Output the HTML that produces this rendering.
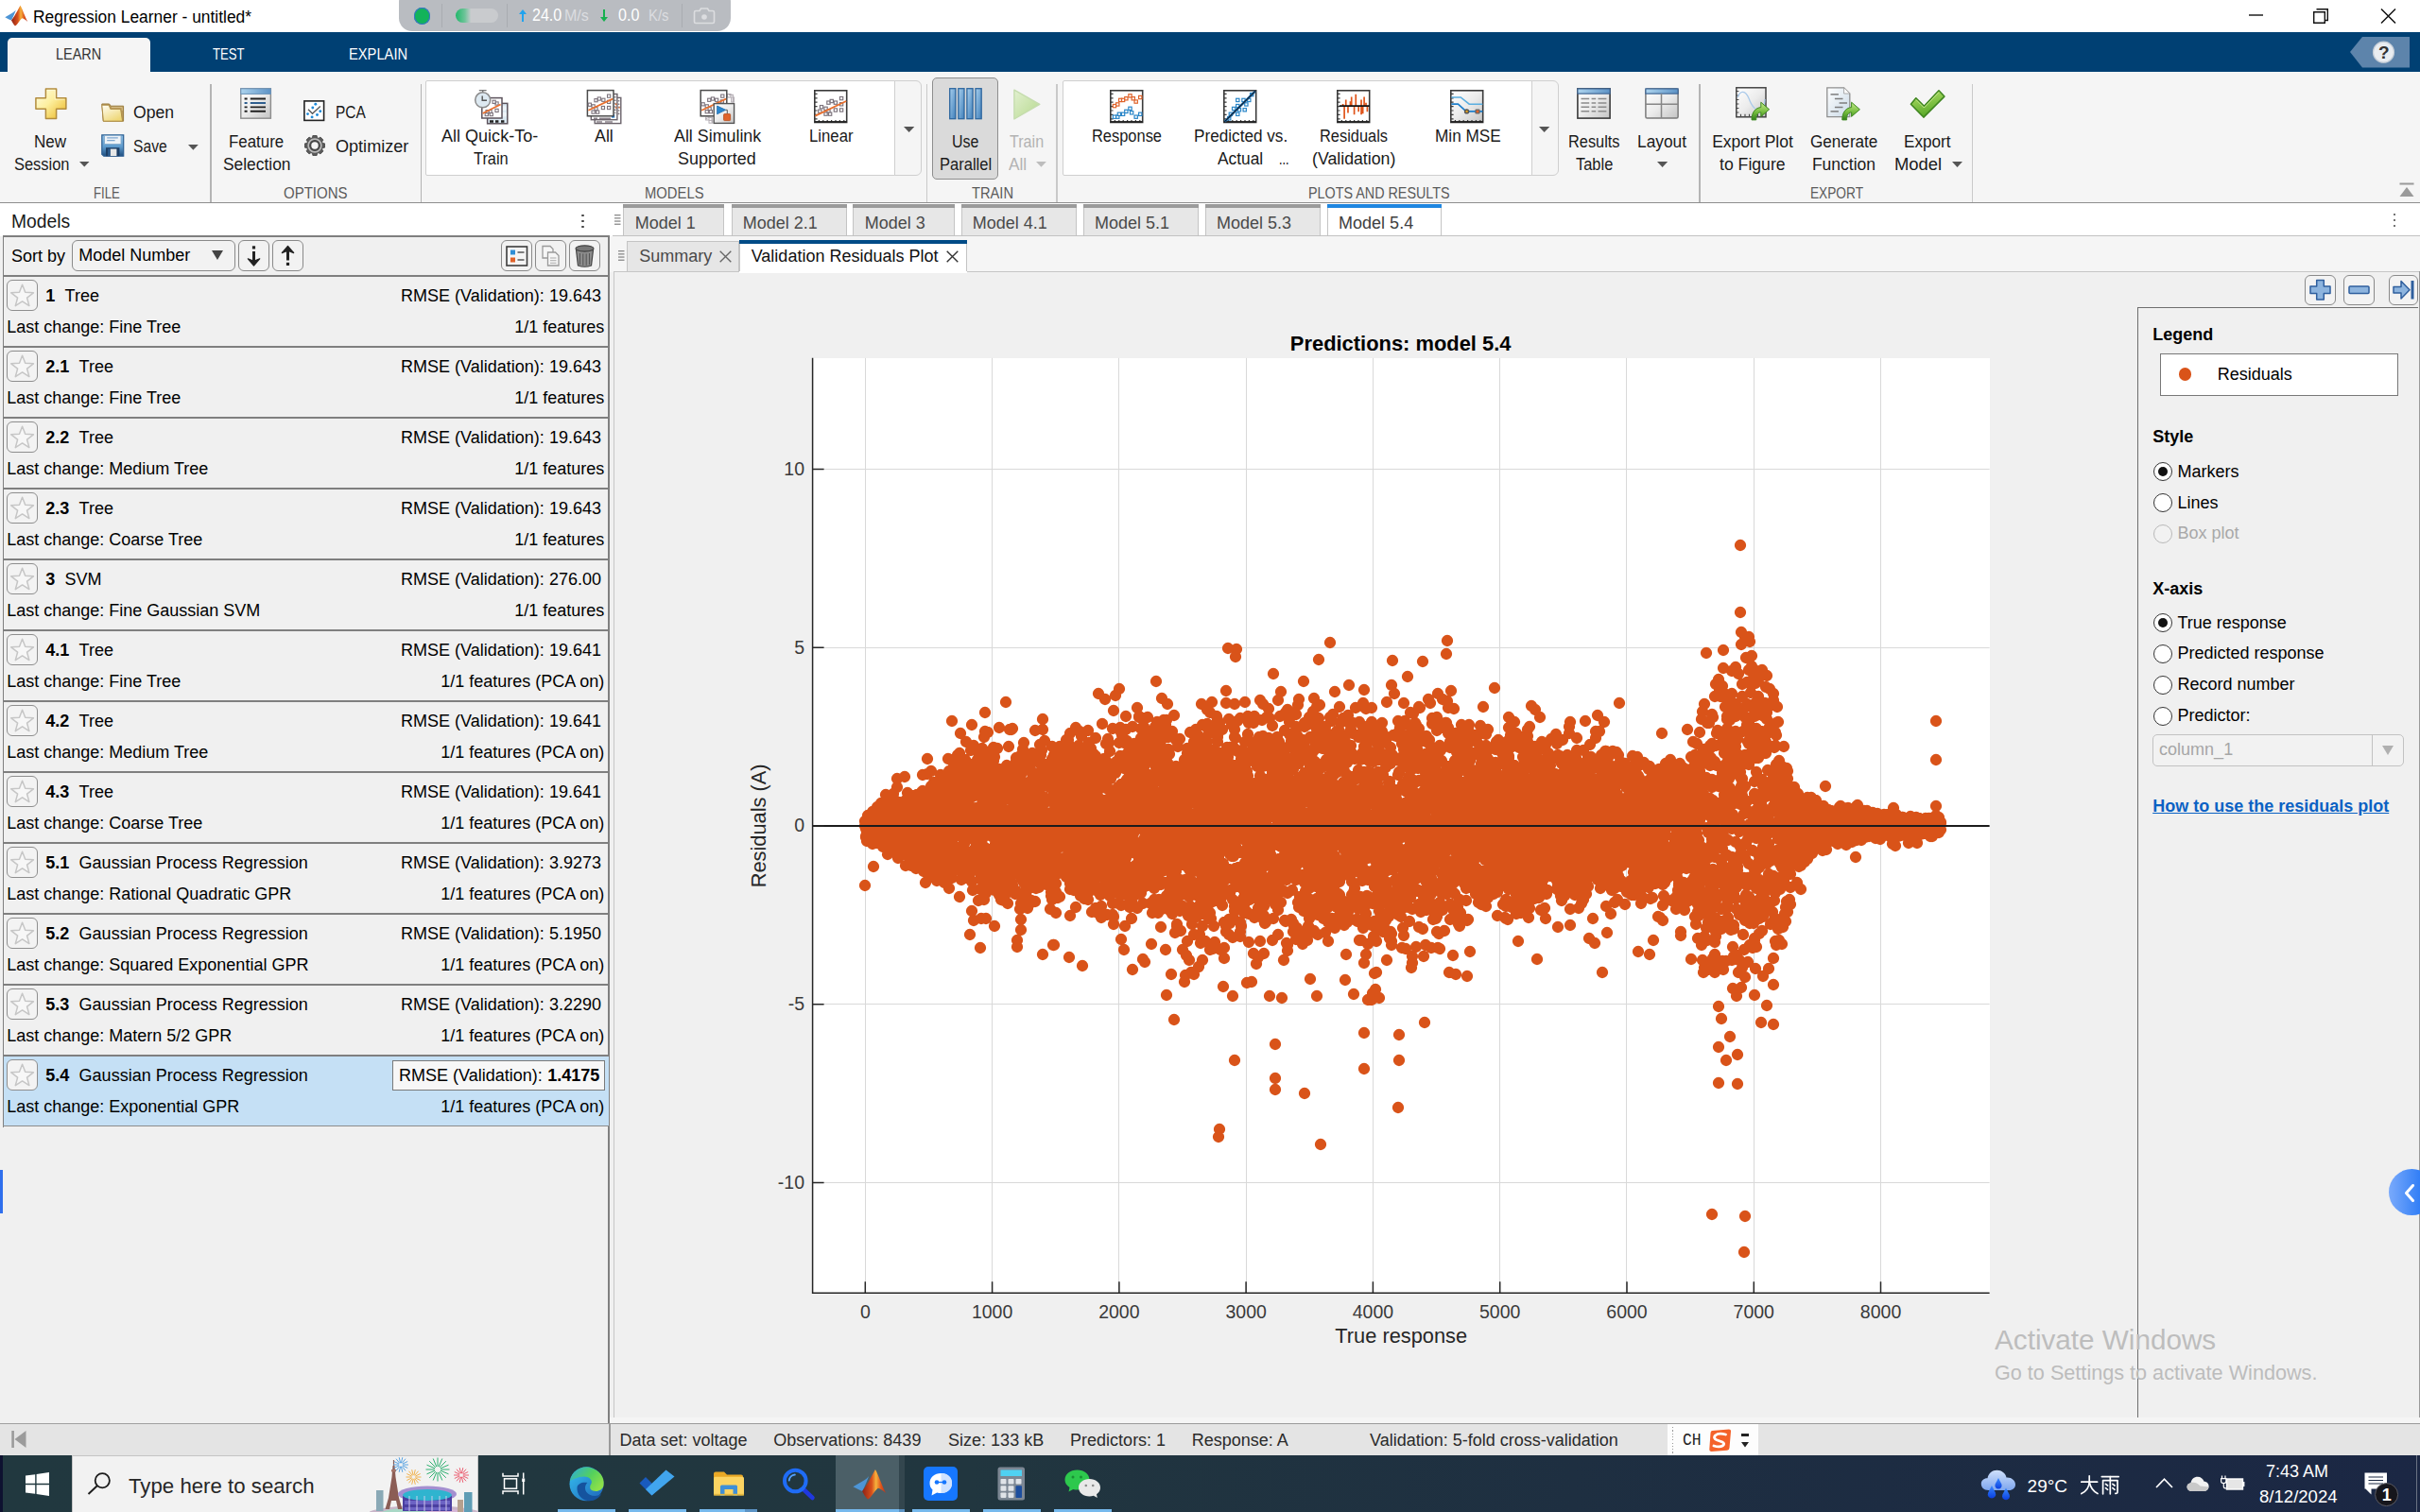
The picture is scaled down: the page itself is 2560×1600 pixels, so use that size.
<!DOCTYPE html>
<html><head><meta charset="utf-8"><title>Regression Learner</title>
<style>
html,body{margin:0;padding:0;overflow:hidden;}
body{width:2560px;height:1600px;overflow:hidden;position:relative;background:#f0f0f0;font-family:"Liberation Sans",sans-serif;}
.a{position:absolute;box-sizing:border-box;}
.t{position:absolute;white-space:pre;line-height:1;transform-origin:0 50%;font-family:"Liberation Sans",sans-serif;}
svg{overflow:visible;}
</style></head><body>
<div class="a" style="left:0px;top:0px;width:2560px;height:34px;background:#fff;"></div>
<svg class="a" style="left:4.6px;top:5.4px;" width="24.6" height="23" viewBox="0 0 24.6 23"><defs><linearGradient id="mlg" x1="0" y1="0" x2="1" y2="0"><stop offset="0" stop-color="#8e2216"/><stop offset="0.4" stop-color="#d8501c"/><stop offset="0.58" stop-color="#f6b23c"/><stop offset="0.78" stop-color="#e0581c"/><stop offset="1" stop-color="#b8301a"/></linearGradient></defs>
<path d="M0.3 13.2L8 8.8C9.6 8 10.6 7 11.8 5.6C10.6 9 9 13 7 16.5L4.4 15.4Z" fill="#4d95d6"/>
<path d="M16.5 0.7C18.6 4 21 12 24.3 18C22 16 20 14.5 18.5 14.3C16 16 13.5 21.5 11 22.4C9.5 21 8 18.6 7 16.5C10 13 13.6 6 16.5 0.7Z" fill="url(#mlg)"/></svg>
<span class="t" style="left:35.00px;top:10px;font-size:17.5px;color:#000;transform:scaleX(0.9936);">Regression Learner - untitled*</span>
<svg class="a" style="left:2379px;top:15px;" width="16" height="2" viewBox="0 0 16 2"><rect width="15" height="1.4" y="0.3" fill="#111"/></svg>
<svg class="a" style="left:2447px;top:9px;" width="17" height="16" viewBox="0 0 17 16"><path d="M3.5 0.7H15.3V12.5H12.5M0.7 3.7H12.3V15.3H0.7Z" fill="none" stroke="#111" stroke-width="1.4"/></svg>
<svg class="a" style="left:2518px;top:9px;" width="17" height="16" viewBox="0 0 17 16"><path d="M1 0.5L16 15.5M16 0.5L1 15.5" stroke="#111" stroke-width="1.5" fill="none"/></svg>
<div class="a" style="left:422px;top:-12px;width:351px;height:44.5px;background:#b9bcc1;border-radius:14px;"></div>
<div class="a" style="left:437.5px;top:8px;width:17.5px;height:17.5px;background:#12b35a;border-radius:9px;box-shadow:0 0 0 1px #3b6ed0 inset;"></div>
<div class="a" style="left:467px;top:4px;width:1px;height:25px;background:#a9acb1;"></div>
<div class="a" style="left:481.5px;top:9px;width:45.5px;height:15px;background:linear-gradient(90deg,#20b86a 0%,#6fc49a 22%,#c9cbce 36%,#c9cbce 100%);border-radius:8px;"></div>
<div class="a" style="left:536px;top:4px;width:1px;height:25px;background:#a9acb1;"></div>
<svg class="a" style="left:548px;top:9px;" width="10" height="15" viewBox="0 0 10 15"><path d="M5 1L1 6H4V14H6V6H9Z" fill="#21a3ee"/></svg>
<span class="t" style="left:562.80px;top:8px;font-size:17.5px;color:#fff;transform:scaleX(0.9160);">24.0</span>
<span class="t" style="left:597.00px;top:9px;font-size:16px;color:#dcdde0;">M/s</span>
<svg class="a" style="left:634px;top:9px;" width="10" height="15" viewBox="0 0 10 15"><path d="M5 14L1 9H4V1H6V9H9Z" fill="#17b04f"/></svg>
<span class="t" style="left:654.00px;top:8px;font-size:17.5px;color:#fff;transform:scaleX(0.9208);">0.0</span>
<span class="t" style="left:686.00px;top:9px;font-size:16px;color:#dcdde0;transform:scaleX(0.9257);">K/s</span>
<div class="a" style="left:721px;top:4px;width:1px;height:25px;background:#a9acb1;"></div>
<svg class="a" style="left:733px;top:7px;" width="24" height="19" viewBox="0 0 24 19"><path d="M3 4.5H7L8.5 2H15.5L17 4.5H21Q22.5 4.5 22.5 6V16Q22.5 17.5 21 17.5H3Q1.5 17.5 1.5 16V6Q1.5 4.5 3 4.5Z" fill="none" stroke="#dcdde0" stroke-width="1.6"/><circle cx="12" cy="11" r="2.8" fill="#dcdde0"/></svg>
<div class="a" style="left:0px;top:34px;width:2560px;height:42px;background:#004073;"></div>
<div class="a" style="left:8px;top:39.5px;width:150.5px;height:37px;background:#f5f5f5;border-radius:5px 5px 0 0;"></div>
<span class="t" style="left:58.50px;top:49px;font-size:16.5px;color:#333;transform:scaleX(0.8760);">LEARN</span>
<span class="t" style="left:225.00px;top:49px;font-size:16.5px;color:#fff;transform:scaleX(0.7944);">TEST</span>
<span class="t" style="left:369.40px;top:49px;font-size:16.5px;color:#fff;transform:scaleX(0.8909);">EXPLAIN</span>
<svg class="a" style="left:2486px;top:39px;" width="63" height="33" viewBox="0 0 63 33"><path d="M13 0H63V32.5H13L0 16Z" fill="#5d84ab"/><circle cx="35.5" cy="16.2" r="11" fill="#e9edf1" stroke="#c3ccd6" stroke-width="1.2"/></svg>
<span class="t" style="left:2515.90px;top:46px;font-size:19px;color:#333;font-weight:bold;">?</span>
<div class="a" style="left:0px;top:76px;width:2560px;height:138px;background:#f5f5f5;"></div>
<div class="a" style="left:0px;top:213.5px;width:2560px;height:1.3px;background:#8e8e8e;"></div>
<div class="a" style="left:222.3px;top:88.5px;width:1.6px;height:125px;background:#b4b4b4;"></div>
<div class="a" style="left:444.5px;top:88.5px;width:1.6px;height:125px;background:#b4b4b4;"></div>
<div class="a" style="left:979.5px;top:88.5px;width:1.6px;height:125px;background:#c9c9c9;"></div>
<div class="a" style="left:1117.3px;top:88.5px;width:1.6px;height:125px;background:#c9c9c9;"></div>
<div class="a" style="left:1797.3px;top:88.5px;width:1.6px;height:125px;background:#b4b4b4;"></div>
<div class="a" style="left:2085.8px;top:88.5px;width:1.6px;height:125px;background:#c9c9c9;"></div>
<span class="t" style="left:98.80px;top:196px;font-size:16.5px;color:#5a5a5a;transform:scaleX(0.7978);">FILE</span>
<span class="t" style="left:300.20px;top:196px;font-size:16.5px;color:#5a5a5a;transform:scaleX(0.9090);">OPTIONS</span>
<span class="t" style="left:681.70px;top:196px;font-size:16.5px;color:#5a5a5a;transform:scaleX(0.8969);">MODELS</span>
<span class="t" style="left:1027.60px;top:196px;font-size:16.5px;color:#5a5a5a;transform:scaleX(0.8889);">TRAIN</span>
<span class="t" style="left:1383.60px;top:196px;font-size:16.5px;color:#5a5a5a;transform:scaleX(0.8694);">PLOTS AND RESULTS</span>
<span class="t" style="left:1914.50px;top:196px;font-size:16.5px;color:#5a5a5a;transform:scaleX(0.8290);">EXPORT</span>
<span class="t" style="left:36.30px;top:142px;font-size:17.5px;color:#1a1a1a;transform:scaleX(0.9740);">New</span>
<span class="t" style="left:14.90px;top:166px;font-size:17.5px;color:#1a1a1a;transform:scaleX(0.9396);">Session</span>
<svg class="a" style="left:84.3px;top:171.4px;" width="10.5" height="5.6" viewBox="0 0 10.5 5.6"><path d="M0 0H10.5L5.25 5.6Z" fill="#555"/></svg>
<span class="t" style="left:140.50px;top:111px;font-size:17.5px;color:#1a1a1a;transform:scaleX(1.0044);">Open</span>
<span class="t" style="left:140.50px;top:147px;font-size:17.5px;color:#1a1a1a;transform:scaleX(0.8950);">Save</span>
<svg class="a" style="left:199.4px;top:153px;" width="10.8" height="5.8" viewBox="0 0 10.8 5.8"><path d="M0 0H10.8L5.4 5.8Z" fill="#555"/></svg>
<span class="t" style="left:242.00px;top:142px;font-size:17.5px;color:#1a1a1a;transform:scaleX(0.9650);">Feature</span>
<span class="t" style="left:235.50px;top:166px;font-size:17.5px;color:#1a1a1a;transform:scaleX(0.9931);">Selection</span>
<span class="t" style="left:355.20px;top:111px;font-size:17.5px;color:#1a1a1a;transform:scaleX(0.8837);">PCA</span>
<span class="t" style="left:355.20px;top:147px;font-size:17.5px;color:#1a1a1a;transform:scaleX(1.0324);">Optimizer</span>
<div class="a" style="left:450px;top:84.5px;width:525px;height:101.5px;background:#f5f5f5;border:1.3px solid #cfcfcf;border-radius:6px;"></div>
<div class="a" style="left:450px;top:84.5px;width:497px;height:101.5px;background:#fff;border:1.3px solid #cfcfcf;border-radius:2px 0 0 2px;"></div>
<span class="t" style="left:467.20px;top:136px;font-size:17.5px;color:#1a1a1a;transform:scaleX(1.0304);">All Quick-To-</span>
<span class="t" style="left:500.50px;top:160px;font-size:17.5px;color:#1a1a1a;transform:scaleX(0.9357);">Train</span>
<span class="t" style="left:628.90px;top:136px;font-size:17.5px;color:#1a1a1a;transform:scaleX(1.0180);">All</span>
<span class="t" style="left:712.80px;top:136px;font-size:17.5px;color:#1a1a1a;transform:scaleX(1.0194);">All Simulink</span>
<span class="t" style="left:717.40px;top:160px;font-size:17.5px;color:#1a1a1a;transform:scaleX(1.0240);">Supported</span>
<span class="t" style="left:855.70px;top:136px;font-size:17.5px;color:#1a1a1a;transform:scaleX(0.9579);">Linear</span>
<svg class="a" style="left:955.6px;top:133.9px;" width="11.3" height="6" viewBox="0 0 11.3 6"><path d="M0 0H11.3L5.65 6Z" fill="#555"/></svg>
<div class="a" style="left:986.3px;top:82.3px;width:69.5px;height:107.5px;background:#dadada;border:1.3px solid #8e8e8e;border-radius:5px;"></div>
<span class="t" style="left:1007.10px;top:142px;font-size:17.5px;color:#1a1a1a;transform:scaleX(0.9126);">Use</span>
<span class="t" style="left:993.70px;top:166px;font-size:17.5px;color:#1a1a1a;transform:scaleX(0.9441);">Parallel</span>
<span class="t" style="left:1067.70px;top:142px;font-size:17.5px;color:#b3b3b3;transform:scaleX(0.9204);">Train</span>
<span class="t" style="left:1066.70px;top:166px;font-size:17.5px;color:#b3b3b3;transform:scaleX(0.9872);">All</span>
<svg class="a" style="left:1096.4px;top:171.3px;" width="10.9" height="5.8" viewBox="0 0 10.9 5.8"><path d="M0 0H10.9L5.45 5.8Z" fill="#bdbdbd"/></svg>
<div class="a" style="left:1124px;top:84.5px;width:525px;height:101.5px;background:#f5f5f5;border:1.3px solid #cfcfcf;border-radius:6px;"></div>
<div class="a" style="left:1124px;top:84.5px;width:497px;height:101.5px;background:#fff;border:1.3px solid #cfcfcf;border-radius:2px 0 0 2px;"></div>
<span class="t" style="left:1155.40px;top:136px;font-size:17.5px;color:#1a1a1a;transform:scaleX(0.9390);">Response</span>
<span class="t" style="left:1263.10px;top:136px;font-size:17.5px;color:#1a1a1a;transform:scaleX(0.9807);">Predicted vs.</span>
<span class="t" style="left:1287.90px;top:160px;font-size:17.5px;color:#1a1a1a;transform:scaleX(0.9910);">Actual</span>
<span class="t" style="left:1352.80px;top:160px;font-size:17.5px;color:#1a1a1a;transform:scaleX(0.7199);">...</span>
<span class="t" style="left:1396.30px;top:136px;font-size:17.5px;color:#1a1a1a;transform:scaleX(0.9369);">Residuals</span>
<span class="t" style="left:1388.30px;top:160px;font-size:17.5px;color:#1a1a1a;transform:scaleX(1.0124);">(Validation)</span>
<span class="t" style="left:1517.50px;top:136px;font-size:17.5px;color:#1a1a1a;transform:scaleX(0.9833);">Min MSE</span>
<svg class="a" style="left:1628.4px;top:133.9px;" width="11.3" height="6" viewBox="0 0 11.3 6"><path d="M0 0H11.3L5.65 6Z" fill="#555"/></svg>
<span class="t" style="left:1659.40px;top:142px;font-size:17.5px;color:#1a1a1a;transform:scaleX(0.9340);">Results</span>
<span class="t" style="left:1667.10px;top:166px;font-size:17.5px;color:#1a1a1a;transform:scaleX(0.9394);">Table</span>
<span class="t" style="left:1732.20px;top:142px;font-size:17.5px;color:#1a1a1a;transform:scaleX(0.9897);">Layout</span>
<svg class="a" style="left:1753.4px;top:171.2px;" width="11.2" height="6" viewBox="0 0 11.2 6"><path d="M0 0H11.2L5.6 6Z" fill="#555"/></svg>
<span class="t" style="left:1811.20px;top:142px;font-size:17.5px;color:#1a1a1a;">Export Plot</span>
<span class="t" style="left:1819.10px;top:166px;font-size:17.5px;color:#1a1a1a;transform:scaleX(1.0078);">to Figure</span>
<span class="t" style="left:1914.90px;top:142px;font-size:17.5px;color:#1a1a1a;transform:scaleX(0.9785);">Generate</span>
<span class="t" style="left:1916.90px;top:166px;font-size:17.5px;color:#1a1a1a;">Function</span>
<span class="t" style="left:2013.50px;top:142px;font-size:17.5px;color:#1a1a1a;transform:scaleX(0.9806);">Export</span>
<span class="t" style="left:2004.20px;top:166px;font-size:17.5px;color:#1a1a1a;transform:scaleX(1.0532);">Model</span>
<svg class="a" style="left:2064.7px;top:171.2px;" width="11" height="6" viewBox="0 0 11 6"><path d="M0 0H11L5.5 6Z" fill="#555"/></svg>
<svg class="a" style="left:2538px;top:193px;" width="16" height="16" viewBox="0 0 16 16"><rect x="0.5" y="0.5" width="15" height="2" fill="#9a9a9a"/><path d="M8 5L15.5 15H0.5Z" fill="#9a9a9a"/></svg>
<svg class="a" width="0" height="0" style="left:0;top:0"><defs>
<linearGradient id="gPlus" x1="0" y1="0" x2="1" y2="1"><stop offset="0" stop-color="#fffde8"/><stop offset="0.45" stop-color="#fdf0a0"/><stop offset="1" stop-color="#eab420"/></linearGradient>
<linearGradient id="gFold" x1="0" y1="0" x2="0.6" y2="1"><stop offset="0" stop-color="#fffef6"/><stop offset="1" stop-color="#efd878"/></linearGradient>
<linearGradient id="gSave" x1="0" y1="0" x2="0" y2="1"><stop offset="0" stop-color="#8fc0e4"/><stop offset="0.55" stop-color="#5f9cce"/><stop offset="1" stop-color="#1f4f80"/></linearGradient>
<linearGradient id="gHdr" x1="0" y1="0" x2="1" y2="0"><stop offset="0" stop-color="#add4ee"/><stop offset="1" stop-color="#5d93c6"/></linearGradient>
<linearGradient id="gBody" x1="0" y1="0" x2="1" y2="1"><stop offset="0" stop-color="#ffffff"/><stop offset="0.5" stop-color="#ececec"/><stop offset="1" stop-color="#c4c4c4"/></linearGradient>
<linearGradient id="gBar" x1="0" y1="0" x2="1" y2="1"><stop offset="0" stop-color="#a9d0ee"/><stop offset="1" stop-color="#3f7fba"/></linearGradient>
<linearGradient id="gPlay" x1="0" y1="0" x2="1" y2="1"><stop offset="0" stop-color="#e2f0d0"/><stop offset="1" stop-color="#b6d98e"/></linearGradient>
<linearGradient id="gArr" x1="0" y1="0" x2="0" y2="1"><stop offset="0" stop-color="#c6ec8a"/><stop offset="0.6" stop-color="#6fb83a"/><stop offset="1" stop-color="#2f7d1a"/></linearGradient>
<linearGradient id="gChk" x1="0" y1="0" x2="0.3" y2="1"><stop offset="0" stop-color="#b9e46c"/><stop offset="1" stop-color="#58a828"/></linearGradient>
<linearGradient id="gDoc" x1="0" y1="0" x2="1" y2="1"><stop offset="0" stop-color="#ffffff"/><stop offset="1" stop-color="#c9d9e6"/></linearGradient>
<radialGradient id="gGear" cx="0.5" cy="0.5" r="0.5"><stop offset="0.45" stop-color="#4a4a4a"/><stop offset="0.7" stop-color="#b4b4b4"/><stop offset="1" stop-color="#4e4e4e"/></radialGradient>
</defs></svg>
<svg class="a" style="left:37px;top:93.4px;" width="33.8" height="33.4" viewBox="0 0 33.8 33.4"><path d="M11.4 0.9H22.6V10.7H32.9V22.3H22.6V32.5H11.4V22.3H0.9V10.7H11.4Z" fill="url(#gPlus)" stroke="#b28c3e" stroke-width="1.5" stroke-linejoin="round"/><path d="M12.8 2.4H21.2V12.2H31.4" fill="none" stroke="#fffbe0" stroke-width="1" opacity="0.7"/></svg>
<svg class="a" style="left:107px;top:108.6px;" width="24.5" height="20.2" viewBox="0 0 24.5 20.2"><path d="M0.8 1H8.6L10.2 3.2H23.6V19.2H2.2Z" fill="#b8995a" stroke="#9a7a3c" stroke-width="1"/><path d="M11 4.6H22.2V8" fill="none" stroke="#d8c08a" stroke-width="1"/><path d="M0.8 2.2H8.2L9.8 6.4H20.6L22.6 19.2H2.4Z" fill="url(#gFold)" stroke="#b09048" stroke-width="1"/></svg>
<svg class="a" style="left:107px;top:142.1px;" width="24.5" height="24" viewBox="0 0 24.5 24"><path d="M0.8 0.8H23.7V23.2H2.8L0.8 21.2Z" fill="url(#gSave)" stroke="#2d5f93" stroke-width="1.2"/><rect x="3.6" y="1.4" width="17.4" height="9.2" fill="#eef3f8" stroke="#7fa6c8" stroke-width="0.8"/><path d="M6.2 3.8H17.8M6.2 6.6H14.6" stroke="#7fa8cf" stroke-width="1.3"/><rect x="5" y="14.2" width="14.4" height="9" fill="#1d3f66"/><rect x="9.6" y="15.6" width="6.8" height="7.4" fill="#e8e8e8"/><rect x="7" y="15.6" width="2.6" height="7.4" fill="#2a5a8c"/></svg>
<svg class="a" style="left:254.4px;top:93.2px;" width="33.2" height="33" viewBox="0 0 33.2 33"><rect x="0.8" y="0.8" width="31.6" height="31.4" fill="url(#gBody)" stroke="#8c8c8c" stroke-width="1.4"/><rect x="0.8" y="0.8" width="31.6" height="5.6" fill="url(#gHdr)" stroke="#6c93b8" stroke-width="1"/><path d="M4.6 11.5H7.6M10.8 11.5H27" stroke="#222" stroke-width="1.9"/><path d="M4.6 16H7.6M10.8 16H27" stroke="#2f5f8f" stroke-width="1.9"/><path d="M4.6 20.4H7.6M10.8 20.4H27" stroke="#222" stroke-width="1.9"/><path d="M4.6 24.8H7.6M10.8 24.8H27" stroke="#222" stroke-width="1.9"/></svg>
<svg class="a" style="left:320.9px;top:106px;" width="22.5" height="22.3" viewBox="0 0 22.5 22.3"><rect x="0.9" y="0.9" width="20.7" height="20.5" fill="#fff" stroke="#222" stroke-width="1.6"/><path d="M5 9.7L9.5 14.3L17.8 6.4" fill="none" stroke="#5a5a5a" stroke-width="1.4"/><circle cx="12.8" cy="4.3" r="1.45" fill="#1f8ad8"/><circle cx="9.8" cy="8.0" r="1.45" fill="#1f8ad8"/><circle cx="17.8" cy="11.7" r="1.45" fill="#1f8ad8"/><circle cx="4.5" cy="14.6" r="1.45" fill="#1f8ad8"/><circle cx="14.5" cy="15.5" r="1.45" fill="#1f8ad8"/><circle cx="9.1" cy="17.9" r="1.45" fill="#1f8ad8"/></svg>
<svg class="a" style="left:322px;top:142.8px;" width="22" height="22" viewBox="0 0 22 22"><path d="M21.49 8.87L21.49 13.13L19.22 13.54L18.61 15.01L19.92 16.91L16.91 19.92L15.01 18.61L13.54 19.22L13.13 21.49L8.87 21.49L8.46 19.22L6.99 18.61L5.09 19.92L2.08 16.91L3.39 15.01L2.78 13.54L0.51 13.13L0.51 8.87L2.78 8.46L3.39 6.99L2.08 5.09L5.09 2.08L6.99 3.39L8.46 2.78L8.87 0.51L13.13 0.51L13.54 2.78L15.01 3.39L16.91 2.08L19.92 5.09L18.61 6.99L19.22 8.46Z" fill="#5a5a5a" stroke="#3f3f3f" stroke-width="0.8" stroke-linejoin="round"/><circle cx="11" cy="11" r="6.6" fill="none" stroke="#b9b9b9" stroke-width="2.2"/><circle cx="11" cy="11" r="4.9" fill="none" stroke="#484848" stroke-width="2"/><circle cx="11" cy="11" r="3.7" fill="#f5f5f5"/></svg>
<svg class="a" style="left:490px;top:88px;" width="50" height="44" viewBox="0 0 50 44"><rect x="25.6" y="21.4" width="21.2" height="21.4" fill="#dbe9f2" stroke="#5c535c" stroke-width="1.5"/><path d="M28 40.5h4M34 40.5h3.4M40 40.5h3.4" stroke="#222" stroke-width="2.6"/><circle cx="43" cy="26.5" r="2.6" fill="#eef4f8"/><circle cx="43.4" cy="33" r="2.6" fill="#eef4f8"/><rect x="19.8" y="15.6" width="21.2" height="21.4" fill="#fff" stroke="#5c535c" stroke-width="1.5"/><rect x="33.94" y="19.89" width="3.2" height="3.2" fill="#fff" fill-opacity="0.6" stroke="#7c737c" stroke-width="1.1"/><rect x="31.04" y="18.23" width="3.2" height="3.2" fill="#fff" fill-opacity="0.6" stroke="#7c737c" stroke-width="1.1"/><rect x="33.94" y="27.33" width="3.2" height="3.2" fill="#fff" fill-opacity="0.6" stroke="#7c737c" stroke-width="1.1"/><rect x="23.19" y="31.46" width="3.2" height="3.2" fill="#fff" fill-opacity="0.6" stroke="#7c737c" stroke-width="1.1"/><rect x="26.91" y="28.57" width="3.2" height="3.2" fill="#fff" fill-opacity="0.6" stroke="#7c737c" stroke-width="1.1"/><rect x="28.15" y="31.46" width="3.2" height="3.2" fill="#fff" fill-opacity="0.6" stroke="#7c737c" stroke-width="1.1"/><rect x="24.02" y="28.57" width="3.2" height="3.2" fill="#fff" fill-opacity="0.6" stroke="#7c737c" stroke-width="1.1"/><path d="M20.6 32L39.6 22.4" stroke="#e8702f" stroke-width="1.7"/><circle cx="20.7" cy="17.8" r="8" fill="#dde9f1" stroke="#8a8a8a" stroke-width="1.5"/><path d="M20.7 9.6V7.6M16.8 7.6H24.6" stroke="#777" stroke-width="1.4"/><path d="M20.2 13.4V18.2H25" fill="none" stroke="#555" stroke-width="1.4"/></svg>
<svg class="a" style="left:490px;top:88px;" width="170" height="46" viewBox="0 0 170 46"><rect x="139.2" y="15.4" width="27.6" height="27.2" fill="#fff" stroke="#6a626a" stroke-width="1.4"/><rect x="135.3" y="11.5" width="27.6" height="27.2" fill="#fff" stroke="#6a626a" stroke-width="1.4"/><path d="M160.6 14v18M164.4 18v16" stroke="#8a828a" stroke-width="2" stroke-dasharray="1.6 1.8"/><path d="M161 22.4h1.4M161 26h1.4M164.6 25.6h1.2" stroke="#e8702f" stroke-width="1.6"/><rect x="157" y="33" width="3.2" height="3.6" fill="#1f7fd6"/><path d="M138 37.3h4M144 37.3h12M141 41h6M150 41h8" stroke="#8a828a" stroke-width="1.5"/><rect x="131.4" y="7.6" width="27.6" height="27.2" fill="#fff" stroke="#4c4c4c" stroke-width="1.5"/><rect x="138.90" y="16.58" width="3.2" height="3.2" fill="#fff" fill-opacity="0.6" stroke="#7c737c" stroke-width="1.1"/><rect x="142.20" y="14.93" width="3.2" height="3.2" fill="#fff" fill-opacity="0.6" stroke="#7c737c" stroke-width="1.1"/><rect x="146.75" y="16.17" width="3.2" height="3.2" fill="#fff" fill-opacity="0.6" stroke="#7c737c" stroke-width="1.1"/><rect x="152.53" y="12.04" width="3.2" height="3.2" fill="#fff" fill-opacity="0.6" stroke="#7c737c" stroke-width="1.1"/><rect x="152.53" y="18.23" width="3.2" height="3.2" fill="#fff" fill-opacity="0.6" stroke="#7c737c" stroke-width="1.1"/><rect x="132.28" y="21.13" width="3.2" height="3.2" fill="#fff" fill-opacity="0.6" stroke="#7c737c" stroke-width="1.1"/><rect x="136.00" y="22.78" width="3.2" height="3.2" fill="#fff" fill-opacity="0.6" stroke="#7c737c" stroke-width="1.1"/><rect x="138.90" y="25.67" width="3.2" height="3.2" fill="#fff" fill-opacity="0.6" stroke="#7c737c" stroke-width="1.1"/><rect x="146.33" y="24.43" width="3.2" height="3.2" fill="#fff" fill-opacity="0.6" stroke="#7c737c" stroke-width="1.1"/><rect x="152.53" y="24.43" width="3.2" height="3.2" fill="#fff" fill-opacity="0.6" stroke="#7c737c" stroke-width="1.1"/><rect x="136.00" y="28.98" width="3.2" height="3.2" fill="#fff" fill-opacity="0.6" stroke="#7c737c" stroke-width="1.1"/><rect x="140.55" y="28.98" width="3.2" height="3.2" fill="#fff" fill-opacity="0.6" stroke="#7c737c" stroke-width="1.1"/><path d="M132.4 28.8L158.2 16.6" stroke="#e8702f" stroke-width="1.8"/></svg>
<svg class="a" style="left:730px;top:88px;" width="50" height="46" viewBox="0 0 50 46"><path d="M41 12.4h4.4v8M19 36.4h4.2v5.4M16 37.6h2.4" fill="none" stroke="#b9b3b9" stroke-width="1.4"/><rect x="39.6" y="11.6" width="3.4" height="3.4" fill="none" stroke="#aaa3aa" stroke-width="1"/><rect x="43.6" y="15" width="3" height="5" fill="none" stroke="#b5afb5" stroke-width="1"/><rect x="16.6" y="36" width="3.4" height="3" fill="none" stroke="#b5afb5" stroke-width="1"/><rect x="20" y="39.4" width="3.6" height="2.8" fill="none" stroke="#b5afb5" stroke-width="1"/><rect x="11.2" y="7.6" width="27.6" height="27.2" fill="#fff" stroke="#4c4c4c" stroke-width="1.5"/><rect x="32.70" y="12.04" width="3.2" height="3.2" fill="#fff" fill-opacity="0.6" stroke="#7c737c" stroke-width="1.1"/><rect x="18.65" y="16.17" width="3.2" height="3.2" fill="#fff" fill-opacity="0.6" stroke="#7c737c" stroke-width="1.1"/><rect x="22.37" y="14.93" width="3.2" height="3.2" fill="#fff" fill-opacity="0.6" stroke="#7c737c" stroke-width="1.1"/><rect x="26.50" y="16.17" width="3.2" height="3.2" fill="#fff" fill-opacity="0.6" stroke="#7c737c" stroke-width="1.1"/><rect x="32.28" y="17.82" width="3.2" height="3.2" fill="#fff" fill-opacity="0.6" stroke="#7c737c" stroke-width="1.1"/><rect x="12.04" y="20.71" width="3.2" height="3.2" fill="#fff" fill-opacity="0.6" stroke="#7c737c" stroke-width="1.1"/><rect x="16.17" y="22.78" width="3.2" height="3.2" fill="#fff" fill-opacity="0.6" stroke="#7c737c" stroke-width="1.1"/><rect x="19.06" y="25.67" width="3.2" height="3.2" fill="#fff" fill-opacity="0.6" stroke="#7c737c" stroke-width="1.1"/><rect x="16.17" y="28.57" width="3.2" height="3.2" fill="#fff" fill-opacity="0.6" stroke="#7c737c" stroke-width="1.1"/><rect x="20.30" y="28.57" width="3.2" height="3.2" fill="#fff" fill-opacity="0.6" stroke="#7c737c" stroke-width="1.1"/><path d="M12.2 28.8L38 16.6" stroke="#e8702f" stroke-width="1.8"/><rect x="25.2" y="21.6" width="21.4" height="20.8" fill="url(#gBody)" stroke="#555" stroke-width="1.4"/><path d="M28.6 24L28.6 32.8L37.6 28.3Z" fill="#2a86cf" stroke="#1c6cb0" stroke-width="0.8"/><path d="M37.6 28.3H39.3V32.4" fill="none" stroke="#555" stroke-width="1"/><rect x="35.6" y="32.6" width="7" height="7" rx="0.8" fill="#e0632a" stroke="#b84a18" stroke-width="0.8"/></svg>
<svg class="a" style="left:861.1px;top:95.3px;" width="35.5" height="35.3" viewBox="0 0 35.5 35.3"><rect x="0.8" y="0.8" width="33.9" height="33.7" fill="#fff" stroke="#3a3a3a" stroke-width="1.6"/><path d="M1 4.4h2.6M5.4 34.3v-2.4M1 8.8h2.6M9.8 34.3v-2.4M1 13.2h2.6M14.2 34.3v-2.4M1 17.6h2.6M18.6 34.3v-2.4M1 22.0h2.6M23.0 34.3v-2.4M1 26.4h2.6M27.4 34.3v-2.4M1 30.8h2.6M31.8 34.3v-2.4" stroke="#3a3a3a" stroke-width="1.2"/><rect x="0.8" y="33.1" width="33.9" height="1.6" fill="#1e1e1e"/><rect x="27.44" y="7.44" width="3.3" height="3.3" fill="#fff" fill-opacity="0.6" stroke="#7c737c" stroke-width="1.15"/><rect x="13.80" y="11.99" width="3.3" height="3.3" fill="#fff" fill-opacity="0.6" stroke="#7c737c" stroke-width="1.15"/><rect x="17.11" y="10.33" width="3.3" height="3.3" fill="#fff" fill-opacity="0.6" stroke="#7c737c" stroke-width="1.15"/><rect x="21.24" y="11.99" width="3.3" height="3.3" fill="#fff" fill-opacity="0.6" stroke="#7c737c" stroke-width="1.15"/><rect x="27.44" y="13.64" width="3.3" height="3.3" fill="#fff" fill-opacity="0.6" stroke="#7c737c" stroke-width="1.15"/><rect x="6.37" y="16.53" width="3.3" height="3.3" fill="#fff" fill-opacity="0.6" stroke="#7c737c" stroke-width="1.15"/><rect x="10.91" y="18.18" width="3.3" height="3.3" fill="#fff" fill-opacity="0.6" stroke="#7c737c" stroke-width="1.15"/><rect x="4.71" y="21.08" width="3.3" height="3.3" fill="#fff" fill-opacity="0.6" stroke="#7c737c" stroke-width="1.15"/><rect x="13.80" y="21.08" width="3.3" height="3.3" fill="#fff" fill-opacity="0.6" stroke="#7c737c" stroke-width="1.15"/><rect x="21.24" y="19.84" width="3.3" height="3.3" fill="#fff" fill-opacity="0.6" stroke="#7c737c" stroke-width="1.15"/><rect x="27.44" y="19.84" width="3.3" height="3.3" fill="#fff" fill-opacity="0.6" stroke="#7c737c" stroke-width="1.15"/><rect x="10.91" y="23.97" width="3.3" height="3.3" fill="#fff" fill-opacity="0.6" stroke="#7c737c" stroke-width="1.15"/><rect x="15.46" y="23.97" width="3.3" height="3.3" fill="#fff" fill-opacity="0.6" stroke="#7c737c" stroke-width="1.15"/><path d="M1.4 27.6L34.2 12" stroke="#e8702f" stroke-width="1.9"/></svg>
<svg class="a" style="left:1174px;top:95.2px;" width="35.5" height="35.3" viewBox="0 0 35.5 35.3"><rect x="0.8" y="0.8" width="33.9" height="33.7" fill="#fff" stroke="#3a3a3a" stroke-width="1.6"/><path d="M1 4.4h2.6M5.4 34.3v-2.4M1 8.8h2.6M9.8 34.3v-2.4M1 13.2h2.6M14.2 34.3v-2.4M1 17.6h2.6M18.6 34.3v-2.4M1 22.0h2.6M23.0 34.3v-2.4M1 26.4h2.6M27.4 34.3v-2.4M1 30.8h2.6M31.8 34.3v-2.4" stroke="#3a3a3a" stroke-width="1.2"/><rect x="0.8" y="33.1" width="33.9" height="1.6" fill="#1e1e1e"/><rect x="3.31" y="15.46" width="3.3" height="3.3" fill="#fff" fill-opacity="0.6" stroke="#e0632a" stroke-width="1.2"/><rect x="6.61" y="13.80" width="3.3" height="3.3" fill="#fff" fill-opacity="0.6" stroke="#e0632a" stroke-width="1.2"/><rect x="9.51" y="9.26" width="3.3" height="3.3" fill="#fff" fill-opacity="0.6" stroke="#e0632a" stroke-width="1.2"/><rect x="12.40" y="9.26" width="3.3" height="3.3" fill="#fff" fill-opacity="0.6" stroke="#e0632a" stroke-width="1.2"/><rect x="15.71" y="7.61" width="3.3" height="3.3" fill="#fff" fill-opacity="0.6" stroke="#e0632a" stroke-width="1.2"/><rect x="19.84" y="4.71" width="3.3" height="3.3" fill="#fff" fill-opacity="0.6" stroke="#e0632a" stroke-width="1.2"/><rect x="23.14" y="7.61" width="3.3" height="3.3" fill="#fff" fill-opacity="0.6" stroke="#e0632a" stroke-width="1.2"/><rect x="26.04" y="10.91" width="3.3" height="3.3" fill="#fff" fill-opacity="0.6" stroke="#e0632a" stroke-width="1.2"/><rect x="30.58" y="6.37" width="3.3" height="3.3" fill="#fff" fill-opacity="0.6" stroke="#e0632a" stroke-width="1.2"/><rect x="3.31" y="27.03" width="3.3" height="3.3" fill="#fff" fill-opacity="0.6" stroke="#2a86c8" stroke-width="1.2"/><rect x="6.61" y="27.03" width="3.3" height="3.3" fill="#fff" fill-opacity="0.6" stroke="#2a86c8" stroke-width="1.2"/><rect x="8.27" y="24.14" width="3.3" height="3.3" fill="#fff" fill-opacity="0.6" stroke="#2a86c8" stroke-width="1.2"/><rect x="12.40" y="24.14" width="3.3" height="3.3" fill="#fff" fill-opacity="0.6" stroke="#2a86c8" stroke-width="1.2"/><rect x="15.71" y="21.24" width="3.3" height="3.3" fill="#fff" fill-opacity="0.6" stroke="#2a86c8" stroke-width="1.2"/><rect x="19.84" y="18.18" width="3.3" height="3.3" fill="#fff" fill-opacity="0.6" stroke="#2a86c8" stroke-width="1.2"/><rect x="21.49" y="22.65" width="3.3" height="3.3" fill="#fff" fill-opacity="0.6" stroke="#2a86c8" stroke-width="1.2"/><rect x="26.04" y="27.03" width="3.3" height="3.3" fill="#fff" fill-opacity="0.6" stroke="#2a86c8" stroke-width="1.2"/><rect x="30.58" y="24.14" width="3.3" height="3.3" fill="#fff" fill-opacity="0.6" stroke="#2a86c8" stroke-width="1.2"/></svg>
<svg class="a" style="left:1294.2px;top:95.2px;" width="35.5" height="35.3" viewBox="0 0 35.5 35.3"><rect x="0.8" y="0.8" width="33.9" height="33.7" fill="#fff" stroke="#3a3a3a" stroke-width="1.6"/><path d="M1 4.4h2.6M5.4 34.3v-2.4M1 8.8h2.6M9.8 34.3v-2.4M1 13.2h2.6M14.2 34.3v-2.4M1 17.6h2.6M18.6 34.3v-2.4M1 22.0h2.6M23.0 34.3v-2.4M1 26.4h2.6M27.4 34.3v-2.4M1 30.8h2.6M31.8 34.3v-2.4" stroke="#3a3a3a" stroke-width="1.2"/><rect x="0.8" y="33.1" width="33.9" height="1.6" fill="#1e1e1e"/><rect x="4.55" y="28.68" width="3.3" height="3.3" fill="#fff" fill-opacity="0.6" stroke="#2a86c8" stroke-width="1.2"/><rect x="6.20" y="24.14" width="3.3" height="3.3" fill="#fff" fill-opacity="0.6" stroke="#2a86c8" stroke-width="1.2"/><rect x="9.51" y="18.35" width="3.3" height="3.3" fill="#fff" fill-opacity="0.6" stroke="#2a86c8" stroke-width="1.2"/><rect x="13.64" y="24.14" width="3.3" height="3.3" fill="#fff" fill-opacity="0.6" stroke="#2a86c8" stroke-width="1.2"/><rect x="13.64" y="15.46" width="3.3" height="3.3" fill="#fff" fill-opacity="0.6" stroke="#2a86c8" stroke-width="1.2"/><rect x="15.29" y="19.59" width="3.3" height="3.3" fill="#fff" fill-opacity="0.6" stroke="#2a86c8" stroke-width="1.2"/><rect x="21.08" y="19.59" width="3.3" height="3.3" fill="#fff" fill-opacity="0.6" stroke="#2a86c8" stroke-width="1.2"/><rect x="13.64" y="9.26" width="3.3" height="3.3" fill="#fff" fill-opacity="0.6" stroke="#2a86c8" stroke-width="1.2"/><rect x="19.84" y="9.26" width="3.3" height="3.3" fill="#fff" fill-opacity="0.6" stroke="#2a86c8" stroke-width="1.2"/><rect x="22.73" y="13.80" width="3.3" height="3.3" fill="#fff" fill-opacity="0.6" stroke="#2a86c8" stroke-width="1.2"/><rect x="25.62" y="9.26" width="3.3" height="3.3" fill="#fff" fill-opacity="0.6" stroke="#2a86c8" stroke-width="1.2"/><rect x="28.52" y="3.47" width="3.3" height="3.3" fill="#fff" fill-opacity="0.6" stroke="#2a86c8" stroke-width="1.2"/><path d="M1.6 33.6L34 1.4" stroke="#1a5f9a" stroke-width="2.4"/><path d="M1.6 33.6L34 1.4" stroke="#111" stroke-width="1"/></svg>
<svg class="a" style="left:1414px;top:95.2px;" width="35.5" height="35.3" viewBox="0 0 35.5 35.3"><rect x="0.8" y="0.8" width="33.9" height="33.7" fill="#fff" stroke="#3a3a3a" stroke-width="1.6"/><path d="M1 4.4h2.6M5.4 34.3v-2.4M1 8.8h2.6M9.8 34.3v-2.4M1 13.2h2.6M14.2 34.3v-2.4M1 17.6h2.6M18.6 34.3v-2.4M1 22.0h2.6M23.0 34.3v-2.4M1 26.4h2.6M27.4 34.3v-2.4M1 30.8h2.6M31.8 34.3v-2.4" stroke="#3a3a3a" stroke-width="1.2"/><rect x="0.8" y="33.1" width="33.9" height="1.6" fill="#1e1e1e"/><path d="M6.61 15.04V17.11M8.10 17.11V30.74M9.75 10.50V17.11M11.98 17.11V24.55M14.46 12.15V17.11M15.70 7.60V17.11M18.60 17.11V26.20M20.25 4.71V17.11M23.14 17.11V23.31M26.03 10.50V26.20M27.69 17.11V25.37M29.09 7.60V17.11M30.99 13.80V17.11M32.40 17.11V23.31" stroke="#e0541a" stroke-width="1.7"/><path d="M2.8 17.1H35" stroke="#111" stroke-width="1.7"/></svg>
<svg class="a" style="left:1534.2px;top:95.2px;" width="35.5" height="35.3" viewBox="0 0 35.5 35.3"><rect x="0.8" y="0.8" width="33.9" height="33.7" fill="url(#gBody)" stroke="#3a3a3a" stroke-width="1.6"/><path d="M1 4.4h2.6M5.4 34.3v-2.4M1 8.8h2.6M9.8 34.3v-2.4M1 13.2h2.6M14.2 34.3v-2.4M1 17.6h2.6M18.6 34.3v-2.4M1 22.0h2.6M23.0 34.3v-2.4M1 26.4h2.6M27.4 34.3v-2.4M1 30.8h2.6M31.8 34.3v-2.4" stroke="#3a3a3a" stroke-width="1.2"/><rect x="0.8" y="33.1" width="33.9" height="1.6" fill="#1e1e1e"/><path d="M1.4 8H11.2L20.2 15.2H34.4" fill="none" stroke="#5aaee0" stroke-width="1.6"/><path d="M1.4 15.2H8.4L17 22.9H34.4" fill="none" stroke="#1f80cc" stroke-width="1.7"/><circle cx="17.6" cy="22.9" r="2.7" fill="#555"/><circle cx="17.6" cy="22.9" r="1.2" fill="#e0a020"/><rect x="26.4" y="20.4" width="5.2" height="5.2" rx="1.4" fill="#666"/><rect x="27.7" y="21.7" width="2.6" height="2.6" fill="#e0632a"/></svg>
<svg class="a" style="left:1004px;top:93.3px;" width="35" height="34" viewBox="0 0 35 34"><rect x="0.7" y="0.7" width="6.2" height="32" fill="url(#gBar)" stroke="#2f679e" stroke-width="1.3"/><rect x="9.8" y="0.7" width="6.2" height="32" fill="url(#gBar)" stroke="#2f679e" stroke-width="1.3"/><rect x="18.9" y="0.7" width="6.2" height="32" fill="url(#gBar)" stroke="#2f679e" stroke-width="1.3"/><rect x="28" y="0.7" width="6.2" height="32" fill="url(#gBar)" stroke="#2f679e" stroke-width="1.3"/></svg>
<svg class="a" style="left:1072.4px;top:93.6px;" width="29" height="33.2" viewBox="0 0 29 33.2"><path d="M0.9 1.2L27.8 16.4L0.9 32Z" fill="url(#gPlay)" stroke="#c5dcae" stroke-width="1.4" stroke-linejoin="round"/></svg>
<svg class="a" style="left:1668px;top:93.3px;" width="36" height="33" viewBox="0 0 36 33"><rect x="0.9" y="0.9" width="34.2" height="31.2" fill="url(#gBody)" stroke="#3c3c3c" stroke-width="1.6"/><rect x="0.9" y="0.9" width="34.2" height="5.2" fill="url(#gHdr)" stroke="#3f6593" stroke-width="1.2"/><path d="M4.5 11.4H13.2M15.6 11.4H20.2M22.5 11.4H31.4" stroke="#8a8a8a" stroke-width="1.5"/><path d="M4.5 15.9H13.2M15.6 15.9H20.2M22.5 15.9H31.4" stroke="#8a8a8a" stroke-width="1.5"/><path d="M4.5 20.3H13.2M15.6 20.3H20.2M22.5 20.3H31.4" stroke="#8a8a8a" stroke-width="1.5"/><path d="M4.5 24.8H13.2M15.6 24.8H20.2M22.5 24.8H31.4" stroke="#8a8a8a" stroke-width="1.5"/></svg>
<svg class="a" style="left:1740.1px;top:93.3px;" width="36" height="33" viewBox="0 0 36 33"><rect x="0.9" y="0.9" width="34.2" height="31.2" rx="1.6" fill="url(#gBody)" stroke="#7a7a7a" stroke-width="1.5"/><rect x="0.9" y="0.9" width="34.2" height="5.2" fill="url(#gHdr)" stroke="#3f6593" stroke-width="1.2"/><path d="M17.5 6.2V32M1 17.2H35" stroke="#868686" stroke-width="1.5"/></svg>
<svg class="a" style="left:1836px;top:92.1px;" width="37" height="36" viewBox="0 0 37 36"><rect x="0.8" y="0.8" width="31.2" height="31" fill="url(#gBody)" stroke="#444" stroke-width="1.5"/><path d="M1 4.5h2.4M5.5 31v-2.2M1 9.0h2.4M10.0 31v-2.2M1 13.5h2.4M14.5 31v-2.2M1 18.0h2.4M19.0 31v-2.2M1 22.5h2.4M23.5 31v-2.2M1 27.0h2.4M28.0 31v-2.2" stroke="#444" stroke-width="1.1"/><path d="M2.2 11C5 3 10.5 3.5 14 12C17 20.5 22 26.5 27 24C29.5 22.5 30.8 17 31 13" fill="none" stroke="#a9c9ea" stroke-width="1.3"/><g transform="translate(16.2,15.4)"><path d="M0.8 19.5C0.6 11 5.5 6.5 10.6 6.2V0.8L19.4 8.4L10.6 16V11.4C7 11.6 5.4 14.6 5.6 19.5Z" fill="url(#gArr)" stroke="#3f8a22" stroke-width="1" stroke-linejoin="round"/></g></svg>
<svg class="a" style="left:1932.2px;top:92.1px;" width="37" height="36" viewBox="0 0 37 36"><path d="M0.8 0.8H18.6L24.8 7V31.6H0.8Z" fill="url(#gDoc)" stroke="#8f8f8f" stroke-width="1.3"/><path d="M18.6 0.8V7H24.8Z" fill="#fff" stroke="#a0a0a0" stroke-width="0.9"/><path d="M4.5 7.9H12.9" stroke="#7d7d7d" stroke-width="1.5"/><path d="M8.9 12.5H17.5" stroke="#7d7d7d" stroke-width="1.5"/><path d="M13.6 17H22" stroke="#7d7d7d" stroke-width="1.5"/><path d="M8.9 21.5H17.5" stroke="#7d7d7d" stroke-width="1.5"/><path d="M4.5 25.9H12.9" stroke="#7d7d7d" stroke-width="1.5"/><g transform="translate(16,15.4)"><path d="M0.8 19.5C0.6 11 5.5 6.5 10.6 6.2V0.8L19.4 8.4L10.6 16V11.4C7 11.6 5.4 14.6 5.6 19.5Z" fill="url(#gArr)" stroke="#3f8a22" stroke-width="1" stroke-linejoin="round"/></g></svg>
<svg class="a" style="left:2020px;top:94px;" width="39" height="32" viewBox="0 0 39 32"><path d="M1.4 16.2L6.8 9.7L15.4 18.3L31 1.7L36.9 8.1L14.9 30.1Z" fill="url(#gChk)" stroke="#3f8520" stroke-width="1.5" stroke-linejoin="round"/><path d="M7 11.6L15.4 20L31 3.6" fill="none" stroke="#d6f0a0" stroke-width="1" opacity="0.8"/></svg>
<div class="a" style="left:645px;top:215px;width:1915px;height:35px;background:#fff;"></div>
<div class="a" style="left:644px;top:216px;width:1.3px;height:34px;background:#6a6a6a;"></div>
<svg class="a" style="left:650.2px;top:226.8px;" width="7" height="12" viewBox="0 0 7 12"><rect x="0" y="0" width="6.5" height="1.3" fill="#8a8a8a"/><rect x="0" y="3.2" width="6.5" height="1.3" fill="#8a8a8a"/><rect x="0" y="6.4" width="6.5" height="1.3" fill="#8a8a8a"/><rect x="0" y="9.6" width="6.5" height="1.3" fill="#8a8a8a"/></svg>
<div class="a" style="left:659.4px;top:216.3px;width:107.1px;height:33.4px;background:#e7e7e7;border:1px solid #c4c4c4;border-top:none;"></div>
<div class="a" style="left:659.4px;top:216.3px;width:107.1px;height:3.7px;background:#9b9b9b;"></div>
<span class="t" style="left:671.70px;top:227px;font-size:18px;color:#4a4a4a;">Model 1</span>
<div class="a" style="left:773.5px;top:216.3px;width:122.4px;height:33.4px;background:#e7e7e7;border:1px solid #c4c4c4;border-top:none;"></div>
<div class="a" style="left:773.5px;top:216.3px;width:122.4px;height:3.7px;background:#9b9b9b;"></div>
<span class="t" style="left:785.80px;top:227px;font-size:18px;color:#4a4a4a;">Model 2.1</span>
<div class="a" style="left:902.4px;top:216.3px;width:107.4px;height:33.4px;background:#e7e7e7;border:1px solid #c4c4c4;border-top:none;"></div>
<div class="a" style="left:902.4px;top:216.3px;width:107.4px;height:3.7px;background:#9b9b9b;"></div>
<span class="t" style="left:914.70px;top:227px;font-size:18px;color:#4a4a4a;">Model 3</span>
<div class="a" style="left:1016.5px;top:216.3px;width:122.2px;height:33.4px;background:#e7e7e7;border:1px solid #c4c4c4;border-top:none;"></div>
<div class="a" style="left:1016.5px;top:216.3px;width:122.2px;height:3.7px;background:#9b9b9b;"></div>
<span class="t" style="left:1028.80px;top:227px;font-size:18px;color:#4a4a4a;">Model 4.1</span>
<div class="a" style="left:1145.6px;top:216.3px;width:122.4px;height:33.4px;background:#e7e7e7;border:1px solid #c4c4c4;border-top:none;"></div>
<div class="a" style="left:1145.6px;top:216.3px;width:122.4px;height:3.7px;background:#9b9b9b;"></div>
<span class="t" style="left:1157.90px;top:227px;font-size:18px;color:#4a4a4a;">Model 5.1</span>
<div class="a" style="left:1274.7px;top:216.3px;width:122.1px;height:33.4px;background:#e7e7e7;border:1px solid #c4c4c4;border-top:none;"></div>
<div class="a" style="left:1274.7px;top:216.3px;width:122.1px;height:3.7px;background:#9b9b9b;"></div>
<span class="t" style="left:1287.00px;top:227px;font-size:18px;color:#4a4a4a;">Model 5.3</span>
<div class="a" style="left:1403.8px;top:216.3px;width:121.6px;height:34.5px;background:#fff;border:1px solid #c4c4c4;border-top:none;border-bottom:none;"></div>
<div class="a" style="left:1403.8px;top:216.3px;width:121.6px;height:3.7px;background:#1f86e0;"></div>
<span class="t" style="left:1416.10px;top:227px;font-size:18px;color:#404040;">Model 5.4</span>
<div class="a" style="left:645px;top:249.1px;width:1915px;height:1.1px;background:#c2c2c2;"></div>
<div class="a" style="left:2531.7px;top:225.7px;width:2.6px;height:2.6px;background:#444;border-radius:1.3px;"></div>
<div class="a" style="left:2531.7px;top:231.7px;width:2.6px;height:2.6px;background:#444;border-radius:1.3px;"></div>
<div class="a" style="left:2531.7px;top:237.7px;width:2.6px;height:2.6px;background:#444;border-radius:1.3px;"></div>
<div class="a" style="left:645.3px;top:250.2px;width:1915px;height:37.8px;background:#f5f5f5;"></div>
<svg class="a" style="left:653.8px;top:264.6px;" width="7" height="12" viewBox="0 0 7 12"><rect x="0" y="0" width="6.5" height="1.3" fill="#8a8a8a"/><rect x="0" y="3.2" width="6.5" height="1.3" fill="#8a8a8a"/><rect x="0" y="6.4" width="6.5" height="1.3" fill="#8a8a8a"/><rect x="0" y="9.6" width="6.5" height="1.3" fill="#8a8a8a"/></svg>
<div class="a" style="left:663.3px;top:254.6px;width:118.5px;height:33px;background:#e6e6e6;border:1px solid #c4c4c4;"></div>
<span class="t" style="left:676.20px;top:262px;font-size:18px;color:#4a4a4a;">Summary</span>
<svg class="a" style="left:761px;top:264.5px;" width="13" height="13" viewBox="0 0 13 13"><path d="M0.7 0.7L12.3 12.3M12.3 0.7L0.7 12.3" stroke="#666" stroke-width="1.4"/></svg>
<div class="a" style="left:781.8px;top:254.4px;width:240.8px;height:34px;background:#fff;border:1px solid #c4c4c4;border-top:none;border-bottom:none;"></div>
<div class="a" style="left:781.8px;top:254.2px;width:240.8px;height:4px;background:#004b87;"></div>
<span class="t" style="left:794.70px;top:262px;font-size:18px;color:#111;">Validation Residuals Plot</span>
<svg class="a" style="left:1001px;top:264.5px;" width="13" height="13" viewBox="0 0 13 13"><path d="M0.7 0.7L12.3 12.3M12.3 0.7L0.7 12.3" stroke="#333" stroke-width="1.4"/></svg>
<div class="a" style="left:649.2px;top:287.2px;width:1911px;height:1213px;background:#f0f0f0;border:1px solid #c6c6c6;border-bottom:none;"></div>
<div class="a" style="left:781.8px;top:286.5px;width:240.8px;height:2px;background:#fff;"></div>
<div class="a" style="left:645px;top:1500px;width:1915px;height:6px;background:#f5f5f5;"></div>
<div class="a" style="left:2559px;top:287px;width:1px;height:1213px;background:#9a9a9a;"></div>
<div class="a" style="left:859.6px;top:378.8px;width:1245px;height:989.4px;background:#fff;"></div>
<svg class="a" style="left:0;top:0" width="2560" height="1540" viewBox="0 0 2560 1540"><path d="M915.5 378.8V1368.2M1049.5 378.8V1368.2M1183.5 378.8V1368.2M1318.5 378.8V1368.2M1452.5 378.8V1368.2M1586.5 378.8V1368.2M1720.5 378.8V1368.2M1855.5 378.8V1368.2M1989.5 378.8V1368.2M859.6 1251.5H2104.6M859.6 1062.5H2104.6M859.6 874.5H2104.6M859.6 685.5H2104.6M859.6 496.5H2104.6" stroke="#d9d9d9" stroke-width="1" fill="none"/><path d="M915 869h0M915 874h0M916 873h0M916 871h0M916 885h0M916 885h0M916 877h0M916 886h0M917 888h0M917 881h0M917 867h0M917 875h0M917 875h0M917 872h0M917 879h0M917 875h0M917 878h0M917 890h0M918 875h0M918 866h0M918 866h0M918 874h0M918 880h0M918 870h0M918 863h0M918 881h0M918 884h0M919 870h0M919 869h0M919 878h0M919 867h0M919 884h0M919 874h0M919 875h0M920 875h0M920 888h0M920 882h0M920 868h0M920 889h0M920 871h0M920 883h0M920 885h0M921 867h0M921 886h0M921 869h0M921 876h0M921 886h0M921 872h0M922 879h0M922 888h0M922 883h0M922 865h0M922 885h0M922 865h0M922 861h0M922 883h0M922 888h0M922 861h0M922 863h0M923 883h0M923 862h0M923 893h0M923 886h0M923 859h0M923 870h0M923 876h0M923 872h0M924 867h0M924 863h0M924 867h0M924 882h0M924 871h0M924 866h0M924 888h0M925 870h0M925 871h0M925 882h0M925 867h0M925 877h0M925 877h0M925 875h0M926 888h0M926 874h0M926 871h0M926 888h0M926 860h0M926 877h0M927 863h0M927 870h0M927 892h0M927 863h0M927 872h0M928 868h0M928 889h0M928 854h0M928 872h0M928 872h0M928 882h0M928 866h0M928 873h0M929 886h0M929 878h0M929 880h0M929 861h0M929 888h0M930 875h0M930 862h0M930 878h0M931 859h0M931 878h0M931 873h0M931 868h0M931 860h0M931 866h0M932 850h0M932 880h0M932 882h0M932 879h0M932 860h0M932 889h0M932 875h0M932 858h0M932 864h0M933 869h0M933 890h0M933 882h0M933 863h0M933 864h0M933 861h0M933 873h0M933 877h0M933 889h0M933 874h0M934 875h0M934 878h0M934 868h0M934 877h0M934 876h0M934 856h0M934 856h0M934 896h0M935 882h0M935 875h0M935 868h0M935 882h0M936 893h0M936 890h0M936 860h0M936 867h0M936 855h0M936 862h0M936 877h0M936 865h0M937 893h0M937 841h0M937 860h0M937 879h0M937 853h0M937 874h0M937 892h0M938 860h0M938 880h0M938 874h0M939 898h0M939 857h0M939 875h0M939 877h0M939 879h0M939 904h0M939 880h0M939 886h0M940 856h0M940 870h0M940 856h0M940 892h0M940 870h0M940 874h0M940 883h0M940 868h0M941 862h0M941 876h0M941 857h0M941 881h0M941 880h0M941 873h0M942 883h0M942 850h0M942 896h0M942 856h0M942 862h0M942 858h0M942 854h0M942 874h0M942 879h0M943 881h0M943 893h0M943 893h0M943 873h0M943 861h0M943 867h0M944 874h0M944 871h0M944 876h0M944 892h0M944 898h0M944 867h0M945 877h0M945 840h0M945 846h0M945 892h0M945 874h0M945 862h0M946 877h0M946 866h0M946 858h0M946 878h0M946 901h0M946 855h0M946 860h0M946 876h0M946 867h0M946 868h0M947 895h0M947 867h0M947 876h0M947 864h0M947 881h0M947 874h0M947 866h0M947 866h0M947 893h0M947 895h0M947 867h0M947 853h0M948 860h0M948 864h0M948 874h0M948 858h0M948 848h0M948 881h0M948 851h0M948 880h0M948 866h0M948 860h0M949 866h0M949 886h0M949 887h0M949 874h0M949 824h0M949 850h0M949 833h0M949 886h0M950 855h0M950 861h0M950 870h0M950 895h0M950 884h0M950 872h0M950 879h0M950 888h0M950 862h0M950 896h0M950 892h0M950 869h0M950 908h0M950 900h0M951 889h0M951 869h0M951 887h0M951 884h0M951 857h0M951 854h0M951 878h0M951 849h0M952 888h0M952 856h0M952 864h0M952 871h0M953 877h0M953 860h0M953 887h0M954 889h0M954 889h0M954 869h0M954 872h0M954 894h0M954 870h0M955 891h0M955 883h0M955 886h0M955 878h0M955 885h0M955 904h0M956 894h0M956 891h0M956 882h0M956 896h0M956 877h0M956 901h0M956 890h0M957 867h0M957 901h0M957 822h0M958 889h0M958 916h0M958 897h0M958 847h0M958 876h0M958 870h0M958 859h0M959 859h0M959 877h0M959 900h0M959 885h0M959 864h0M960 865h0M960 866h0M960 860h0M960 839h0M960 869h0M960 882h0M960 851h0M960 900h0M960 858h0M960 885h0M961 842h0M961 856h0M961 889h0M961 877h0M961 863h0M961 870h0M961 906h0M961 906h0M961 861h0M962 861h0M962 883h0M962 892h0M962 864h0M962 879h0M962 893h0M963 888h0M963 893h0M963 881h0M964 856h0M964 914h0M964 883h0M964 845h0M964 901h0M964 916h0M964 888h0M964 905h0M964 863h0M964 883h0M964 844h0M965 850h0M965 864h0M965 913h0M965 849h0M965 870h0M966 884h0M966 851h0M966 852h0M966 888h0M966 914h0M966 860h0M966 903h0M966 866h0M966 857h0M966 888h0M966 891h0M967 842h0M967 902h0M967 891h0M967 860h0M967 874h0M967 849h0M968 853h0M968 878h0M968 866h0M968 895h0M968 856h0M969 917h0M969 864h0M969 919h0M969 861h0M969 874h0M970 878h0M970 881h0M970 851h0M970 855h0M970 899h0M970 846h0M970 843h0M970 889h0M970 883h0M970 841h0M970 897h0M970 860h0M970 893h0M970 898h0M971 904h0M971 885h0M971 911h0M971 900h0M972 871h0M972 911h0M972 851h0M972 877h0M973 858h0M973 870h0M973 861h0M973 893h0M974 888h0M974 887h0M974 917h0M974 855h0M974 880h0M974 841h0M974 851h0M975 863h0M975 854h0M975 863h0M975 887h0M975 891h0M975 852h0M975 838h0M975 907h0M976 880h0M976 864h0M976 837h0M976 854h0M976 887h0M976 854h0M976 863h0M976 887h0M976 867h0M976 820h0M976 859h0M976 862h0M976 900h0M977 860h0M977 887h0M977 896h0M977 856h0M977 922h0M977 858h0M978 914h0M978 877h0M978 900h0M978 910h0M978 885h0M978 913h0M978 891h0M979 934h0M979 850h0M979 861h0M979 862h0M979 890h0M979 863h0M979 906h0M979 898h0M979 884h0M980 872h0M980 891h0M980 847h0M980 839h0M980 864h0M980 860h0M980 857h0M980 864h0M980 918h0M981 803h0M981 819h0M981 859h0M981 855h0M981 855h0M981 858h0M981 857h0M981 840h0M982 879h0M982 904h0M982 860h0M982 847h0M982 849h0M982 857h0M982 845h0M982 854h0M982 893h0M982 924h0M982 923h0M983 851h0M983 890h0M983 854h0M983 892h0M983 911h0M983 904h0M984 869h0M984 922h0M984 882h0M984 855h0M985 816h0M985 920h0M985 875h0M985 832h0M985 869h0M985 918h0M985 880h0M986 903h0M986 886h0M986 833h0M986 882h0M986 914h0M986 840h0M986 860h0M987 909h0M987 858h0M987 906h0M987 874h0M987 832h0M987 872h0M987 912h0M987 854h0M988 887h0M988 842h0M988 929h0M988 909h0M988 828h0M988 874h0M988 850h0M988 842h0M989 880h0M989 856h0M989 847h0M989 854h0M989 881h0M989 864h0M989 830h0M989 864h0M990 864h0M990 868h0M990 866h0M990 904h0M990 852h0M990 870h0M990 880h0M990 882h0M990 855h0M990 873h0M990 856h0M990 917h0M990 869h0M990 856h0M991 932h0M991 911h0M991 847h0M991 903h0M991 894h0M991 851h0M991 876h0M991 914h0M992 920h0M992 930h0M992 834h0M992 846h0M992 894h0M992 837h0M993 881h0M993 873h0M993 827h0M993 880h0M993 855h0M994 854h0M994 888h0M994 896h0M994 849h0M994 916h0M995 869h0M995 870h0M995 895h0M995 857h0M995 856h0M995 892h0M995 820h0M995 902h0M995 900h0M995 895h0M996 861h0M996 841h0M996 885h0M996 909h0M996 911h0M996 881h0M996 858h0M997 866h0M997 857h0M997 875h0M997 909h0M997 865h0M997 851h0M997 912h0M998 899h0M998 905h0M998 869h0M998 870h0M998 926h0M998 901h0M998 887h0M999 902h0M999 900h0M999 909h0M999 892h0M999 882h0M999 873h0M999 837h0M999 903h0M999 911h0M999 850h0M999 934h0M1000 868h0M1000 849h0M1000 866h0M1000 891h0M1000 911h0M1000 888h0M1000 886h0M1000 834h0M1000 924h0M1000 868h0M1000 876h0M1000 874h0M1000 920h0M1000 843h0M1001 859h0M1001 864h0M1001 908h0M1001 897h0M1001 897h0M1002 827h0M1002 859h0M1002 907h0M1002 829h0M1002 903h0M1002 929h0M1002 873h0M1002 877h0M1002 870h0M1002 930h0M1002 830h0M1002 866h0M1003 910h0M1003 886h0M1003 828h0M1003 920h0M1003 875h0M1003 913h0M1003 827h0M1003 910h0M1003 879h0M1003 803h0M1003 854h0M1004 820h0M1004 816h0M1004 860h0M1004 914h0M1004 818h0M1004 880h0M1004 940h0M1004 886h0M1004 871h0M1005 892h0M1005 835h0M1005 868h0M1005 870h0M1005 837h0M1005 865h0M1005 828h0M1005 911h0M1005 919h0M1006 868h0M1006 887h0M1006 847h0M1006 895h0M1006 833h0M1006 922h0M1006 909h0M1006 863h0M1006 816h0M1007 843h0M1007 891h0M1007 882h0M1007 929h0M1007 763h0M1007 855h0M1007 907h0M1007 839h0M1007 916h0M1007 846h0M1008 804h0M1008 861h0M1008 813h0M1008 912h0M1008 848h0M1008 876h0M1008 873h0M1008 825h0M1009 886h0M1009 864h0M1009 847h0M1010 858h0M1010 813h0M1010 848h0M1010 884h0M1010 868h0M1011 874h0M1011 855h0M1011 879h0M1011 909h0M1011 883h0M1011 883h0M1011 873h0M1012 816h0M1012 808h0M1012 897h0M1012 821h0M1012 883h0M1012 870h0M1012 825h0M1012 862h0M1013 846h0M1013 913h0M1013 804h0M1013 840h0M1013 909h0M1013 799h0M1014 883h0M1014 897h0M1014 909h0M1014 858h0M1014 875h0M1014 901h0M1014 880h0M1014 867h0M1014 832h0M1014 809h0M1014 843h0M1015 838h0M1015 949h0M1015 841h0M1015 908h0M1015 864h0M1015 797h0M1015 920h0M1015 921h0M1015 843h0M1016 921h0M1016 818h0M1016 881h0M1016 914h0M1016 830h0M1016 815h0M1016 776h0M1016 916h0M1016 823h0M1016 870h0M1017 824h0M1017 931h0M1017 876h0M1017 828h0M1017 883h0M1017 909h0M1017 852h0M1018 836h0M1018 838h0M1019 832h0M1019 902h0M1019 911h0M1019 823h0M1019 833h0M1019 888h0M1019 862h0M1020 856h0M1020 871h0M1020 907h0M1020 878h0M1020 845h0M1020 893h0M1020 878h0M1020 872h0M1020 861h0M1020 882h0M1020 864h0M1020 858h0M1021 889h0M1021 804h0M1021 858h0M1021 929h0M1022 908h0M1022 888h0M1022 915h0M1022 785h0M1022 868h0M1022 882h0M1023 928h0M1023 887h0M1023 850h0M1023 864h0M1023 872h0M1023 927h0M1023 914h0M1024 831h0M1024 906h0M1025 811h0M1025 869h0M1025 926h0M1025 928h0M1025 913h0M1025 843h0M1026 869h0M1026 989h0M1026 886h0M1026 902h0M1026 816h0M1026 906h0M1027 922h0M1027 877h0M1027 874h0M1027 859h0M1027 842h0M1027 809h0M1027 854h0M1027 837h0M1027 794h0M1028 874h0M1028 933h0M1028 767h0M1028 866h0M1028 964h0M1028 919h0M1028 883h0M1028 829h0M1028 918h0M1028 834h0M1028 869h0M1029 831h0M1029 878h0M1029 825h0M1029 882h0M1029 942h0M1029 843h0M1029 888h0M1029 817h0M1029 888h0M1029 861h0M1029 864h0M1030 789h0M1030 918h0M1030 921h0M1030 820h0M1030 879h0M1030 876h0M1030 835h0M1030 918h0M1030 974h0M1031 826h0M1031 863h0M1031 875h0M1031 906h0M1032 900h0M1032 862h0M1032 897h0M1032 887h0M1032 884h0M1032 916h0M1032 899h0M1032 904h0M1033 916h0M1033 857h0M1033 861h0M1033 855h0M1033 906h0M1034 819h0M1034 815h0M1034 879h0M1034 864h0M1034 804h0M1035 826h0M1035 825h0M1035 953h0M1035 839h0M1035 869h0M1036 878h0M1036 799h0M1036 905h0M1036 899h0M1036 887h0M1037 941h0M1037 930h0M1037 859h0M1037 835h0M1037 866h0M1037 919h0M1037 858h0M1037 843h0M1037 807h0M1037 923h0M1037 923h0M1038 972h0M1038 897h0M1038 796h0M1038 911h0M1038 889h0M1038 832h0M1038 881h0M1038 836h0M1039 864h0M1039 792h0M1039 888h0M1039 824h0M1039 851h0M1039 871h0M1039 908h0M1039 864h0M1039 900h0M1040 878h0M1040 919h0M1040 854h0M1040 881h0M1040 819h0M1040 941h0M1040 809h0M1040 908h0M1041 852h0M1041 952h0M1041 780h0M1041 883h0M1041 858h0M1041 809h0M1041 805h0M1042 897h0M1042 909h0M1042 854h0M1042 919h0M1042 774h0M1042 839h0M1042 936h0M1043 855h0M1043 972h0M1043 813h0M1043 902h0M1043 817h0M1043 861h0M1043 848h0M1043 814h0M1043 823h0M1043 945h0M1043 822h0M1044 872h0M1044 802h0M1044 837h0M1044 829h0M1044 915h0M1044 810h0M1044 863h0M1044 930h0M1045 775h0M1045 829h0M1045 849h0M1045 915h0M1045 912h0M1046 875h0M1046 883h0M1046 818h0M1046 922h0M1046 842h0M1046 845h0M1046 939h0M1047 808h0M1047 901h0M1047 820h0M1047 936h0M1048 832h0M1048 904h0M1048 802h0M1048 829h0M1048 820h0M1048 861h0M1048 795h0M1048 804h0M1049 917h0M1049 885h0M1049 917h0M1049 873h0M1049 810h0M1050 853h0M1050 820h0M1050 824h0M1050 921h0M1050 800h0M1050 880h0M1050 900h0M1050 841h0M1050 849h0M1050 873h0M1050 860h0M1051 805h0M1051 938h0M1051 791h0M1051 862h0M1052 896h0M1052 801h0M1052 980h0M1052 916h0M1052 932h0M1052 942h0M1053 893h0M1053 859h0M1054 898h0M1054 883h0M1054 913h0M1055 792h0M1055 843h0M1055 865h0M1055 895h0M1055 867h0M1055 862h0M1055 923h0M1055 936h0M1056 935h0M1056 834h0M1056 830h0M1056 893h0M1056 874h0M1056 852h0M1056 900h0M1056 934h0M1057 910h0M1057 770h0M1057 842h0M1057 872h0M1057 947h0M1057 814h0M1057 848h0M1057 883h0M1058 913h0M1058 855h0M1058 894h0M1058 921h0M1058 938h0M1058 919h0M1058 881h0M1058 887h0M1058 864h0M1058 825h0M1058 865h0M1059 931h0M1059 952h0M1059 846h0M1059 916h0M1059 858h0M1060 848h0M1060 922h0M1060 817h0M1060 902h0M1060 917h0M1060 887h0M1060 907h0M1060 868h0M1060 869h0M1061 887h0M1061 938h0M1061 839h0M1061 820h0M1061 848h0M1062 873h0M1062 912h0M1062 932h0M1062 921h0M1062 825h0M1062 863h0M1062 817h0M1062 838h0M1062 953h0M1062 858h0M1062 868h0M1063 824h0M1063 906h0M1063 891h0M1063 824h0M1063 880h0M1063 896h0M1063 916h0M1063 822h0M1063 858h0M1064 893h0M1064 863h0M1064 896h0M1064 884h0M1064 835h0M1064 942h0M1064 844h0M1065 872h0M1065 821h0M1065 945h0M1065 819h0M1065 810h0M1065 911h0M1065 880h0M1066 860h0M1066 956h0M1066 872h0M1066 812h0M1066 861h0M1066 894h0M1066 911h0M1066 822h0M1067 870h0M1067 918h0M1067 829h0M1067 886h0M1067 863h0M1067 871h0M1067 876h0M1067 790h0M1068 825h0M1068 813h0M1068 929h0M1068 879h0M1068 843h0M1068 772h0M1068 872h0M1068 930h0M1068 920h0M1069 857h0M1069 862h0M1069 887h0M1069 905h0M1069 861h0M1069 837h0M1069 883h0M1069 865h0M1069 841h0M1070 892h0M1070 772h0M1070 936h0M1070 816h0M1071 936h0M1071 825h0M1071 771h0M1071 845h0M1072 841h0M1072 850h0M1072 868h0M1072 873h0M1072 894h0M1072 815h0M1072 821h0M1072 842h0M1072 944h0M1072 876h0M1072 902h0M1072 907h0M1072 840h0M1072 900h0M1073 919h0M1073 833h0M1073 904h0M1073 943h0M1073 890h0M1074 878h0M1074 921h0M1074 897h0M1074 894h0M1074 946h0M1075 867h0M1075 805h0M1075 891h0M1075 822h0M1075 943h0M1075 802h0M1076 812h0M1076 875h0M1076 811h0M1076 854h0M1076 882h0M1076 848h0M1076 858h0M1077 909h0M1077 872h0M1077 891h0M1077 836h0M1077 906h0M1077 918h0M1077 925h0M1077 884h0M1077 825h0M1077 806h0M1078 859h0M1078 829h0M1078 883h0M1078 831h0M1078 830h0M1078 868h0M1078 833h0M1078 906h0M1079 911h0M1079 900h0M1079 834h0M1079 916h0M1079 962h0M1079 902h0M1079 850h0M1079 900h0M1079 946h0M1079 887h0M1080 973h0M1080 830h0M1080 929h0M1080 860h0M1080 850h0M1080 840h0M1080 895h0M1080 956h0M1080 920h0M1080 984h0M1081 880h0M1081 864h0M1081 818h0M1081 923h0M1081 798h0M1082 884h0M1082 910h0M1082 829h0M1082 883h0M1082 908h0M1082 878h0M1082 840h0M1082 806h0M1082 793h0M1082 834h0M1082 903h0M1083 856h0M1083 934h0M1083 879h0M1083 810h0M1083 919h0M1083 913h0M1083 858h0M1083 828h0M1083 786h0M1083 803h0M1083 816h0M1084 934h0M1084 863h0M1084 919h0M1084 850h0M1084 892h0M1084 843h0M1084 801h0M1084 891h0M1084 854h0M1085 810h0M1085 921h0M1085 810h0M1085 913h0M1085 880h0M1085 952h0M1085 883h0M1085 845h0M1085 805h0M1085 910h0M1086 854h0M1086 882h0M1086 949h0M1086 895h0M1086 804h0M1086 814h0M1086 940h0M1086 869h0M1086 917h0M1086 854h0M1087 848h0M1087 890h0M1087 899h0M1087 961h0M1087 838h0M1087 811h0M1087 833h0M1087 837h0M1087 865h0M1087 888h0M1087 864h0M1087 930h0M1087 829h0M1087 889h0M1087 863h0M1088 850h0M1088 899h0M1088 884h0M1088 809h0M1088 912h0M1088 847h0M1088 924h0M1089 900h0M1089 868h0M1089 940h0M1089 934h0M1089 953h0M1090 815h0M1090 938h0M1090 838h0M1091 901h0M1091 880h0M1091 909h0M1091 832h0M1091 955h0M1091 852h0M1091 953h0M1091 930h0M1091 915h0M1092 817h0M1092 797h0M1092 861h0M1092 893h0M1092 825h0M1092 907h0M1092 824h0M1093 895h0M1093 832h0M1093 896h0M1093 874h0M1093 831h0M1094 931h0M1094 866h0M1094 911h0M1094 913h0M1094 903h0M1094 892h0M1094 865h0M1095 900h0M1095 849h0M1095 773h0M1095 835h0M1095 866h0M1095 954h0M1095 896h0M1096 940h0M1096 926h0M1096 932h0M1096 902h0M1096 911h0M1096 927h0M1097 835h0M1097 830h0M1097 806h0M1097 842h0M1097 826h0M1097 874h0M1097 835h0M1097 917h0M1097 845h0M1098 886h0M1098 888h0M1098 847h0M1098 878h0M1098 872h0M1098 885h0M1098 838h0M1098 804h0M1098 820h0M1099 824h0M1099 906h0M1099 861h0M1099 912h0M1099 927h0M1099 883h0M1099 939h0M1099 865h0M1099 863h0M1099 863h0M1099 878h0M1099 882h0M1099 933h0M1100 923h0M1100 818h0M1100 825h0M1100 853h0M1100 850h0M1100 920h0M1100 909h0M1100 788h0M1101 834h0M1101 922h0M1101 795h0M1101 876h0M1101 799h0M1101 926h0M1101 906h0M1101 906h0M1102 794h0M1102 823h0M1102 928h0M1102 857h0M1102 900h0M1102 915h0M1102 832h0M1102 830h0M1102 852h0M1102 843h0M1102 814h0M1102 909h0M1102 896h0M1103 865h0M1103 811h0M1103 824h0M1103 935h0M1103 829h0M1103 922h0M1103 868h0M1103 814h0M1103 761h0M1103 772h0M1103 869h0M1103 1010h0M1104 878h0M1104 908h0M1104 914h0M1104 866h0M1104 847h0M1104 845h0M1104 860h0M1105 809h0M1105 933h0M1105 844h0M1105 923h0M1105 866h0M1105 883h0M1105 877h0M1105 874h0M1105 901h0M1105 784h0M1105 809h0M1105 845h0M1106 900h0M1106 924h0M1106 920h0M1106 897h0M1107 860h0M1107 860h0M1107 925h0M1107 936h0M1107 817h0M1108 823h0M1108 934h0M1108 872h0M1108 889h0M1108 848h0M1108 889h0M1109 890h0M1109 809h0M1109 861h0M1109 822h0M1109 862h0M1109 902h0M1109 867h0M1109 821h0M1109 931h0M1109 868h0M1110 830h0M1110 896h0M1110 875h0M1110 833h0M1110 891h0M1110 899h0M1111 926h0M1111 910h0M1111 962h0M1111 934h0M1111 872h0M1112 905h0M1112 886h0M1112 876h0M1112 888h0M1112 948h0M1112 899h0M1112 875h0M1112 848h0M1112 944h0M1113 920h0M1113 818h0M1113 808h0M1113 865h0M1113 914h0M1113 927h0M1113 803h0M1113 790h0M1113 952h0M1113 906h0M1114 847h0M1114 1000h0M1114 915h0M1114 930h0M1114 894h0M1114 922h0M1114 806h0M1115 1000h0M1115 829h0M1115 926h0M1115 896h0M1115 870h0M1115 898h0M1115 867h0M1115 840h0M1115 799h0M1116 925h0M1116 900h0M1116 845h0M1116 811h0M1116 907h0M1116 856h0M1117 966h0M1117 935h0M1117 896h0M1117 944h0M1117 826h0M1117 897h0M1117 890h0M1117 816h0M1117 828h0M1118 916h0M1118 876h0M1118 925h0M1118 890h0M1119 909h0M1119 950h0M1119 793h0M1119 873h0M1119 857h0M1119 851h0M1119 908h0M1119 834h0M1119 898h0M1120 869h0M1120 838h0M1120 829h0M1120 883h0M1120 885h0M1121 851h0M1121 846h0M1121 862h0M1121 914h0M1121 949h0M1121 817h0M1121 829h0M1121 790h0M1121 826h0M1121 801h0M1122 916h0M1122 916h0M1122 865h0M1122 892h0M1122 867h0M1122 811h0M1122 850h0M1122 877h0M1123 850h0M1123 843h0M1123 880h0M1123 861h0M1123 872h0M1123 911h0M1124 818h0M1124 876h0M1124 842h0M1124 888h0M1124 877h0M1124 864h0M1124 911h0M1124 878h0M1124 794h0M1125 810h0M1125 909h0M1125 860h0M1125 830h0M1125 919h0M1125 841h0M1126 822h0M1126 908h0M1126 835h0M1126 826h0M1127 806h0M1127 880h0M1127 796h0M1128 928h0M1128 783h0M1128 897h0M1128 865h0M1128 895h0M1129 848h0M1129 914h0M1129 804h0M1129 852h0M1129 893h0M1129 896h0M1129 803h0M1130 791h0M1130 786h0M1130 858h0M1130 900h0M1130 891h0M1130 871h0M1130 889h0M1130 835h0M1130 783h0M1130 921h0M1130 845h0M1130 844h0M1131 867h0M1131 868h0M1131 887h0M1131 807h0M1131 1013h0M1132 924h0M1132 816h0M1132 935h0M1132 941h0M1132 927h0M1132 791h0M1132 912h0M1132 776h0M1132 969h0M1133 875h0M1133 912h0M1133 875h0M1133 804h0M1133 902h0M1133 823h0M1133 910h0M1133 863h0M1133 833h0M1134 830h0M1134 922h0M1134 883h0M1134 939h0M1134 900h0M1134 890h0M1134 918h0M1134 822h0M1134 880h0M1134 924h0M1135 869h0M1135 828h0M1135 909h0M1135 854h0M1135 941h0M1135 822h0M1136 809h0M1136 871h0M1136 897h0M1136 898h0M1136 841h0M1136 850h0M1136 795h0M1136 920h0M1136 942h0M1136 879h0M1136 929h0M1137 877h0M1137 843h0M1137 920h0M1137 855h0M1137 914h0M1137 814h0M1137 885h0M1137 840h0M1137 843h0M1137 893h0M1137 924h0M1138 770h0M1138 827h0M1138 960h0M1138 839h0M1138 815h0M1138 814h0M1138 864h0M1139 894h0M1139 809h0M1139 908h0M1139 913h0M1139 899h0M1140 894h0M1140 918h0M1140 900h0M1141 840h0M1141 854h0M1141 934h0M1141 796h0M1141 789h0M1141 816h0M1141 850h0M1141 804h0M1141 895h0M1141 866h0M1141 863h0M1141 827h0M1142 880h0M1142 941h0M1142 774h0M1142 829h0M1142 832h0M1143 834h0M1143 928h0M1143 906h0M1143 791h0M1143 872h0M1143 924h0M1143 948h0M1144 804h0M1144 866h0M1144 818h0M1144 914h0M1144 827h0M1144 779h0M1144 798h0M1144 918h0M1145 914h0M1145 882h0M1145 861h0M1145 915h0M1145 865h0M1145 804h0M1145 863h0M1145 1022h0M1146 866h0M1146 809h0M1146 923h0M1146 904h0M1147 929h0M1147 903h0M1147 951h0M1147 915h0M1147 891h0M1147 886h0M1147 888h0M1147 833h0M1148 825h0M1148 890h0M1148 826h0M1148 941h0M1148 883h0M1148 808h0M1149 816h0M1149 925h0M1149 874h0M1149 893h0M1149 894h0M1149 836h0M1149 874h0M1150 861h0M1150 845h0M1150 936h0M1150 904h0M1150 850h0M1150 951h0M1150 859h0M1150 861h0M1150 876h0M1151 952h0M1151 874h0M1151 945h0M1151 884h0M1151 834h0M1151 895h0M1151 773h0M1152 825h0M1152 786h0M1152 843h0M1152 803h0M1152 834h0M1152 836h0M1153 806h0M1153 897h0M1153 886h0M1153 822h0M1154 800h0M1154 874h0M1154 792h0M1154 818h0M1154 817h0M1154 877h0M1154 924h0M1154 898h0M1154 879h0M1154 846h0M1155 965h0M1155 829h0M1155 833h0M1155 845h0M1155 890h0M1155 863h0M1155 907h0M1155 916h0M1155 807h0M1156 818h0M1156 932h0M1156 921h0M1156 808h0M1156 892h0M1156 931h0M1156 861h0M1156 927h0M1157 858h0M1157 798h0M1157 905h0M1158 915h0M1158 827h0M1158 873h0M1158 895h0M1158 815h0M1158 850h0M1158 845h0M1158 893h0M1158 937h0M1158 873h0M1158 891h0M1159 876h0M1159 875h0M1159 800h0M1159 903h0M1159 895h0M1159 911h0M1159 961h0M1159 848h0M1159 781h0M1159 837h0M1159 857h0M1160 840h0M1160 850h0M1160 964h0M1160 885h0M1160 909h0M1160 878h0M1161 831h0M1161 895h0M1161 966h0M1161 943h0M1161 812h0M1161 842h0M1162 890h0M1162 899h0M1162 881h0M1162 815h0M1162 855h0M1162 853h0M1162 859h0M1162 902h0M1162 855h0M1162 829h0M1162 809h0M1163 905h0M1163 849h0M1163 871h0M1163 834h0M1164 876h0M1164 823h0M1164 947h0M1164 878h0M1164 869h0M1164 920h0M1164 872h0M1165 888h0M1165 909h0M1165 959h0M1165 928h0M1165 911h0M1165 832h0M1165 971h0M1166 879h0M1166 912h0M1166 766h0M1166 885h0M1166 869h0M1167 884h0M1167 833h0M1167 924h0M1167 920h0M1167 910h0M1167 857h0M1167 860h0M1168 901h0M1168 885h0M1168 888h0M1168 887h0M1168 803h0M1168 847h0M1168 805h0M1168 896h0M1169 936h0M1169 820h0M1169 827h0M1169 888h0M1169 740h0M1169 911h0M1169 831h0M1170 787h0M1170 805h0M1170 821h0M1170 815h0M1170 877h0M1170 893h0M1170 830h0M1170 855h0M1170 831h0M1171 922h0M1171 888h0M1171 939h0M1171 929h0M1171 907h0M1171 825h0M1171 822h0M1171 932h0M1171 877h0M1171 937h0M1171 885h0M1171 968h0M1172 834h0M1172 848h0M1172 782h0M1172 810h0M1172 785h0M1172 927h0M1172 861h0M1172 835h0M1173 880h0M1173 905h0M1173 786h0M1173 930h0M1174 914h0M1174 948h0M1174 878h0M1174 795h0M1174 816h0M1175 936h0M1175 843h0M1175 933h0M1175 884h0M1175 824h0M1175 909h0M1175 872h0M1175 914h0M1176 897h0M1176 813h0M1176 852h0M1176 861h0M1176 883h0M1176 841h0M1177 864h0M1177 771h0M1177 916h0M1177 956h0M1177 929h0M1177 916h0M1177 903h0M1177 878h0M1177 864h0M1177 849h0M1177 968h0M1177 924h0M1178 752h0M1178 896h0M1178 908h0M1178 931h0M1178 857h0M1178 978h0M1178 879h0M1178 852h0M1178 919h0M1178 970h0M1178 810h0M1179 941h0M1179 929h0M1179 813h0M1179 925h0M1179 864h0M1180 876h0M1180 736h0M1180 849h0M1180 892h0M1180 897h0M1180 812h0M1180 818h0M1181 936h0M1181 878h0M1181 815h0M1181 901h0M1181 930h0M1181 806h0M1181 872h0M1181 887h0M1181 932h0M1182 905h0M1182 842h0M1182 834h0M1183 833h0M1183 895h0M1183 866h0M1183 881h0M1183 905h0M1183 941h0M1183 918h0M1183 956h0M1183 855h0M1183 855h0M1184 882h0M1184 833h0M1184 946h0M1184 881h0M1184 864h0M1184 786h0M1184 858h0M1185 839h0M1185 906h0M1185 914h0M1185 800h0M1185 927h0M1185 861h0M1185 854h0M1185 770h0M1185 901h0M1186 830h0M1186 874h0M1186 846h0M1186 849h0M1186 947h0M1186 875h0M1186 994h0M1186 834h0M1186 901h0M1186 882h0M1186 775h0M1186 958h0M1187 876h0M1187 850h0M1187 934h0M1187 778h0M1188 805h0M1188 837h0M1188 928h0M1188 858h0M1188 772h0M1188 925h0M1188 928h0M1188 875h0M1188 897h0M1188 927h0M1189 804h0M1189 917h0M1189 813h0M1189 860h0M1189 914h0M1189 844h0M1189 1005h0M1189 871h0M1190 929h0M1190 904h0M1190 945h0M1190 851h0M1190 980h0M1190 862h0M1190 861h0M1190 894h0M1191 922h0M1191 892h0M1191 919h0M1191 915h0M1191 772h0M1191 787h0M1191 908h0M1191 879h0M1191 758h0M1191 938h0M1191 928h0M1191 935h0M1192 900h0M1192 784h0M1192 798h0M1192 868h0M1192 860h0M1192 859h0M1192 825h0M1192 889h0M1193 824h0M1193 881h0M1193 831h0M1193 897h0M1193 923h0M1193 838h0M1193 880h0M1193 800h0M1193 920h0M1193 926h0M1193 918h0M1194 830h0M1194 882h0M1194 925h0M1194 895h0M1194 849h0M1194 837h0M1194 878h0M1194 828h0M1194 875h0M1194 949h0M1195 798h0M1195 800h0M1195 834h0M1195 857h0M1195 960h0M1195 844h0M1195 828h0M1195 940h0M1195 875h0M1195 929h0M1196 860h0M1196 813h0M1196 883h0M1196 790h0M1196 856h0M1196 952h0M1196 835h0M1196 881h0M1196 933h0M1196 929h0M1197 972h0M1197 925h0M1197 897h0M1197 815h0M1197 954h0M1198 812h0M1198 881h0M1198 827h0M1198 887h0M1198 902h0M1198 769h0M1198 819h0M1198 839h0M1198 884h0M1198 861h0M1198 1026h0M1198 882h0M1199 880h0M1199 841h0M1199 856h0M1199 925h0M1199 882h0M1199 938h0M1199 918h0M1199 841h0M1199 808h0M1200 945h0M1200 862h0M1200 879h0M1200 787h0M1200 927h0M1200 794h0M1200 849h0M1200 876h0M1201 916h0M1201 832h0M1201 903h0M1201 804h0M1201 947h0M1202 939h0M1202 892h0M1202 926h0M1202 945h0M1202 794h0M1203 902h0M1203 834h0M1203 863h0M1203 810h0M1203 749h0M1203 934h0M1203 864h0M1203 961h0M1203 941h0M1204 937h0M1204 869h0M1204 828h0M1204 928h0M1204 923h0M1204 855h0M1204 819h0M1204 814h0M1204 810h0M1204 862h0M1204 864h0M1205 910h0M1205 862h0M1205 759h0M1205 758h0M1205 937h0M1205 834h0M1205 848h0M1205 925h0M1205 940h0M1206 795h0M1206 842h0M1206 944h0M1206 921h0M1206 913h0M1206 925h0M1206 931h0M1207 821h0M1207 930h0M1207 855h0M1207 935h0M1207 781h0M1207 784h0M1207 822h0M1207 847h0M1207 945h0M1207 771h0M1207 856h0M1208 919h0M1208 824h0M1208 876h0M1208 941h0M1208 902h0M1209 760h0M1209 1015h0M1209 802h0M1209 820h0M1209 894h0M1209 925h0M1209 820h0M1209 956h0M1210 891h0M1210 935h0M1210 846h0M1210 879h0M1210 769h0M1210 874h0M1210 888h0M1211 896h0M1211 844h0M1211 810h0M1211 830h0M1211 1018h0M1211 857h0M1212 901h0M1212 803h0M1212 912h0M1212 832h0M1213 860h0M1213 830h0M1213 870h0M1213 882h0M1213 904h0M1213 791h0M1214 895h0M1214 879h0M1214 855h0M1214 937h0M1214 759h0M1215 927h0M1215 903h0M1215 820h0M1215 917h0M1216 883h0M1216 873h0M1216 858h0M1216 863h0M1216 924h0M1216 777h0M1216 839h0M1216 805h0M1216 785h0M1217 828h0M1217 956h0M1217 925h0M1217 892h0M1217 874h0M1217 798h0M1217 834h0M1217 912h0M1217 888h0M1218 853h0M1218 882h0M1218 842h0M1218 825h0M1218 844h0M1218 999h0M1218 876h0M1219 906h0M1219 966h0M1219 800h0M1219 841h0M1220 930h0M1220 830h0M1220 862h0M1220 927h0M1220 879h0M1221 843h0M1221 874h0M1221 859h0M1221 940h0M1221 937h0M1221 952h0M1222 922h0M1222 911h0M1222 961h0M1222 821h0M1222 854h0M1222 769h0M1222 826h0M1222 933h0M1222 872h0M1223 795h0M1223 812h0M1223 890h0M1223 845h0M1223 919h0M1223 816h0M1223 819h0M1223 773h0M1223 879h0M1223 953h0M1223 795h0M1224 913h0M1224 890h0M1224 852h0M1224 779h0M1224 922h0M1224 866h0M1224 811h0M1224 920h0M1224 764h0M1224 790h0M1225 848h0M1225 847h0M1225 886h0M1225 893h0M1225 920h0M1225 966h0M1225 839h0M1225 839h0M1225 843h0M1226 930h0M1226 913h0M1226 789h0M1226 922h0M1226 857h0M1226 952h0M1226 875h0M1226 884h0M1226 843h0M1227 827h0M1227 876h0M1227 881h0M1227 852h0M1227 841h0M1227 798h0M1227 802h0M1228 790h0M1228 857h0M1228 936h0M1228 781h0M1228 839h0M1228 981h0M1228 849h0M1229 962h0M1229 739h0M1229 791h0M1229 905h0M1229 909h0M1229 812h0M1230 875h0M1230 908h0M1230 889h0M1230 900h0M1230 897h0M1230 865h0M1230 921h0M1230 816h0M1231 781h0M1231 762h0M1231 864h0M1231 886h0M1231 813h0M1231 838h0M1231 872h0M1231 878h0M1231 814h0M1232 772h0M1232 953h0M1232 887h0M1232 768h0M1232 858h0M1232 821h0M1233 767h0M1233 822h0M1233 874h0M1233 774h0M1233 1005h0M1233 894h0M1233 823h0M1233 868h0M1233 934h0M1233 881h0M1234 811h0M1234 762h0M1234 948h0M1234 916h0M1234 880h0M1234 826h0M1235 780h0M1235 935h0M1235 824h0M1235 745h0M1235 830h0M1235 807h0M1235 838h0M1235 845h0M1235 951h0M1236 794h0M1236 822h0M1236 869h0M1236 895h0M1236 880h0M1236 897h0M1236 780h0M1236 798h0M1236 793h0M1237 948h0M1237 844h0M1237 934h0M1237 855h0M1237 851h0M1237 914h0M1237 944h0M1237 963h0M1237 840h0M1237 798h0M1237 819h0M1237 883h0M1237 863h0M1238 825h0M1238 887h0M1238 891h0M1238 956h0M1238 850h0M1238 954h0M1238 912h0M1239 834h0M1239 885h0M1239 1031h0M1239 868h0M1240 892h0M1240 928h0M1240 867h0M1240 954h0M1240 967h0M1240 881h0M1240 866h0M1240 860h0M1240 939h0M1240 774h0M1241 818h0M1241 881h0M1241 948h0M1241 818h0M1241 893h0M1241 898h0M1241 895h0M1241 913h0M1242 757h0M1242 816h0M1242 873h0M1242 898h0M1242 917h0M1242 958h0M1242 828h0M1242 847h0M1242 920h0M1242 945h0M1243 850h0M1243 824h0M1243 871h0M1243 826h0M1243 903h0M1243 949h0M1243 987h0M1243 901h0M1244 890h0M1244 783h0M1244 900h0M1244 932h0M1244 833h0M1244 893h0M1244 811h0M1244 916h0M1244 905h0M1244 837h0M1244 919h0M1244 856h0M1244 824h0M1244 858h0M1245 915h0M1245 950h0M1245 980h0M1245 978h0M1246 900h0M1246 956h0M1246 790h0M1246 873h0M1246 898h0M1247 834h0M1247 871h0M1247 875h0M1247 865h0M1248 836h0M1248 895h0M1248 943h0M1248 816h0M1248 782h0M1248 964h0M1248 837h0M1248 946h0M1248 835h0M1248 857h0M1248 931h0M1249 985h0M1249 915h0M1249 871h0M1249 825h0M1249 819h0M1249 861h0M1250 846h0M1250 814h0M1250 812h0M1250 881h0M1250 947h0M1251 1005h0M1251 856h0M1251 843h0M1251 959h0M1252 834h0M1252 887h0M1252 858h0M1253 828h0M1253 1039h0M1253 940h0M1253 880h0M1253 815h0M1253 908h0M1253 804h0M1253 879h0M1254 937h0M1254 1032h0M1254 931h0M1254 824h0M1254 829h0M1254 856h0M1254 870h0M1254 857h0M1254 835h0M1254 873h0M1254 870h0M1254 837h0M1254 916h0M1255 802h0M1255 813h0M1255 1011h0M1255 943h0M1255 902h0M1255 823h0M1255 857h0M1255 942h0M1255 934h0M1256 832h0M1256 814h0M1256 894h0M1256 792h0M1256 933h0M1256 797h0M1256 996h0M1256 812h0M1257 969h0M1257 793h0M1257 815h0M1257 885h0M1257 869h0M1258 948h0M1258 851h0M1258 949h0M1258 825h0M1258 949h0M1258 1016h0M1258 889h0M1258 939h0M1258 934h0M1258 903h0M1258 920h0M1258 799h0M1258 844h0M1259 775h0M1259 865h0M1259 959h0M1259 946h0M1259 814h0M1260 845h0M1260 880h0M1260 1029h0M1260 894h0M1261 911h0M1261 862h0M1261 940h0M1261 915h0M1261 923h0M1261 898h0M1261 943h0M1261 978h0M1262 917h0M1262 836h0M1262 819h0M1262 808h0M1262 809h0M1262 881h0M1262 789h0M1263 1031h0M1263 934h0M1263 989h0M1263 840h0M1263 907h0M1263 785h0M1264 873h0M1264 908h0M1264 863h0M1264 812h0M1264 880h0M1264 794h0M1265 803h0M1265 840h0M1265 779h0M1265 772h0M1265 816h0M1265 942h0M1266 970h0M1266 901h0M1266 789h0M1266 897h0M1266 869h0M1267 851h0M1267 963h0M1267 948h0M1267 841h0M1267 859h0M1267 816h0M1267 836h0M1267 909h0M1267 829h0M1267 818h0M1267 877h0M1267 909h0M1268 801h0M1268 943h0M1268 891h0M1268 862h0M1268 1023h0M1268 854h0M1268 843h0M1268 847h0M1268 853h0M1268 779h0M1269 910h0M1269 789h0M1269 787h0M1269 940h0M1269 898h0M1269 989h0M1269 888h0M1269 940h0M1269 946h0M1269 807h0M1269 958h0M1269 923h0M1270 829h0M1270 940h0M1270 864h0M1270 998h0M1271 869h0M1271 919h0M1271 745h0M1271 945h0M1271 891h0M1271 959h0M1271 857h0M1271 787h0M1272 1016h0M1272 964h0M1272 980h0M1272 916h0M1272 961h0M1272 932h0M1272 767h0M1272 902h0M1272 890h0M1272 929h0M1273 899h0M1273 782h0M1273 877h0M1273 791h0M1273 967h0M1273 873h0M1273 930h0M1273 907h0M1273 900h0M1274 847h0M1274 951h0M1274 783h0M1274 931h0M1274 914h0M1274 824h0M1275 996h0M1275 864h0M1275 865h0M1275 957h0M1275 962h0M1275 892h0M1275 834h0M1275 832h0M1276 837h0M1276 798h0M1276 935h0M1276 952h0M1276 857h0M1276 931h0M1276 869h0M1276 816h0M1276 926h0M1276 905h0M1277 952h0M1277 785h0M1277 941h0M1277 940h0M1277 751h0M1277 770h0M1277 766h0M1277 811h0M1278 884h0M1278 821h0M1278 881h0M1278 850h0M1278 939h0M1279 918h0M1279 894h0M1279 830h0M1279 916h0M1279 776h0M1279 859h0M1279 862h0M1279 803h0M1279 827h0M1279 882h0M1279 972h0M1280 914h0M1280 922h0M1280 1005h0M1280 915h0M1280 854h0M1280 754h0M1280 900h0M1280 891h0M1280 966h0M1281 879h0M1281 833h0M1281 853h0M1281 833h0M1281 972h0M1281 865h0M1281 955h0M1281 829h0M1281 943h0M1281 808h0M1282 932h0M1282 818h0M1282 833h0M1282 867h0M1282 809h0M1282 743h0M1282 839h0M1282 895h0M1282 836h0M1282 884h0M1283 954h0M1283 824h0M1283 947h0M1283 814h0M1283 901h0M1283 1004h0M1283 855h0M1283 794h0M1283 841h0M1284 832h0M1284 927h0M1284 947h0M1284 918h0M1284 944h0M1284 855h0M1284 980h0M1284 772h0M1284 947h0M1285 856h0M1285 902h0M1285 798h0M1285 896h0M1285 827h0M1285 795h0M1285 997h0M1286 882h0M1286 834h0M1286 885h0M1286 874h0M1286 919h0M1286 879h0M1286 839h0M1286 900h0M1287 814h0M1287 803h0M1287 844h0M1287 772h0M1287 758h0M1287 847h0M1287 921h0M1288 765h0M1288 864h0M1288 901h0M1288 821h0M1288 839h0M1288 778h0M1288 780h0M1288 762h0M1288 841h0M1288 772h0M1288 925h0M1288 940h0M1288 859h0M1288 785h0M1288 953h0M1289 947h0M1289 896h0M1289 907h0M1289 938h0M1289 949h0M1289 826h0M1289 948h0M1290 878h0M1290 936h0M1290 807h0M1290 943h0M1290 821h0M1290 841h0M1290 816h0M1290 765h0M1290 797h0M1290 769h0M1290 874h0M1291 1005h0M1291 883h0M1291 950h0M1291 891h0M1291 839h0M1291 916h0M1291 834h0M1291 856h0M1292 875h0M1292 807h0M1292 950h0M1292 932h0M1292 831h0M1292 801h0M1293 772h0M1293 948h0M1293 958h0M1293 862h0M1294 883h0M1294 914h0M1294 1044h0M1294 801h0M1294 852h0M1294 897h0M1294 940h0M1295 807h0M1295 1003h0M1295 932h0M1295 819h0M1295 878h0M1295 1014h0M1295 976h0M1295 821h0M1296 840h0M1296 919h0M1296 891h0M1297 817h0M1297 847h0M1297 731h0M1297 827h0M1297 824h0M1297 900h0M1297 744h0M1297 986h0M1297 824h0M1297 980h0M1298 791h0M1298 870h0M1298 794h0M1298 873h0M1298 809h0M1299 832h0M1299 840h0M1299 869h0M1299 686h0M1299 891h0M1299 801h0M1299 926h0M1300 878h0M1300 973h0M1300 835h0M1300 761h0M1300 883h0M1300 825h0M1300 989h0M1300 920h0M1301 791h0M1301 977h0M1301 945h0M1301 795h0M1301 899h0M1301 882h0M1301 794h0M1301 899h0M1302 836h0M1302 883h0M1302 942h0M1302 809h0M1302 855h0M1302 829h0M1303 825h0M1303 767h0M1304 992h0M1304 824h0M1304 875h0M1304 765h0M1304 1054h0M1304 952h0M1305 972h0M1305 815h0M1305 889h0M1305 906h0M1305 930h0M1305 856h0M1305 931h0M1306 928h0M1306 964h0M1306 780h0M1306 921h0M1306 772h0M1306 959h0M1306 852h0M1306 745h0M1306 792h0M1306 844h0M1307 846h0M1307 872h0M1307 862h0M1307 865h0M1307 901h0M1307 871h0M1307 857h0M1307 781h0M1307 810h0M1307 883h0M1307 919h0M1308 925h0M1308 957h0M1308 794h0M1308 687h0M1308 819h0M1309 938h0M1309 900h0M1309 795h0M1309 763h0M1309 844h0M1309 834h0M1309 961h0M1309 821h0M1309 864h0M1310 856h0M1310 880h0M1310 821h0M1310 918h0M1311 836h0M1311 861h0M1311 867h0M1311 932h0M1311 927h0M1311 938h0M1311 928h0M1311 881h0M1312 976h0M1312 853h0M1312 986h0M1312 760h0M1312 902h0M1312 991h0M1313 844h0M1313 865h0M1313 934h0M1313 826h0M1313 816h0M1313 933h0M1313 980h0M1313 803h0M1314 939h0M1314 794h0M1314 955h0M1315 872h0M1315 951h0M1315 819h0M1315 902h0M1315 804h0M1315 941h0M1316 801h0M1316 966h0M1316 938h0M1316 958h0M1317 826h0M1317 913h0M1317 900h0M1317 785h0M1317 829h0M1317 917h0M1317 867h0M1317 816h0M1317 743h0M1317 832h0M1317 946h0M1318 799h0M1318 820h0M1318 808h0M1318 902h0M1319 1040h0M1319 761h0M1319 965h0M1319 852h0M1319 861h0M1319 919h0M1319 816h0M1319 871h0M1319 869h0M1320 777h0M1320 821h0M1320 861h0M1320 905h0M1320 931h0M1320 758h0M1321 967h0M1321 919h0M1321 765h0M1321 842h0M1321 839h0M1321 874h0M1321 997h0M1322 952h0M1322 832h0M1322 873h0M1322 834h0M1322 930h0M1323 865h0M1323 942h0M1323 834h0M1323 908h0M1323 867h0M1323 841h0M1323 785h0M1324 858h0M1324 923h0M1324 911h0M1324 939h0M1324 841h0M1324 1039h0M1324 939h0M1325 800h0M1325 799h0M1325 839h0M1325 912h0M1325 968h0M1325 793h0M1325 837h0M1326 877h0M1326 935h0M1326 910h0M1326 836h0M1326 853h0M1326 921h0M1326 765h0M1326 903h0M1326 1009h0M1326 926h0M1327 907h0M1327 910h0M1327 795h0M1327 758h0M1327 971h0M1327 863h0M1327 892h0M1327 928h0M1327 806h0M1328 915h0M1328 829h0M1328 884h0M1328 967h0M1328 870h0M1329 921h0M1329 903h0M1329 912h0M1329 804h0M1329 892h0M1329 1020h0M1330 834h0M1330 951h0M1330 811h0M1330 862h0M1330 882h0M1331 842h0M1331 884h0M1331 929h0M1331 919h0M1331 789h0M1331 961h0M1331 797h0M1331 836h0M1331 809h0M1331 863h0M1331 888h0M1331 1013h0M1332 793h0M1332 780h0M1332 891h0M1332 806h0M1332 811h0M1332 848h0M1332 797h0M1332 856h0M1332 933h0M1332 919h0M1333 821h0M1333 893h0M1333 946h0M1333 996h0M1333 802h0M1333 957h0M1333 800h0M1333 741h0M1334 850h0M1334 826h0M1334 803h0M1334 924h0M1335 909h0M1335 895h0M1335 802h0M1335 762h0M1335 838h0M1335 858h0M1335 868h0M1335 941h0M1335 948h0M1335 798h0M1335 836h0M1335 880h0M1336 779h0M1336 932h0M1336 811h0M1336 890h0M1336 911h0M1336 941h0M1336 745h0M1336 972h0M1336 918h0M1336 789h0M1336 806h0M1336 900h0M1337 897h0M1337 896h0M1337 952h0M1337 804h0M1337 928h0M1337 894h0M1337 959h0M1337 910h0M1337 1009h0M1337 916h0M1337 969h0M1338 898h0M1338 864h0M1338 940h0M1338 954h0M1338 834h0M1338 977h0M1338 865h0M1338 910h0M1338 929h0M1338 790h0M1339 793h0M1339 976h0M1339 871h0M1339 895h0M1339 889h0M1339 902h0M1339 878h0M1339 861h0M1340 932h0M1340 843h0M1340 828h0M1340 794h0M1340 825h0M1340 944h0M1340 909h0M1340 810h0M1340 891h0M1340 932h0M1340 876h0M1340 759h0M1341 950h0M1341 861h0M1341 855h0M1341 949h0M1341 878h0M1341 876h0M1341 942h0M1342 885h0M1342 750h0M1342 781h0M1342 807h0M1342 788h0M1343 912h0M1343 831h0M1343 882h0M1343 865h0M1343 915h0M1343 760h0M1343 1054h0M1343 849h0M1344 812h0M1344 799h0M1344 897h0M1345 937h0M1345 895h0M1346 995h0M1346 861h0M1346 840h0M1346 817h0M1346 864h0M1346 892h0M1346 932h0M1346 768h0M1346 829h0M1347 894h0M1347 924h0M1347 804h0M1347 813h0M1347 972h0M1348 808h0M1348 911h0M1348 814h0M1348 841h0M1348 850h0M1348 917h0M1348 942h0M1349 827h0M1349 957h0M1349 856h0M1349 936h0M1349 885h0M1350 945h0M1350 831h0M1350 886h0M1350 942h0M1350 850h0M1350 849h0M1350 877h0M1351 809h0M1351 849h0M1351 920h0M1351 915h0M1351 958h0M1351 780h0M1351 951h0M1351 894h0M1351 795h0M1352 871h0M1352 935h0M1352 963h0M1352 851h0M1352 791h0M1352 819h0M1352 809h0M1352 741h0M1352 989h0M1353 914h0M1353 939h0M1353 846h0M1353 799h0M1353 785h0M1353 934h0M1353 939h0M1354 925h0M1354 758h0M1354 821h0M1354 874h0M1354 788h0M1354 802h0M1355 932h0M1355 838h0M1355 896h0M1355 955h0M1355 732h0M1355 886h0M1355 838h0M1356 1056h0M1356 929h0M1356 832h0M1356 896h0M1356 819h0M1356 885h0M1357 920h0M1357 841h0M1357 809h0M1357 821h0M1358 883h0M1358 862h0M1358 943h0M1358 906h0M1358 918h0M1358 922h0M1358 1016h0M1359 773h0M1359 799h0M1359 850h0M1359 850h0M1359 921h0M1359 836h0M1359 868h0M1359 823h0M1359 974h0M1360 857h0M1360 918h0M1360 754h0M1360 975h0M1360 805h0M1360 792h0M1361 834h0M1361 816h0M1361 930h0M1361 998h0M1361 931h0M1361 903h0M1361 912h0M1361 825h0M1362 945h0M1362 1000h0M1362 873h0M1362 802h0M1362 893h0M1362 841h0M1362 877h0M1362 751h0M1362 1006h0M1363 924h0M1363 894h0M1363 883h0M1363 816h0M1363 860h0M1363 927h0M1364 920h0M1364 921h0M1364 764h0M1364 867h0M1364 777h0M1365 835h0M1365 911h0M1365 880h0M1365 790h0M1365 860h0M1365 915h0M1365 894h0M1365 863h0M1365 844h0M1366 973h0M1366 861h0M1366 784h0M1366 898h0M1367 755h0M1367 853h0M1367 911h0M1367 942h0M1367 892h0M1367 805h0M1367 847h0M1368 986h0M1368 892h0M1368 870h0M1368 977h0M1368 926h0M1368 834h0M1368 814h0M1369 850h0M1369 980h0M1369 866h0M1369 873h0M1370 849h0M1370 865h0M1370 874h0M1371 756h0M1371 887h0M1371 903h0M1371 878h0M1371 861h0M1371 769h0M1371 994h0M1371 917h0M1371 792h0M1371 931h0M1371 796h0M1372 778h0M1372 868h0M1372 993h0M1372 982h0M1372 802h0M1372 840h0M1372 894h0M1372 840h0M1372 884h0M1372 882h0M1372 906h0M1373 784h0M1373 955h0M1373 853h0M1373 901h0M1373 863h0M1373 847h0M1373 746h0M1374 823h0M1374 740h0M1374 808h0M1374 872h0M1374 828h0M1374 960h0M1375 949h0M1375 826h0M1375 953h0M1375 959h0M1375 823h0M1375 833h0M1375 794h0M1376 874h0M1376 870h0M1376 874h0M1376 900h0M1376 878h0M1376 829h0M1377 803h0M1377 986h0M1377 863h0M1377 927h0M1377 851h0M1377 871h0M1377 871h0M1377 796h0M1378 999h0M1378 910h0M1378 930h0M1378 824h0M1378 801h0M1378 783h0M1378 926h0M1378 875h0M1379 964h0M1379 790h0M1379 721h0M1379 788h0M1379 785h0M1379 875h0M1380 799h0M1380 875h0M1380 818h0M1380 934h0M1380 952h0M1380 765h0M1380 842h0M1380 868h0M1380 946h0M1380 769h0M1381 943h0M1381 913h0M1381 925h0M1381 990h0M1381 822h0M1381 824h0M1381 949h0M1381 847h0M1382 882h0M1382 943h0M1382 909h0M1382 825h0M1383 767h0M1383 864h0M1383 868h0M1383 875h0M1383 995h0M1383 863h0M1383 861h0M1383 961h0M1384 894h0M1384 936h0M1384 834h0M1384 864h0M1384 820h0M1384 980h0M1385 940h0M1385 923h0M1385 920h0M1385 759h0M1385 867h0M1385 804h0M1385 963h0M1385 972h0M1385 806h0M1386 896h0M1386 935h0M1386 810h0M1386 780h0M1386 850h0M1386 968h0M1386 1036h0M1386 952h0M1386 887h0M1386 952h0M1386 898h0M1387 953h0M1387 850h0M1387 868h0M1387 958h0M1387 810h0M1387 812h0M1388 927h0M1388 797h0M1388 901h0M1388 835h0M1389 783h0M1389 793h0M1389 918h0M1389 967h0M1389 924h0M1389 931h0M1389 860h0M1389 968h0M1389 852h0M1389 753h0M1390 833h0M1390 928h0M1390 841h0M1390 887h0M1390 865h0M1390 813h0M1390 829h0M1390 985h0M1390 794h0M1390 906h0M1390 739h0M1390 917h0M1390 910h0M1391 858h0M1391 806h0M1391 987h0M1391 851h0M1391 908h0M1391 929h0M1392 918h0M1392 938h0M1392 857h0M1392 869h0M1392 889h0M1392 920h0M1392 810h0M1392 784h0M1392 932h0M1393 897h0M1393 842h0M1393 951h0M1393 748h0M1393 772h0M1393 1054h0M1393 783h0M1393 956h0M1394 912h0M1394 902h0M1394 875h0M1394 878h0M1394 773h0M1394 863h0M1394 968h0M1394 989h0M1394 928h0M1394 764h0M1394 911h0M1394 824h0M1395 939h0M1395 865h0M1395 746h0M1395 835h0M1395 889h0M1395 785h0M1395 933h0M1395 867h0M1395 785h0M1395 760h0M1396 932h0M1396 791h0M1396 847h0M1396 888h0M1396 891h0M1396 936h0M1396 937h0M1396 746h0M1396 813h0M1396 891h0M1396 839h0M1396 891h0M1397 832h0M1397 888h0M1397 896h0M1397 813h0M1397 824h0M1397 829h0M1398 837h0M1398 890h0M1398 853h0M1398 827h0M1398 945h0M1398 776h0M1399 792h0M1399 909h0M1399 960h0M1399 930h0M1399 883h0M1399 902h0M1399 947h0M1400 861h0M1400 925h0M1400 848h0M1400 972h0M1400 845h0M1400 852h0M1401 905h0M1401 965h0M1401 953h0M1401 776h0M1401 807h0M1401 863h0M1402 834h0M1402 987h0M1402 856h0M1402 879h0M1402 871h0M1402 953h0M1402 913h0M1402 769h0M1402 833h0M1403 804h0M1403 893h0M1403 787h0M1404 960h0M1404 974h0M1404 935h0M1404 776h0M1404 961h0M1405 842h0M1405 811h0M1405 930h0M1405 976h0M1405 996h0M1405 839h0M1406 918h0M1406 945h0M1406 846h0M1406 796h0M1406 821h0M1406 911h0M1406 887h0M1406 902h0M1407 901h0M1407 870h0M1407 829h0M1407 870h0M1407 908h0M1407 759h0M1408 799h0M1408 804h0M1408 898h0M1408 822h0M1408 780h0M1408 805h0M1409 972h0M1409 840h0M1409 956h0M1409 855h0M1409 763h0M1410 981h0M1410 785h0M1410 875h0M1410 834h0M1410 756h0M1410 865h0M1410 804h0M1410 859h0M1410 801h0M1410 866h0M1411 820h0M1411 830h0M1411 862h0M1411 865h0M1411 808h0M1411 872h0M1411 916h0M1411 844h0M1411 814h0M1412 906h0M1412 875h0M1412 936h0M1412 982h0M1412 732h0M1413 845h0M1413 877h0M1413 850h0M1413 818h0M1413 808h0M1413 972h0M1413 861h0M1413 958h0M1413 886h0M1413 844h0M1413 814h0M1413 944h0M1414 891h0M1414 919h0M1414 857h0M1414 979h0M1414 945h0M1414 857h0M1414 774h0M1414 960h0M1414 960h0M1414 951h0M1414 868h0M1414 814h0M1414 792h0M1414 789h0M1415 955h0M1415 817h0M1415 841h0M1415 892h0M1415 872h0M1415 795h0M1415 809h0M1415 847h0M1415 917h0M1415 946h0M1416 808h0M1416 912h0M1416 811h0M1416 946h0M1417 774h0M1417 947h0M1417 933h0M1417 748h0M1417 922h0M1417 914h0M1417 975h0M1417 816h0M1418 786h0M1418 929h0M1418 765h0M1418 805h0M1418 969h0M1418 845h0M1418 965h0M1419 952h0M1420 856h0M1420 926h0M1420 808h0M1420 781h0M1421 798h0M1421 920h0M1421 828h0M1421 971h0M1421 831h0M1421 898h0M1421 834h0M1421 807h0M1421 924h0M1421 760h0M1421 956h0M1422 899h0M1422 835h0M1422 872h0M1422 832h0M1422 816h0M1422 979h0M1422 859h0M1423 785h0M1423 868h0M1423 968h0M1423 779h0M1423 856h0M1423 1037h0M1423 920h0M1423 913h0M1423 859h0M1424 1010h0M1424 836h0M1424 916h0M1424 906h0M1424 890h0M1425 976h0M1425 791h0M1425 820h0M1425 846h0M1425 841h0M1425 828h0M1425 793h0M1425 807h0M1426 870h0M1426 757h0M1426 793h0M1426 965h0M1426 886h0M1427 725h0M1427 801h0M1427 833h0M1427 908h0M1427 925h0M1428 897h0M1428 798h0M1428 927h0M1428 766h0M1428 846h0M1429 772h0M1429 973h0M1429 802h0M1429 822h0M1429 952h0M1429 837h0M1429 893h0M1429 789h0M1429 955h0M1429 827h0M1430 879h0M1430 797h0M1430 826h0M1430 825h0M1430 933h0M1430 839h0M1430 825h0M1430 851h0M1430 947h0M1430 835h0M1431 776h0M1431 765h0M1431 905h0M1431 856h0M1431 858h0M1431 835h0M1431 956h0M1431 844h0M1431 913h0M1432 826h0M1432 892h0M1432 800h0M1432 904h0M1432 944h0M1432 1052h0M1433 940h0M1433 888h0M1433 897h0M1433 803h0M1433 839h0M1433 907h0M1433 883h0M1434 860h0M1434 802h0M1434 890h0M1434 855h0M1434 823h0M1434 749h0M1435 922h0M1435 973h0M1435 884h0M1435 920h0M1435 885h0M1436 865h0M1436 847h0M1436 975h0M1437 962h0M1437 780h0M1437 815h0M1437 816h0M1437 778h0M1437 901h0M1437 823h0M1437 913h0M1437 859h0M1437 954h0M1438 892h0M1438 888h0M1438 876h0M1438 764h0M1438 995h0M1439 917h0M1439 896h0M1439 885h0M1439 877h0M1439 824h0M1439 866h0M1439 846h0M1439 949h0M1439 961h0M1439 804h0M1439 856h0M1439 869h0M1440 960h0M1440 995h0M1440 959h0M1440 862h0M1440 957h0M1441 851h0M1441 875h0M1441 768h0M1441 797h0M1441 890h0M1441 978h0M1441 825h0M1441 931h0M1441 747h0M1441 932h0M1442 744h0M1442 926h0M1442 928h0M1442 919h0M1442 859h0M1442 973h0M1442 881h0M1442 982h0M1443 910h0M1443 882h0M1443 1019h0M1443 730h0M1443 790h0M1443 817h0M1444 796h0M1444 959h0M1444 798h0M1444 803h0M1444 924h0M1444 924h0M1444 749h0M1444 782h0M1444 893h0M1444 893h0M1444 846h0M1445 750h0M1445 872h0M1445 1010h0M1445 967h0M1445 820h0M1445 788h0M1445 954h0M1445 884h0M1445 973h0M1446 948h0M1446 976h0M1446 772h0M1446 880h0M1446 774h0M1446 861h0M1446 922h0M1446 792h0M1446 898h0M1446 877h0M1447 817h0M1447 1058h0M1447 834h0M1447 908h0M1447 844h0M1447 931h0M1447 794h0M1447 999h0M1448 841h0M1448 949h0M1449 806h0M1449 895h0M1449 824h0M1449 851h0M1449 899h0M1450 769h0M1450 955h0M1451 829h0M1451 764h0M1451 886h0M1451 835h0M1451 1058h0M1451 979h0M1451 749h0M1451 842h0M1451 768h0M1452 1051h0M1452 930h0M1452 870h0M1452 956h0M1452 891h0M1452 847h0M1453 806h0M1453 874h0M1453 991h0M1453 898h0M1454 842h0M1454 803h0M1454 882h0M1454 784h0M1454 850h0M1454 1030h0M1454 975h0M1454 905h0M1454 920h0M1454 935h0M1455 1047h0M1455 831h0M1455 819h0M1455 774h0M1455 840h0M1455 861h0M1455 828h0M1455 911h0M1455 920h0M1455 924h0M1455 780h0M1456 996h0M1456 820h0M1456 853h0M1456 825h0M1456 1029h0M1456 835h0M1457 948h0M1457 795h0M1457 974h0M1457 778h0M1457 911h0M1457 898h0M1457 983h0M1457 825h0M1457 825h0M1457 871h0M1457 829h0M1458 858h0M1458 835h0M1458 945h0M1458 889h0M1458 852h0M1458 789h0M1458 884h0M1458 774h0M1458 817h0M1459 794h0M1459 950h0M1459 804h0M1459 931h0M1459 1056h0M1459 964h0M1460 927h0M1460 868h0M1460 878h0M1460 923h0M1460 788h0M1460 779h0M1460 905h0M1461 883h0M1461 953h0M1461 849h0M1461 948h0M1461 942h0M1461 853h0M1462 900h0M1462 849h0M1462 856h0M1462 765h0M1462 861h0M1462 774h0M1463 940h0M1463 871h0M1463 839h0M1463 956h0M1463 949h0M1463 879h0M1463 804h0M1463 986h0M1463 782h0M1464 887h0M1464 804h0M1464 860h0M1464 852h0M1464 954h0M1464 885h0M1464 981h0M1464 876h0M1464 783h0M1465 968h0M1465 779h0M1465 883h0M1465 866h0M1465 985h0M1466 812h0M1466 910h0M1466 784h0M1466 804h0M1466 892h0M1466 799h0M1466 974h0M1466 843h0M1467 835h0M1467 1016h0M1467 743h0M1467 955h0M1467 859h0M1467 808h0M1468 884h0M1468 916h0M1468 921h0M1468 837h0M1468 887h0M1468 934h0M1468 967h0M1469 868h0M1469 828h0M1469 911h0M1469 970h0M1469 887h0M1469 871h0M1470 907h0M1470 993h0M1470 993h0M1470 805h0M1470 827h0M1471 986h0M1471 849h0M1471 808h0M1471 890h0M1471 851h0M1471 910h0M1471 853h0M1471 791h0M1471 944h0M1471 888h0M1471 807h0M1471 962h0M1471 885h0M1472 918h0M1472 889h0M1472 865h0M1472 996h0M1472 865h0M1472 988h0M1472 1000h0M1472 725h0M1472 806h0M1473 963h0M1473 901h0M1473 699h0M1473 799h0M1473 803h0M1473 871h0M1473 920h0M1474 866h0M1474 966h0M1474 778h0M1474 952h0M1474 900h0M1474 864h0M1475 804h0M1475 904h0M1475 962h0M1475 907h0M1475 956h0M1475 734h0M1476 931h0M1477 777h0M1477 851h0M1477 779h0M1477 915h0M1478 946h0M1478 901h0M1478 953h0M1478 955h0M1478 917h0M1478 871h0M1478 837h0M1478 836h0M1478 882h0M1479 968h0M1479 930h0M1479 820h0M1479 905h0M1479 896h0M1479 938h0M1479 859h0M1479 853h0M1479 763h0M1480 935h0M1480 898h0M1480 817h0M1480 805h0M1480 872h0M1481 770h0M1481 951h0M1481 836h0M1481 874h0M1481 906h0M1481 858h0M1481 851h0M1482 914h0M1482 930h0M1482 954h0M1482 970h0M1482 902h0M1482 936h0M1482 802h0M1482 776h0M1483 1003h0M1483 886h0M1483 787h0M1483 806h0M1483 900h0M1484 961h0M1484 861h0M1484 881h0M1484 916h0M1484 950h0M1484 805h0M1484 908h0M1484 982h0M1484 830h0M1485 793h0M1485 924h0M1485 853h0M1485 833h0M1485 990h0M1485 744h0M1485 803h0M1485 864h0M1486 763h0M1486 935h0M1486 871h0M1486 869h0M1486 850h0M1486 855h0M1487 872h0M1487 924h0M1487 940h0M1487 877h0M1487 766h0M1487 811h0M1487 1004h0M1487 881h0M1487 941h0M1487 782h0M1487 861h0M1488 944h0M1488 869h0M1488 866h0M1488 886h0M1488 803h0M1488 838h0M1488 809h0M1489 949h0M1489 913h0M1489 860h0M1489 716h0M1489 869h0M1489 917h0M1489 921h0M1489 952h0M1489 898h0M1489 781h0M1489 923h0M1490 825h0M1490 851h0M1490 883h0M1490 950h0M1490 925h0M1490 960h0M1490 905h0M1490 918h0M1490 848h0M1491 878h0M1491 975h0M1491 778h0M1491 821h0M1491 947h0M1491 923h0M1491 782h0M1492 918h0M1492 809h0M1492 807h0M1492 893h0M1492 870h0M1492 809h0M1492 776h0M1492 950h0M1492 754h0M1492 883h0M1493 794h0M1493 1024h0M1493 918h0M1493 797h0M1493 840h0M1494 931h0M1494 809h0M1494 809h0M1494 825h0M1494 786h0M1494 835h0M1494 1012h0M1494 912h0M1494 1019h0M1494 962h0M1495 910h0M1495 907h0M1495 773h0M1495 907h0M1495 942h0M1495 755h0M1495 931h0M1496 882h0M1496 813h0M1496 776h0M1497 904h0M1497 770h0M1497 931h0M1497 903h0M1497 806h0M1497 806h0M1497 840h0M1497 827h0M1497 765h0M1497 917h0M1497 914h0M1498 827h0M1498 768h0M1498 929h0M1498 1002h0M1498 849h0M1498 890h0M1498 857h0M1498 790h0M1498 874h0M1498 864h0M1498 843h0M1498 872h0M1498 770h0M1498 767h0M1499 943h0M1499 873h0M1499 792h0M1499 802h0M1499 854h0M1499 869h0M1499 850h0M1500 813h0M1500 867h0M1500 812h0M1500 798h0M1500 779h0M1500 798h0M1500 942h0M1501 899h0M1501 957h0M1501 826h0M1501 847h0M1501 928h0M1501 981h0M1501 771h0M1501 925h0M1501 748h0M1502 870h0M1502 780h0M1502 919h0M1502 749h0M1502 848h0M1502 960h0M1502 777h0M1502 895h0M1502 872h0M1503 901h0M1503 965h0M1503 897h0M1503 841h0M1503 846h0M1503 886h0M1504 807h0M1504 784h0M1504 783h0M1504 826h0M1504 839h0M1505 880h0M1505 983h0M1505 700h0M1505 921h0M1505 866h0M1505 812h0M1506 888h0M1506 949h0M1506 928h0M1506 858h0M1506 948h0M1506 1012h0M1506 866h0M1506 803h0M1506 872h0M1506 914h0M1506 946h0M1506 799h0M1506 921h0M1507 952h0M1507 942h0M1507 815h0M1507 828h0M1507 843h0M1507 863h0M1507 802h0M1507 862h0M1507 853h0M1507 914h0M1507 924h0M1508 847h0M1508 834h0M1508 858h0M1508 893h0M1508 903h0M1508 798h0M1508 818h0M1508 1000h0M1508 932h0M1509 785h0M1509 874h0M1509 779h0M1509 816h0M1509 957h0M1509 963h0M1510 809h0M1510 900h0M1510 883h0M1510 906h0M1510 806h0M1511 886h0M1511 740h0M1511 841h0M1511 826h0M1511 888h0M1512 878h0M1512 787h0M1512 887h0M1512 783h0M1512 924h0M1512 922h0M1512 797h0M1512 938h0M1512 953h0M1513 848h0M1513 883h0M1513 818h0M1513 744h0M1514 929h0M1514 810h0M1514 1003h0M1514 880h0M1514 946h0M1514 943h0M1514 803h0M1514 895h0M1515 900h0M1515 766h0M1515 760h0M1515 908h0M1515 815h0M1515 792h0M1516 850h0M1516 921h0M1516 842h0M1516 880h0M1516 835h0M1516 915h0M1516 973h0M1516 938h0M1516 918h0M1517 804h0M1517 872h0M1517 921h0M1517 834h0M1518 967h0M1518 810h0M1518 853h0M1518 807h0M1518 819h0M1518 835h0M1518 876h0M1518 838h0M1518 913h0M1519 798h0M1519 842h0M1519 972h0M1519 959h0M1520 802h0M1520 898h0M1520 877h0M1520 894h0M1520 773h0M1520 986h0M1520 759h0M1520 970h0M1520 859h0M1520 841h0M1520 876h0M1520 958h0M1521 838h0M1521 847h0M1521 807h0M1521 844h0M1521 734h0M1521 828h0M1521 911h0M1521 838h0M1521 904h0M1521 913h0M1521 1003h0M1521 895h0M1521 884h0M1522 893h0M1522 906h0M1522 988h0M1522 961h0M1522 875h0M1522 891h0M1522 961h0M1522 835h0M1522 838h0M1523 851h0M1523 825h0M1523 962h0M1523 900h0M1523 955h0M1523 789h0M1523 908h0M1523 1004h0M1523 856h0M1524 855h0M1524 794h0M1524 866h0M1524 934h0M1524 909h0M1524 902h0M1524 867h0M1525 805h0M1525 850h0M1525 767h0M1525 945h0M1525 874h0M1526 740h0M1526 963h0M1526 849h0M1526 926h0M1526 934h0M1526 857h0M1526 889h0M1526 882h0M1526 906h0M1527 882h0M1527 770h0M1527 913h0M1528 922h0M1528 944h0M1528 837h0M1528 866h0M1528 903h0M1528 985h0M1528 859h0M1529 816h0M1529 874h0M1529 873h0M1529 909h0M1529 831h0M1529 765h0M1529 835h0M1529 843h0M1530 816h0M1530 765h0M1530 928h0M1530 946h0M1530 924h0M1531 819h0M1531 849h0M1531 834h0M1531 742h0M1531 874h0M1531 935h0M1531 811h0M1531 878h0M1532 870h0M1532 770h0M1532 874h0M1532 749h0M1532 790h0M1532 776h0M1532 813h0M1533 1029h0M1533 926h0M1533 920h0M1533 899h0M1533 848h0M1533 823h0M1533 931h0M1534 957h0M1534 856h0M1534 785h0M1534 891h0M1534 787h0M1534 855h0M1534 829h0M1534 973h0M1534 791h0M1534 875h0M1535 731h0M1535 879h0M1535 883h0M1535 929h0M1535 828h0M1535 892h0M1535 861h0M1536 816h0M1536 822h0M1536 836h0M1536 895h0M1537 863h0M1537 916h0M1537 891h0M1537 867h0M1537 812h0M1537 925h0M1537 944h0M1537 1011h0M1537 960h0M1538 750h0M1538 879h0M1538 859h0M1538 934h0M1538 964h0M1538 791h0M1539 946h0M1539 848h0M1539 851h0M1539 836h0M1539 973h0M1539 820h0M1539 805h0M1540 818h0M1540 1031h0M1540 921h0M1540 805h0M1540 844h0M1540 877h0M1540 776h0M1540 928h0M1540 865h0M1541 929h0M1541 900h0M1541 805h0M1541 919h0M1541 814h0M1541 808h0M1541 796h0M1541 912h0M1541 904h0M1542 907h0M1542 818h0M1542 807h0M1542 895h0M1542 908h0M1542 796h0M1542 960h0M1543 919h0M1543 781h0M1543 807h0M1543 978h0M1544 854h0M1544 887h0M1544 971h0M1544 816h0M1544 799h0M1544 980h0M1544 782h0M1544 952h0M1544 831h0M1544 803h0M1545 845h0M1545 845h0M1545 885h0M1545 966h0M1545 872h0M1545 790h0M1545 929h0M1545 815h0M1546 846h0M1546 916h0M1546 881h0M1546 900h0M1546 887h0M1546 932h0M1546 778h0M1546 767h0M1546 974h0M1546 869h0M1546 909h0M1546 904h0M1547 916h0M1547 923h0M1547 828h0M1547 842h0M1547 927h0M1547 860h0M1548 785h0M1548 771h0M1548 829h0M1548 922h0M1548 913h0M1548 894h0M1548 896h0M1548 839h0M1548 834h0M1548 907h0M1548 870h0M1548 812h0M1549 878h0M1549 834h0M1549 935h0M1549 841h0M1549 922h0M1549 786h0M1549 854h0M1549 850h0M1549 862h0M1550 930h0M1550 869h0M1550 854h0M1550 797h0M1550 875h0M1550 849h0M1551 844h0M1551 953h0M1551 899h0M1551 866h0M1551 940h0M1551 924h0M1552 1033h0M1552 974h0M1552 857h0M1552 789h0M1552 888h0M1553 900h0M1553 794h0M1553 782h0M1553 771h0M1553 818h0M1553 920h0M1553 973h0M1553 882h0M1554 767h0M1554 920h0M1554 889h0M1554 819h0M1555 898h0M1555 1007h0M1555 874h0M1555 816h0M1555 805h0M1556 882h0M1556 933h0M1556 861h0M1556 939h0M1556 846h0M1556 899h0M1557 799h0M1557 886h0M1557 862h0M1557 829h0M1557 848h0M1557 817h0M1557 905h0M1557 821h0M1557 780h0M1558 815h0M1558 879h0M1558 878h0M1558 849h0M1558 830h0M1558 783h0M1558 850h0M1558 797h0M1558 893h0M1558 881h0M1558 844h0M1558 858h0M1558 865h0M1558 886h0M1559 896h0M1559 867h0M1559 834h0M1559 911h0M1559 902h0M1559 829h0M1560 849h0M1560 856h0M1560 778h0M1560 936h0M1561 831h0M1561 907h0M1561 946h0M1561 924h0M1561 875h0M1561 881h0M1561 863h0M1561 885h0M1561 864h0M1562 902h0M1562 919h0M1563 797h0M1563 888h0M1563 851h0M1563 884h0M1563 786h0M1563 905h0M1563 842h0M1563 824h0M1564 847h0M1564 927h0M1564 875h0M1564 945h0M1564 799h0M1564 821h0M1564 955h0M1564 847h0M1564 922h0M1565 794h0M1565 816h0M1565 842h0M1565 864h0M1565 893h0M1565 842h0M1565 938h0M1565 939h0M1565 906h0M1565 940h0M1565 814h0M1566 936h0M1566 951h0M1566 892h0M1566 871h0M1566 859h0M1566 768h0M1567 947h0M1567 834h0M1567 841h0M1567 898h0M1567 808h0M1567 936h0M1567 957h0M1567 901h0M1567 953h0M1567 831h0M1567 836h0M1567 776h0M1567 863h0M1568 901h0M1568 812h0M1568 805h0M1568 927h0M1568 824h0M1568 907h0M1568 867h0M1568 922h0M1568 929h0M1569 876h0M1569 944h0M1569 748h0M1569 924h0M1569 818h0M1570 902h0M1570 811h0M1570 813h0M1570 922h0M1571 946h0M1571 891h0M1571 936h0M1571 848h0M1571 940h0M1571 863h0M1571 910h0M1572 873h0M1572 847h0M1572 777h0M1572 855h0M1572 861h0M1572 946h0M1572 877h0M1572 959h0M1572 789h0M1572 848h0M1573 922h0M1573 901h0M1573 870h0M1573 795h0M1573 837h0M1573 892h0M1573 870h0M1573 830h0M1573 860h0M1573 823h0M1573 813h0M1573 936h0M1574 886h0M1574 950h0M1574 870h0M1574 772h0M1574 871h0M1574 803h0M1574 927h0M1574 863h0M1574 938h0M1575 946h0M1575 853h0M1575 911h0M1575 897h0M1575 827h0M1575 913h0M1575 886h0M1575 863h0M1576 843h0M1576 838h0M1576 823h0M1576 861h0M1576 904h0M1576 870h0M1576 830h0M1577 851h0M1577 903h0M1577 936h0M1578 924h0M1578 808h0M1578 813h0M1578 817h0M1579 848h0M1579 922h0M1579 840h0M1580 814h0M1580 860h0M1580 946h0M1580 827h0M1580 897h0M1580 931h0M1580 880h0M1580 844h0M1580 927h0M1580 899h0M1581 930h0M1581 828h0M1581 824h0M1581 842h0M1581 893h0M1582 807h0M1582 878h0M1582 932h0M1582 793h0M1583 785h0M1583 913h0M1583 861h0M1583 944h0M1583 887h0M1583 893h0M1584 969h0M1584 861h0M1584 834h0M1584 911h0M1584 878h0M1584 944h0M1584 890h0M1585 825h0M1585 938h0M1585 890h0M1585 907h0M1585 783h0M1586 895h0M1586 875h0M1586 786h0M1586 856h0M1586 850h0M1587 938h0M1587 864h0M1587 863h0M1587 853h0M1587 935h0M1587 858h0M1587 807h0M1588 920h0M1588 788h0M1588 896h0M1589 850h0M1589 923h0M1589 859h0M1589 797h0M1589 856h0M1589 881h0M1589 857h0M1589 928h0M1589 836h0M1589 808h0M1589 930h0M1590 908h0M1590 957h0M1590 897h0M1591 865h0M1591 888h0M1591 851h0M1591 804h0M1591 821h0M1591 884h0M1592 842h0M1592 971h0M1593 952h0M1593 959h0M1593 879h0M1593 899h0M1593 822h0M1593 841h0M1593 930h0M1593 826h0M1593 899h0M1593 850h0M1593 972h0M1594 796h0M1594 860h0M1594 856h0M1594 881h0M1594 785h0M1594 833h0M1594 817h0M1594 872h0M1594 785h0M1594 818h0M1595 822h0M1595 788h0M1595 843h0M1595 912h0M1595 916h0M1595 973h0M1596 800h0M1596 924h0M1596 913h0M1596 941h0M1596 770h0M1596 844h0M1596 888h0M1596 802h0M1596 759h0M1597 838h0M1597 869h0M1597 856h0M1597 809h0M1597 928h0M1597 825h0M1597 921h0M1597 838h0M1597 807h0M1598 791h0M1598 854h0M1598 778h0M1598 939h0M1598 912h0M1598 896h0M1598 861h0M1598 851h0M1599 869h0M1599 812h0M1599 907h0M1599 925h0M1599 872h0M1599 960h0M1599 896h0M1599 863h0M1600 787h0M1600 831h0M1600 865h0M1600 934h0M1600 831h0M1600 832h0M1600 861h0M1600 955h0M1601 870h0M1601 919h0M1601 890h0M1601 825h0M1602 810h0M1602 878h0M1602 764h0M1602 844h0M1602 909h0M1602 932h0M1602 789h0M1602 812h0M1603 890h0M1603 787h0M1603 877h0M1604 817h0M1604 781h0M1604 914h0M1604 878h0M1604 916h0M1604 776h0M1604 967h0M1604 935h0M1604 947h0M1605 913h0M1605 934h0M1605 830h0M1605 840h0M1605 849h0M1606 866h0M1606 957h0M1606 873h0M1606 943h0M1606 996h0M1607 919h0M1607 837h0M1607 879h0M1607 791h0M1607 916h0M1607 904h0M1607 885h0M1607 871h0M1607 884h0M1607 898h0M1607 898h0M1608 887h0M1608 928h0M1608 842h0M1608 909h0M1608 918h0M1608 885h0M1608 960h0M1609 890h0M1609 823h0M1609 893h0M1609 780h0M1609 966h0M1609 838h0M1610 898h0M1610 825h0M1610 887h0M1610 894h0M1610 932h0M1610 788h0M1610 919h0M1610 915h0M1610 902h0M1611 938h0M1611 935h0M1611 891h0M1611 824h0M1611 801h0M1611 903h0M1611 884h0M1611 873h0M1611 866h0M1611 887h0M1612 815h0M1612 866h0M1612 847h0M1612 862h0M1612 803h0M1612 810h0M1612 909h0M1612 895h0M1612 957h0M1612 939h0M1613 825h0M1613 823h0M1613 850h0M1613 937h0M1613 890h0M1614 951h0M1614 855h0M1614 948h0M1614 885h0M1614 801h0M1614 871h0M1614 935h0M1615 908h0M1615 799h0M1615 809h0M1615 778h0M1616 779h0M1616 785h0M1616 865h0M1616 772h0M1616 866h0M1617 871h0M1617 897h0M1617 907h0M1617 833h0M1617 904h0M1617 833h0M1617 971h0M1617 872h0M1617 883h0M1618 838h0M1618 923h0M1618 927h0M1618 791h0M1618 836h0M1618 842h0M1618 769h0M1618 940h0M1618 961h0M1618 855h0M1619 789h0M1619 916h0M1619 938h0M1619 933h0M1619 952h0M1619 927h0M1619 940h0M1619 928h0M1620 893h0M1620 910h0M1620 877h0M1620 747h0M1620 894h0M1620 877h0M1620 911h0M1620 874h0M1620 855h0M1620 860h0M1621 918h0M1621 908h0M1621 862h0M1621 830h0M1621 883h0M1621 919h0M1621 929h0M1622 881h0M1622 870h0M1622 840h0M1622 870h0M1622 885h0M1622 940h0M1622 842h0M1623 870h0M1623 891h0M1623 820h0M1623 823h0M1623 923h0M1623 887h0M1623 913h0M1623 951h0M1623 861h0M1623 860h0M1624 814h0M1624 796h0M1624 841h0M1624 919h0M1624 885h0M1624 790h0M1624 751h0M1624 809h0M1624 805h0M1625 823h0M1625 885h0M1625 933h0M1625 888h0M1625 908h0M1625 923h0M1625 813h0M1625 836h0M1625 815h0M1626 932h0M1626 815h0M1626 1015h0M1627 885h0M1627 846h0M1627 928h0M1627 813h0M1627 946h0M1628 932h0M1628 880h0M1628 878h0M1628 830h0M1628 919h0M1628 893h0M1628 950h0M1628 792h0M1629 925h0M1629 793h0M1629 913h0M1629 919h0M1629 804h0M1629 894h0M1629 759h0M1630 859h0M1630 872h0M1630 963h0M1630 820h0M1630 853h0M1631 831h0M1631 785h0M1631 936h0M1631 863h0M1631 879h0M1631 810h0M1631 855h0M1631 883h0M1631 915h0M1631 878h0M1632 895h0M1632 912h0M1632 857h0M1632 866h0M1632 816h0M1632 903h0M1633 875h0M1633 828h0M1633 930h0M1633 790h0M1633 858h0M1634 961h0M1634 835h0M1634 928h0M1634 836h0M1634 812h0M1634 820h0M1634 921h0M1634 834h0M1634 820h0M1634 894h0M1635 788h0M1635 882h0M1635 921h0M1635 805h0M1635 807h0M1635 972h0M1635 814h0M1635 877h0M1636 903h0M1636 885h0M1636 882h0M1636 946h0M1636 849h0M1636 843h0M1636 842h0M1636 920h0M1637 820h0M1637 897h0M1637 869h0M1637 942h0M1637 884h0M1638 797h0M1638 848h0M1638 815h0M1638 890h0M1638 798h0M1638 828h0M1638 826h0M1638 872h0M1638 806h0M1638 925h0M1638 809h0M1639 919h0M1639 864h0M1639 899h0M1639 816h0M1639 866h0M1640 810h0M1640 927h0M1641 870h0M1641 886h0M1641 782h0M1641 923h0M1641 871h0M1642 801h0M1642 844h0M1642 886h0M1642 867h0M1643 877h0M1643 923h0M1643 852h0M1643 836h0M1643 876h0M1644 874h0M1644 920h0M1644 878h0M1644 917h0M1644 882h0M1644 824h0M1645 880h0M1645 819h0M1645 901h0M1645 909h0M1645 868h0M1645 915h0M1646 777h0M1646 881h0M1646 910h0M1647 941h0M1647 877h0M1647 787h0M1647 909h0M1647 932h0M1648 981h0M1648 937h0M1648 877h0M1648 799h0M1648 838h0M1648 837h0M1648 821h0M1648 909h0M1649 803h0M1649 847h0M1649 784h0M1649 835h0M1649 875h0M1649 888h0M1650 838h0M1650 800h0M1650 892h0M1650 944h0M1650 872h0M1650 893h0M1650 884h0M1651 948h0M1651 844h0M1651 894h0M1651 843h0M1652 842h0M1652 900h0M1652 819h0M1652 824h0M1652 850h0M1652 808h0M1652 953h0M1652 914h0M1653 831h0M1653 903h0M1653 896h0M1653 873h0M1653 872h0M1653 922h0M1653 783h0M1653 904h0M1653 901h0M1654 883h0M1654 915h0M1654 826h0M1654 946h0M1655 829h0M1655 948h0M1655 930h0M1655 906h0M1655 895h0M1655 869h0M1656 850h0M1656 894h0M1656 919h0M1656 843h0M1656 912h0M1656 861h0M1656 919h0M1656 832h0M1656 931h0M1656 914h0M1657 911h0M1657 866h0M1657 918h0M1657 935h0M1657 865h0M1657 842h0M1657 906h0M1658 928h0M1658 938h0M1658 799h0M1658 921h0M1658 858h0M1658 923h0M1658 881h0M1659 896h0M1659 838h0M1659 810h0M1659 871h0M1659 870h0M1660 885h0M1660 769h0M1660 776h0M1660 811h0M1660 878h0M1660 823h0M1660 842h0M1661 924h0M1661 979h0M1661 764h0M1661 881h0M1661 867h0M1661 962h0M1661 922h0M1661 825h0M1662 916h0M1662 877h0M1662 867h0M1662 829h0M1662 896h0M1663 854h0M1663 922h0M1663 880h0M1663 899h0M1663 815h0M1663 802h0M1663 870h0M1663 925h0M1663 855h0M1664 940h0M1664 818h0M1664 888h0M1664 850h0M1664 890h0M1665 876h0M1665 946h0M1665 897h0M1665 931h0M1665 887h0M1665 921h0M1666 898h0M1666 805h0M1666 841h0M1666 845h0M1666 947h0M1666 926h0M1667 885h0M1667 817h0M1667 824h0M1667 802h0M1667 819h0M1667 825h0M1667 852h0M1667 937h0M1667 826h0M1668 794h0M1668 858h0M1668 919h0M1668 811h0M1668 893h0M1668 851h0M1668 885h0M1668 828h0M1668 871h0M1668 781h0M1668 892h0M1668 835h0M1669 912h0M1669 941h0M1669 859h0M1669 817h0M1669 877h0M1670 903h0M1670 892h0M1670 922h0M1670 961h0M1670 813h0M1670 892h0M1670 896h0M1671 814h0M1671 814h0M1671 899h0M1671 890h0M1671 889h0M1671 810h0M1671 835h0M1671 840h0M1671 917h0M1672 918h0M1672 882h0M1672 850h0M1672 811h0M1672 808h0M1672 883h0M1672 902h0M1672 815h0M1673 871h0M1673 956h0M1673 906h0M1673 821h0M1673 852h0M1673 852h0M1673 897h0M1673 822h0M1674 821h0M1674 832h0M1674 872h0M1674 865h0M1674 931h0M1674 924h0M1675 794h0M1675 835h0M1675 916h0M1675 827h0M1675 815h0M1675 952h0M1675 885h0M1675 952h0M1675 828h0M1676 852h0M1676 858h0M1676 876h0M1676 837h0M1676 847h0M1676 879h0M1676 860h0M1676 835h0M1677 763h0M1677 815h0M1677 853h0M1677 914h0M1677 889h0M1677 897h0M1677 901h0M1677 873h0M1677 823h0M1677 848h0M1677 888h0M1678 817h0M1678 936h0M1678 921h0M1678 807h0M1678 932h0M1678 841h0M1678 946h0M1679 854h0M1679 857h0M1679 916h0M1679 930h0M1680 908h0M1680 861h0M1680 822h0M1680 801h0M1680 903h0M1680 928h0M1680 938h0M1681 912h0M1681 867h0M1681 856h0M1681 859h0M1681 878h0M1681 892h0M1681 812h0M1681 829h0M1681 993h0M1681 821h0M1681 856h0M1682 853h0M1682 835h0M1682 903h0M1682 788h0M1682 927h0M1682 878h0M1682 881h0M1682 808h0M1682 907h0M1683 829h0M1683 815h0M1683 909h0M1683 801h0M1683 922h0M1683 893h0M1683 811h0M1683 876h0M1684 851h0M1684 922h0M1684 869h0M1684 856h0M1685 843h0M1685 898h0M1685 869h0M1685 903h0M1685 859h0M1685 909h0M1685 829h0M1685 864h0M1685 972h0M1685 889h0M1685 869h0M1686 827h0M1686 832h0M1686 825h0M1686 904h0M1686 916h0M1686 829h0M1687 998h0M1687 873h0M1687 891h0M1687 919h0M1687 891h0M1687 912h0M1688 890h0M1688 781h0M1688 774h0M1688 927h0M1688 826h0M1688 896h0M1689 895h0M1689 825h0M1689 866h0M1689 887h0M1689 807h0M1689 906h0M1689 895h0M1690 931h0M1690 757h0M1690 842h0M1690 844h0M1690 872h0M1690 813h0M1691 870h0M1691 891h0M1691 882h0M1691 919h0M1691 851h0M1691 898h0M1691 863h0M1692 774h0M1692 824h0M1692 837h0M1692 905h0M1692 849h0M1692 932h0M1692 876h0M1692 846h0M1692 912h0M1693 844h0M1693 940h0M1693 860h0M1693 864h0M1693 805h0M1693 851h0M1693 827h0M1694 902h0M1694 854h0M1694 907h0M1694 799h0M1695 933h0M1695 904h0M1695 913h0M1695 869h0M1695 871h0M1695 827h0M1695 900h0M1696 848h0M1696 892h0M1696 820h0M1696 827h0M1696 866h0M1696 861h0M1696 835h0M1697 822h0M1697 856h0M1697 764h0M1697 823h0M1697 895h0M1698 795h0M1698 865h0M1698 838h0M1698 924h0M1698 853h0M1698 840h0M1698 797h0M1699 921h0M1699 805h0M1699 905h0M1699 822h0M1699 959h0M1699 887h0M1699 795h0M1699 931h0M1700 895h0M1700 846h0M1700 865h0M1700 987h0M1700 871h0M1700 812h0M1700 855h0M1701 915h0M1701 835h0M1701 853h0M1701 909h0M1701 922h0M1701 807h0M1701 861h0M1701 826h0M1701 808h0M1701 846h0M1701 937h0M1702 881h0M1702 924h0M1702 915h0M1702 854h0M1702 800h0M1703 826h0M1703 868h0M1703 818h0M1703 889h0M1704 816h0M1704 967h0M1704 892h0M1705 942h0M1705 919h0M1705 915h0M1705 902h0M1705 907h0M1705 895h0M1705 861h0M1705 855h0M1705 911h0M1706 795h0M1706 899h0M1706 932h0M1706 847h0M1707 844h0M1707 881h0M1707 929h0M1707 873h0M1707 925h0M1707 867h0M1707 876h0M1707 926h0M1707 920h0M1707 872h0M1707 849h0M1707 839h0M1707 860h0M1707 887h0M1708 845h0M1708 814h0M1708 917h0M1708 923h0M1708 940h0M1708 884h0M1708 819h0M1708 835h0M1708 901h0M1708 889h0M1708 955h0M1708 909h0M1708 924h0M1708 927h0M1709 897h0M1709 895h0M1709 865h0M1709 883h0M1709 888h0M1709 868h0M1709 827h0M1710 842h0M1710 896h0M1710 858h0M1710 830h0M1710 891h0M1710 826h0M1710 883h0M1710 918h0M1710 822h0M1710 796h0M1710 842h0M1711 938h0M1711 857h0M1711 841h0M1711 952h0M1711 883h0M1711 810h0M1711 849h0M1711 857h0M1712 874h0M1712 875h0M1712 927h0M1712 820h0M1712 903h0M1712 919h0M1712 863h0M1712 858h0M1712 873h0M1712 815h0M1712 799h0M1713 865h0M1713 895h0M1713 819h0M1713 909h0M1713 809h0M1713 826h0M1713 931h0M1713 867h0M1713 870h0M1714 875h0M1714 866h0M1714 821h0M1714 878h0M1714 806h0M1715 859h0M1715 932h0M1715 916h0M1715 870h0M1715 859h0M1715 938h0M1715 906h0M1715 915h0M1715 893h0M1716 916h0M1716 850h0M1716 849h0M1716 867h0M1716 914h0M1717 898h0M1718 874h0M1718 822h0M1718 905h0M1718 903h0M1718 877h0M1719 808h0M1719 905h0M1719 850h0M1719 814h0M1719 957h0M1719 901h0M1719 886h0M1720 889h0M1720 902h0M1720 897h0M1720 864h0M1720 868h0M1720 883h0M1720 939h0M1720 833h0M1720 852h0M1720 898h0M1721 938h0M1721 905h0M1721 823h0M1721 823h0M1721 903h0M1721 943h0M1721 890h0M1721 872h0M1721 944h0M1721 873h0M1721 899h0M1722 869h0M1722 895h0M1722 850h0M1722 851h0M1722 843h0M1723 816h0M1723 912h0M1723 895h0M1724 870h0M1724 872h0M1724 852h0M1724 832h0M1724 912h0M1724 826h0M1724 872h0M1724 912h0M1725 843h0M1725 899h0M1725 908h0M1725 932h0M1725 913h0M1725 813h0M1725 836h0M1725 912h0M1726 849h0M1726 888h0M1726 857h0M1726 827h0M1726 866h0M1726 872h0M1726 868h0M1726 847h0M1726 947h0M1727 889h0M1727 832h0M1727 849h0M1727 863h0M1727 894h0M1727 800h0M1727 860h0M1728 868h0M1728 849h0M1728 941h0M1728 906h0M1728 923h0M1728 838h0M1729 810h0M1729 832h0M1729 814h0M1729 924h0M1729 852h0M1729 884h0M1729 815h0M1729 886h0M1729 914h0M1729 844h0M1729 947h0M1729 922h0M1729 921h0M1730 868h0M1730 810h0M1730 844h0M1730 825h0M1730 861h0M1730 874h0M1730 879h0M1730 917h0M1730 875h0M1730 846h0M1731 931h0M1731 876h0M1731 931h0M1731 901h0M1731 926h0M1731 884h0M1731 871h0M1732 825h0M1732 824h0M1732 889h0M1732 867h0M1732 859h0M1732 863h0M1732 893h0M1732 828h0M1732 921h0M1732 801h0M1732 843h0M1733 871h0M1733 821h0M1733 926h0M1733 850h0M1733 915h0M1733 927h0M1733 1007h0M1734 871h0M1734 860h0M1734 823h0M1734 880h0M1734 853h0M1734 810h0M1734 910h0M1735 945h0M1735 853h0M1735 845h0M1735 906h0M1736 847h0M1736 879h0M1736 956h0M1736 931h0M1736 923h0M1737 873h0M1737 905h0M1737 832h0M1737 839h0M1737 922h0M1737 897h0M1737 870h0M1737 836h0M1737 885h0M1737 939h0M1737 872h0M1738 882h0M1738 885h0M1738 913h0M1738 911h0M1738 950h0M1738 919h0M1738 920h0M1739 879h0M1739 807h0M1739 921h0M1740 862h0M1740 934h0M1740 849h0M1740 920h0M1740 933h0M1740 862h0M1741 889h0M1741 857h0M1741 881h0M1741 898h0M1741 891h0M1742 903h0M1742 888h0M1742 911h0M1742 864h0M1743 847h0M1743 850h0M1743 859h0M1743 932h0M1743 923h0M1743 891h0M1743 839h0M1743 843h0M1743 896h0M1744 826h0M1744 835h0M1744 869h0M1744 939h0M1744 814h0M1745 928h0M1745 834h0M1745 811h0M1745 851h0M1745 834h0M1745 865h0M1745 873h0M1745 1010h0M1746 906h0M1746 903h0M1746 870h0M1746 951h0M1746 850h0M1747 916h0M1747 867h0M1747 838h0M1747 908h0M1747 908h0M1747 874h0M1747 849h0M1748 923h0M1748 841h0M1748 924h0M1748 950h0M1748 821h0M1749 867h0M1749 849h0M1749 831h0M1749 897h0M1749 902h0M1749 846h0M1749 821h0M1749 995h0M1749 890h0M1749 841h0M1749 838h0M1749 901h0M1749 851h0M1750 858h0M1750 836h0M1750 922h0M1750 930h0M1750 874h0M1750 913h0M1750 838h0M1750 880h0M1750 883h0M1751 935h0M1751 903h0M1751 917h0M1751 832h0M1752 912h0M1752 827h0M1752 872h0M1752 867h0M1752 829h0M1753 895h0M1753 837h0M1753 897h0M1753 881h0M1753 917h0M1753 894h0M1753 893h0M1753 887h0M1753 919h0M1754 893h0M1754 927h0M1754 918h0M1754 854h0M1754 970h0M1754 864h0M1754 912h0M1754 824h0M1755 896h0M1755 886h0M1755 908h0M1755 814h0M1755 868h0M1755 889h0M1755 845h0M1755 861h0M1756 873h0M1756 971h0M1756 878h0M1756 821h0M1756 893h0M1756 841h0M1756 900h0M1757 853h0M1757 869h0M1757 909h0M1758 864h0M1758 905h0M1758 888h0M1758 926h0M1758 915h0M1758 869h0M1758 776h0M1758 924h0M1758 891h0M1758 874h0M1758 848h0M1759 958h0M1759 856h0M1759 853h0M1759 974h0M1759 830h0M1759 936h0M1760 875h0M1760 917h0M1760 921h0M1760 893h0M1760 827h0M1760 916h0M1760 872h0M1760 862h0M1760 905h0M1760 886h0M1760 867h0M1760 948h0M1761 922h0M1761 908h0M1761 858h0M1761 870h0M1761 920h0M1761 934h0M1761 840h0M1761 848h0M1761 824h0M1762 877h0M1762 884h0M1762 838h0M1762 810h0M1762 808h0M1762 866h0M1763 822h0M1763 816h0M1763 899h0M1763 830h0M1763 866h0M1764 871h0M1764 929h0M1764 845h0M1764 861h0M1764 861h0M1765 833h0M1765 911h0M1765 914h0M1765 863h0M1765 915h0M1765 823h0M1766 913h0M1766 908h0M1766 853h0M1767 911h0M1767 865h0M1767 906h0M1767 870h0M1767 926h0M1767 903h0M1767 831h0M1767 804h0M1768 842h0M1768 915h0M1768 807h0M1768 953h0M1768 926h0M1768 845h0M1768 861h0M1768 829h0M1769 866h0M1769 867h0M1769 838h0M1769 897h0M1770 868h0M1770 829h0M1770 899h0M1770 952h0M1770 828h0M1770 869h0M1770 857h0M1770 910h0M1770 817h0M1770 847h0M1771 843h0M1771 844h0M1771 887h0M1771 896h0M1771 847h0M1771 824h0M1771 822h0M1771 894h0M1772 864h0M1772 909h0M1772 848h0M1772 891h0M1772 891h0M1772 816h0M1772 909h0M1772 895h0M1773 838h0M1773 877h0M1773 874h0M1773 926h0M1773 914h0M1773 825h0M1773 863h0M1773 861h0M1773 918h0M1773 891h0M1773 901h0M1773 883h0M1773 826h0M1773 917h0M1773 962h0M1773 951h0M1774 923h0M1774 928h0M1774 881h0M1774 914h0M1774 876h0M1774 868h0M1774 948h0M1774 842h0M1774 863h0M1774 928h0M1774 812h0M1774 856h0M1774 879h0M1775 818h0M1775 903h0M1775 942h0M1775 809h0M1776 839h0M1776 896h0M1776 857h0M1776 920h0M1776 852h0M1776 932h0M1776 882h0M1776 935h0M1776 937h0M1776 828h0M1777 936h0M1777 914h0M1777 882h0M1777 843h0M1777 808h0M1777 845h0M1777 907h0M1778 898h0M1778 853h0M1778 990h0M1778 905h0M1778 946h0M1778 893h0M1778 986h0M1779 830h0M1779 844h0M1779 955h0M1779 819h0M1779 853h0M1780 958h0M1780 869h0M1780 812h0M1780 888h0M1780 904h0M1780 827h0M1780 873h0M1781 917h0M1781 901h0M1781 934h0M1781 886h0M1781 826h0M1781 844h0M1781 878h0M1781 841h0M1782 850h0M1782 854h0M1782 899h0M1782 963h0M1782 892h0M1782 882h0M1783 851h0M1783 814h0M1783 858h0M1783 855h0M1783 829h0M1783 851h0M1783 906h0M1784 884h0M1784 919h0M1784 899h0M1784 867h0M1785 772h0M1785 836h0M1785 862h0M1785 877h0M1785 954h0M1785 942h0M1786 853h0M1786 882h0M1786 911h0M1786 822h0M1786 887h0M1786 872h0M1786 865h0M1787 834h0M1787 847h0M1787 878h0M1788 823h0M1788 885h0M1788 841h0M1788 819h0M1788 915h0M1788 850h0M1788 884h0M1789 869h0M1789 801h0M1789 823h0M1789 828h0M1789 1015h0M1789 837h0M1789 912h0M1789 944h0M1789 863h0M1789 841h0M1789 826h0M1790 932h0M1790 939h0M1790 868h0M1790 952h0M1790 900h0M1790 802h0M1790 817h0M1791 801h0M1791 845h0M1791 871h0M1791 821h0M1791 938h0M1791 886h0M1791 785h0M1791 853h0M1792 811h0M1792 935h0M1792 832h0M1792 905h0M1792 929h0M1792 920h0M1792 846h0M1792 904h0M1792 937h0M1793 809h0M1793 887h0M1793 927h0M1793 905h0M1793 875h0M1793 912h0M1793 799h0M1793 894h0M1793 970h0M1793 896h0M1794 824h0M1794 843h0M1794 829h0M1794 885h0M1794 873h0M1794 978h0M1794 951h0M1794 816h0M1794 910h0M1795 831h0M1795 894h0M1795 846h0M1795 787h0M1795 851h0M1795 827h0M1795 902h0M1795 882h0M1796 852h0M1796 866h0M1796 926h0M1796 957h0M1796 993h0M1796 948h0M1796 965h0M1796 874h0M1796 939h0M1796 858h0M1796 861h0M1796 851h0M1797 822h0M1797 956h0M1797 927h0M1797 866h0M1797 969h0M1797 889h0M1797 819h0M1797 851h0M1798 868h0M1798 944h0M1798 810h0M1798 832h0M1798 862h0M1798 844h0M1798 775h0M1798 816h0M1799 810h0M1799 844h0M1799 834h0M1799 950h0M1799 833h0M1799 808h0M1800 799h0M1800 897h0M1800 1000h0M1800 919h0M1800 922h0M1800 761h0M1800 858h0M1800 933h0M1801 831h0M1801 944h0M1801 897h0M1801 834h0M1801 753h0M1801 852h0M1801 829h0M1801 801h0M1801 1016h0M1802 1029h0M1802 962h0M1802 793h0M1802 932h0M1802 963h0M1803 991h0M1803 745h0M1803 842h0M1803 852h0M1803 862h0M1803 956h0M1803 924h0M1803 1024h0M1803 915h0M1804 954h0M1804 831h0M1804 858h0M1804 965h0M1804 908h0M1804 794h0M1804 928h0M1805 967h0M1805 931h0M1805 825h0M1805 903h0M1805 982h0M1805 823h0M1805 945h0M1806 765h0M1806 944h0M1806 851h0M1806 876h0M1806 995h0M1807 881h0M1807 929h0M1807 965h0M1807 826h0M1807 1026h0M1807 922h0M1807 908h0M1807 976h0M1808 942h0M1808 855h0M1808 808h0M1808 765h0M1808 971h0M1809 845h0M1809 898h0M1809 827h0M1809 810h0M1809 897h0M1809 810h0M1809 934h0M1809 792h0M1809 789h0M1810 964h0M1810 802h0M1811 888h0M1811 833h0M1811 892h0M1811 866h0M1811 880h0M1811 902h0M1811 825h0M1811 864h0M1811 787h0M1811 756h0M1811 970h0M1811 888h0M1811 1016h0M1812 920h0M1812 952h0M1812 978h0M1812 1014h0M1812 862h0M1812 945h0M1812 847h0M1812 759h0M1812 955h0M1813 943h0M1813 870h0M1813 885h0M1813 826h0M1813 883h0M1813 827h0M1814 806h0M1814 936h0M1814 737h0M1814 997h0M1814 984h0M1814 1029h0M1814 921h0M1814 907h0M1814 973h0M1814 1010h0M1815 927h0M1815 789h0M1815 724h0M1815 991h0M1815 869h0M1815 889h0M1815 972h0M1815 957h0M1816 810h0M1816 927h0M1816 776h0M1816 897h0M1816 951h0M1817 857h0M1817 928h0M1817 947h0M1817 1020h0M1817 773h0M1817 878h0M1818 832h0M1818 863h0M1818 719h0M1818 850h0M1818 1065h0M1819 948h0M1819 864h0M1819 730h0M1820 976h0M1820 931h0M1820 788h0M1820 892h0M1820 889h0M1820 910h0M1820 737h0M1821 789h0M1821 823h0M1821 983h0M1821 731h0M1821 962h0M1821 879h0M1821 1078h0M1822 818h0M1822 1017h0M1822 737h0M1822 852h0M1822 726h0M1822 898h0M1822 852h0M1822 946h0M1822 780h0M1822 915h0M1822 975h0M1822 921h0M1823 867h0M1823 918h0M1823 847h0M1823 879h0M1823 688h0M1823 1026h0M1823 707h0M1823 821h0M1824 810h0M1824 924h0M1824 961h0M1824 841h0M1824 937h0M1824 927h0M1824 975h0M1824 797h0M1825 887h0M1825 816h0M1825 847h0M1825 748h0M1826 853h0M1826 859h0M1826 1122h0M1826 934h0M1826 947h0M1826 1017h0M1826 735h0M1826 872h0M1826 856h0M1827 771h0M1827 758h0M1827 832h0M1827 905h0M1827 957h0M1827 951h0M1827 868h0M1827 761h0M1827 785h0M1827 788h0M1827 738h0M1827 758h0M1827 852h0M1827 853h0M1827 961h0M1828 774h0M1828 806h0M1828 971h0M1828 889h0M1828 805h0M1829 853h0M1829 919h0M1829 740h0M1829 824h0M1829 941h0M1829 775h0M1829 941h0M1830 788h0M1830 834h0M1830 762h0M1830 814h0M1830 945h0M1830 1097h0M1831 797h0M1831 948h0M1831 984h0M1831 934h0M1831 945h0M1831 805h0M1832 734h0M1832 933h0M1832 877h0M1832 865h0M1832 1016h0M1832 907h0M1832 710h0M1832 866h0M1833 801h0M1833 1002h0M1833 841h0M1833 779h0M1833 862h0M1833 758h0M1833 785h0M1833 754h0M1833 981h0M1833 1046h0M1834 979h0M1834 979h0M1834 1012h0M1834 785h0M1834 819h0M1834 926h0M1834 923h0M1834 865h0M1834 983h0M1834 946h0M1834 751h0M1834 912h0M1835 850h0M1835 745h0M1835 1015h0M1836 774h0M1836 706h0M1836 891h0M1836 758h0M1836 790h0M1836 951h0M1836 745h0M1836 809h0M1837 869h0M1837 922h0M1837 783h0M1837 1011h0M1837 1054h0M1837 939h0M1837 962h0M1838 921h0M1838 838h0M1838 814h0M1838 917h0M1838 782h0M1838 912h0M1838 798h0M1839 936h0M1839 713h0M1839 843h0M1839 1029h0M1840 874h0M1840 968h0M1840 805h0M1840 749h0M1840 870h0M1840 880h0M1840 845h0M1840 1016h0M1841 817h0M1841 851h0M1841 802h0M1841 904h0M1841 896h0M1841 843h0M1841 754h0M1842 682h0M1842 877h0M1842 832h0M1842 824h0M1842 804h0M1842 1045h0M1842 931h0M1843 1024h0M1843 824h0M1843 753h0M1843 842h0M1843 933h0M1843 830h0M1843 724h0M1843 737h0M1843 836h0M1844 989h0M1844 904h0M1844 932h0M1844 774h0M1845 1005h0M1845 929h0M1845 893h0M1845 861h0M1846 969h0M1846 953h0M1846 908h0M1846 799h0M1846 759h0M1846 974h0M1846 963h0M1846 832h0M1846 1034h0M1847 748h0M1847 856h0M1847 696h0M1847 947h0M1847 893h0M1847 956h0M1847 808h0M1847 953h0M1848 937h0M1848 722h0M1848 880h0M1848 848h0M1848 745h0M1848 767h0M1849 676h0M1849 888h0M1849 746h0M1849 1018h0M1849 785h0M1849 929h0M1849 968h0M1849 972h0M1849 801h0M1850 809h0M1850 808h0M1850 949h0M1850 787h0M1850 709h0M1850 722h0M1850 765h0M1850 935h0M1850 914h0M1851 761h0M1851 679h0M1851 1000h0M1851 977h0M1851 872h0M1852 733h0M1852 747h0M1852 861h0M1852 776h0M1852 971h0M1852 1001h0M1853 705h0M1853 694h0M1854 900h0M1854 976h0M1854 860h0M1854 719h0M1854 1003h0M1854 793h0M1854 758h0M1855 917h0M1855 859h0M1855 786h0M1855 977h0M1855 918h0M1855 882h0M1855 931h0M1855 926h0M1855 802h0M1856 930h0M1856 840h0M1856 844h0M1856 758h0M1856 1053h0M1856 926h0M1856 998h0M1856 758h0M1856 709h0M1856 962h0M1856 993h0M1856 827h0M1856 954h0M1856 788h0M1856 995h0M1857 802h0M1857 935h0M1857 744h0M1857 794h0M1857 858h0M1857 916h0M1857 723h0M1857 880h0M1857 846h0M1857 1025h0M1858 771h0M1858 940h0M1858 800h0M1858 887h0M1858 1002h0M1858 817h0M1858 868h0M1858 857h0M1858 757h0M1858 921h0M1859 773h0M1859 756h0M1859 776h0M1859 841h0M1859 964h0M1860 719h0M1860 737h0M1860 904h0M1860 802h0M1861 800h0M1861 915h0M1861 931h0M1861 882h0M1861 856h0M1861 988h0M1861 911h0M1861 940h0M1861 848h0M1861 972h0M1861 918h0M1861 863h0M1861 877h0M1861 791h0M1862 752h0M1862 951h0M1862 755h0M1862 751h0M1863 966h0M1863 850h0M1863 901h0M1863 779h0M1863 774h0M1863 790h0M1864 854h0M1864 985h0M1864 949h0M1864 885h0M1864 709h0M1864 865h0M1864 825h0M1864 964h0M1865 1033h0M1865 970h0M1865 855h0M1865 797h0M1865 896h0M1865 867h0M1865 832h0M1865 842h0M1865 876h0M1865 868h0M1865 869h0M1866 960h0M1866 781h0M1866 758h0M1866 777h0M1867 952h0M1867 780h0M1867 744h0M1868 785h0M1868 828h0M1868 843h0M1868 727h0M1868 868h0M1868 797h0M1868 882h0M1868 874h0M1868 959h0M1868 858h0M1869 715h0M1869 904h0M1869 1064h0M1869 931h0M1869 754h0M1869 914h0M1869 954h0M1869 761h0M1869 894h0M1869 911h0M1870 865h0M1870 942h0M1870 776h0M1870 935h0M1870 875h0M1870 956h0M1870 815h0M1870 864h0M1870 941h0M1871 873h0M1871 893h0M1871 882h0M1871 881h0M1871 955h0M1871 771h0M1871 1025h0M1871 925h0M1871 940h0M1872 832h0M1872 729h0M1872 747h0M1873 860h0M1873 978h0M1873 790h0M1873 839h0M1873 911h0M1873 836h0M1873 905h0M1874 840h0M1874 931h0M1874 907h0M1875 825h0M1875 965h0M1875 816h0M1876 734h0M1876 741h0M1876 927h0M1876 853h0M1876 1014h0M1876 1042h0M1877 953h0M1877 901h0M1877 875h0M1877 791h0M1877 818h0M1877 973h0M1877 929h0M1878 996h0M1878 945h0M1878 775h0M1878 881h0M1878 972h0M1878 828h0M1878 789h0M1878 847h0M1878 817h0M1879 778h0M1879 813h0M1879 824h0M1879 843h0M1879 765h0M1879 937h0M1879 1000h0M1879 809h0M1880 929h0M1880 748h0M1880 900h0M1880 879h0M1880 823h0M1880 836h0M1880 870h0M1881 907h0M1881 764h0M1881 850h0M1881 907h0M1881 888h0M1881 839h0M1881 983h0M1881 860h0M1882 995h0M1882 805h0M1882 883h0M1883 899h0M1883 914h0M1883 906h0M1883 941h0M1883 850h0M1883 832h0M1884 975h0M1884 876h0M1884 881h0M1884 841h0M1885 898h0M1885 858h0M1885 918h0M1885 837h0M1885 872h0M1885 811h0M1885 826h0M1885 999h0M1885 867h0M1885 811h0M1885 840h0M1886 981h0M1886 896h0M1886 835h0M1886 870h0M1886 912h0M1886 853h0M1886 896h0M1887 822h0M1887 928h0M1887 832h0M1887 790h0M1887 932h0M1887 930h0M1887 897h0M1887 825h0M1888 967h0M1888 874h0M1888 916h0M1888 829h0M1888 870h0M1888 856h0M1888 899h0M1888 892h0M1889 891h0M1889 837h0M1889 893h0M1889 975h0M1889 866h0M1889 834h0M1889 923h0M1889 960h0M1889 877h0M1890 910h0M1890 876h0M1890 875h0M1890 813h0M1890 954h0M1890 856h0M1890 826h0M1891 875h0M1891 816h0M1891 965h0M1891 867h0M1891 824h0M1891 867h0M1891 911h0M1891 918h0M1891 845h0M1891 838h0M1892 870h0M1892 873h0M1892 865h0M1892 894h0M1892 867h0M1892 851h0M1892 921h0M1892 838h0M1892 860h0M1893 878h0M1893 888h0M1893 848h0M1893 895h0M1893 879h0M1893 880h0M1893 857h0M1893 836h0M1893 952h0M1894 911h0M1894 957h0M1894 906h0M1894 881h0M1894 904h0M1894 868h0M1894 887h0M1894 925h0M1894 939h0M1895 912h0M1895 880h0M1895 869h0M1896 836h0M1896 913h0M1896 897h0M1896 881h0M1896 856h0M1897 856h0M1897 848h0M1897 910h0M1897 885h0M1898 891h0M1898 882h0M1898 910h0M1898 892h0M1898 905h0M1898 862h0M1898 893h0M1898 833h0M1898 896h0M1899 911h0M1899 860h0M1899 884h0M1899 903h0M1899 837h0M1899 849h0M1900 840h0M1901 857h0M1901 906h0M1901 852h0M1901 889h0M1901 911h0M1901 871h0M1901 884h0M1901 934h0M1902 901h0M1902 874h0M1902 870h0M1902 864h0M1902 851h0M1902 840h0M1902 896h0M1902 882h0M1902 894h0M1902 907h0M1902 902h0M1902 911h0M1903 853h0M1903 844h0M1903 905h0M1903 917h0M1903 878h0M1904 879h0M1904 871h0M1904 854h0M1904 892h0M1904 909h0M1904 849h0M1905 915h0M1905 856h0M1905 870h0M1905 853h0M1905 862h0M1905 941h0M1905 852h0M1905 916h0M1905 864h0M1905 872h0M1905 898h0M1905 848h0M1905 902h0M1905 853h0M1906 881h0M1906 862h0M1906 864h0M1906 869h0M1906 887h0M1906 849h0M1906 882h0M1906 859h0M1906 863h0M1907 894h0M1907 866h0M1907 912h0M1907 883h0M1907 856h0M1907 865h0M1907 855h0M1907 899h0M1908 859h0M1908 871h0M1908 896h0M1908 891h0M1908 860h0M1908 863h0M1908 887h0M1909 895h0M1909 849h0M1909 911h0M1909 857h0M1909 912h0M1909 893h0M1909 849h0M1909 896h0M1909 869h0M1909 885h0M1909 895h0M1909 883h0M1909 866h0M1910 858h0M1910 894h0M1910 883h0M1911 855h0M1911 875h0M1911 867h0M1911 866h0M1911 862h0M1911 866h0M1911 902h0M1911 850h0M1911 894h0M1912 872h0M1912 909h0M1912 860h0M1912 869h0M1912 859h0M1912 901h0M1912 844h0M1913 875h0M1913 865h0M1913 857h0M1914 853h0M1914 879h0M1914 863h0M1914 905h0M1914 902h0M1914 897h0M1915 890h0M1915 890h0M1915 879h0M1915 863h0M1915 871h0M1916 884h0M1916 877h0M1916 844h0M1916 874h0M1916 874h0M1917 903h0M1917 866h0M1917 862h0M1917 876h0M1917 882h0M1917 865h0M1917 849h0M1917 865h0M1917 881h0M1918 870h0M1918 874h0M1918 872h0M1918 891h0M1918 900h0M1918 888h0M1918 871h0M1918 884h0M1918 885h0M1918 886h0M1918 882h0M1918 854h0M1919 860h0M1919 881h0M1919 859h0M1919 852h0M1919 863h0M1920 864h0M1920 898h0M1920 890h0M1920 895h0M1920 882h0M1920 871h0M1920 869h0M1920 889h0M1921 887h0M1921 858h0M1921 868h0M1921 892h0M1921 867h0M1921 847h0M1921 883h0M1921 890h0M1921 849h0M1921 870h0M1922 878h0M1922 872h0M1922 871h0M1922 863h0M1922 861h0M1922 857h0M1922 891h0M1923 872h0M1923 888h0M1923 886h0M1923 884h0M1923 878h0M1923 865h0M1923 878h0M1923 881h0M1923 869h0M1923 881h0M1923 877h0M1924 867h0M1924 887h0M1924 893h0M1924 874h0M1924 884h0M1924 875h0M1924 875h0M1924 893h0M1925 894h0M1925 866h0M1925 871h0M1925 873h0M1925 867h0M1925 883h0M1925 866h0M1925 862h0M1925 855h0M1925 871h0M1925 887h0M1926 870h0M1926 892h0M1926 870h0M1926 864h0M1927 858h0M1927 860h0M1927 895h0M1927 880h0M1927 875h0M1927 895h0M1927 870h0M1927 878h0M1927 855h0M1928 883h0M1928 900h0M1928 878h0M1928 857h0M1928 870h0M1928 862h0M1928 885h0M1929 876h0M1929 886h0M1929 853h0M1929 860h0M1929 875h0M1929 879h0M1929 887h0M1930 889h0M1930 893h0M1930 863h0M1930 875h0M1930 886h0M1930 875h0M1930 857h0M1931 871h0M1931 832h0M1931 883h0M1931 866h0M1931 880h0M1931 866h0M1931 859h0M1931 890h0M1931 869h0M1931 863h0M1932 869h0M1932 886h0M1932 899h0M1932 860h0M1932 864h0M1932 874h0M1932 860h0M1932 884h0M1933 868h0M1933 867h0M1933 865h0M1933 888h0M1933 878h0M1933 881h0M1933 858h0M1933 872h0M1934 881h0M1934 862h0M1934 883h0M1934 860h0M1934 868h0M1934 860h0M1934 884h0M1934 882h0M1934 857h0M1934 879h0M1934 865h0M1934 889h0M1935 866h0M1935 890h0M1935 886h0M1935 887h0M1936 879h0M1936 872h0M1936 879h0M1936 864h0M1937 858h0M1937 880h0M1937 873h0M1937 877h0M1937 880h0M1937 868h0M1937 883h0M1938 876h0M1938 861h0M1938 883h0M1938 884h0M1939 882h0M1939 864h0M1939 884h0M1939 876h0M1939 868h0M1939 890h0M1939 862h0M1939 885h0M1940 890h0M1940 880h0M1940 873h0M1940 880h0M1940 889h0M1940 879h0M1940 871h0M1940 875h0M1941 879h0M1941 887h0M1941 870h0M1941 881h0M1941 862h0M1941 873h0M1941 868h0M1942 881h0M1942 871h0M1942 870h0M1942 890h0M1942 861h0M1942 881h0M1943 870h0M1943 872h0M1943 890h0M1943 866h0M1944 872h0M1944 878h0M1944 883h0M1944 893h0M1944 873h0M1944 874h0M1944 880h0M1944 881h0M1945 874h0M1945 878h0M1945 857h0M1945 882h0M1945 862h0M1945 881h0M1945 877h0M1945 879h0M1945 889h0M1946 874h0M1946 879h0M1946 887h0M1946 869h0M1946 854h0M1946 860h0M1946 881h0M1946 883h0M1947 853h0M1947 862h0M1947 873h0M1947 879h0M1947 876h0M1947 872h0M1947 875h0M1947 877h0M1947 881h0M1947 873h0M1947 888h0M1948 885h0M1948 886h0M1948 859h0M1948 861h0M1949 886h0M1949 884h0M1949 885h0M1949 875h0M1949 885h0M1949 882h0M1950 878h0M1950 871h0M1950 864h0M1950 867h0M1950 883h0M1950 857h0M1950 878h0M1950 871h0M1950 881h0M1950 875h0M1950 869h0M1950 855h0M1950 875h0M1950 870h0M1951 868h0M1951 866h0M1951 874h0M1951 869h0M1951 887h0M1951 869h0M1951 876h0M1951 860h0M1951 873h0M1951 881h0M1952 889h0M1952 869h0M1952 858h0M1952 883h0M1952 887h0M1952 873h0M1952 877h0M1952 867h0M1952 870h0M1953 894h0M1953 869h0M1953 890h0M1953 875h0M1953 875h0M1953 875h0M1953 877h0M1954 880h0M1954 876h0M1954 877h0M1954 869h0M1954 860h0M1954 869h0M1954 881h0M1954 883h0M1955 855h0M1955 861h0M1955 876h0M1955 859h0M1955 861h0M1955 855h0M1955 877h0M1956 889h0M1956 859h0M1956 878h0M1956 868h0M1956 889h0M1956 878h0M1956 860h0M1956 868h0M1956 874h0M1956 876h0M1956 880h0M1956 883h0M1957 859h0M1957 878h0M1957 880h0M1957 859h0M1957 863h0M1957 868h0M1957 870h0M1957 877h0M1958 878h0M1958 868h0M1958 882h0M1958 858h0M1958 878h0M1959 891h0M1959 865h0M1959 874h0M1959 874h0M1960 880h0M1960 864h0M1960 859h0M1960 870h0M1960 860h0M1961 869h0M1961 875h0M1961 883h0M1961 870h0M1961 869h0M1961 877h0M1961 881h0M1961 869h0M1961 865h0M1961 885h0M1961 888h0M1962 876h0M1962 874h0M1962 880h0M1962 885h0M1962 880h0M1962 877h0M1962 876h0M1962 867h0M1963 888h0M1963 869h0M1963 870h0M1963 907h0M1963 861h0M1963 885h0M1963 873h0M1963 860h0M1963 886h0M1963 865h0M1963 869h0M1963 880h0M1963 877h0M1963 862h0M1964 881h0M1964 889h0M1964 877h0M1964 883h0M1964 883h0M1964 875h0M1964 874h0M1964 853h0M1964 884h0M1964 876h0M1964 869h0M1965 876h0M1965 869h0M1965 873h0M1965 881h0M1965 852h0M1965 867h0M1965 887h0M1965 859h0M1966 867h0M1966 869h0M1966 877h0M1966 873h0M1967 878h0M1967 866h0M1967 872h0M1967 875h0M1967 876h0M1968 887h0M1968 867h0M1968 857h0M1968 885h0M1968 869h0M1968 875h0M1969 876h0M1969 869h0M1969 877h0M1969 866h0M1969 878h0M1969 878h0M1969 868h0M1969 889h0M1969 876h0M1969 864h0M1970 872h0M1970 881h0M1970 872h0M1970 870h0M1970 869h0M1970 877h0M1971 881h0M1971 875h0M1971 883h0M1971 880h0M1971 861h0M1971 873h0M1971 866h0M1971 866h0M1971 874h0M1971 864h0M1972 883h0M1972 877h0M1972 858h0M1972 862h0M1972 866h0M1972 885h0M1972 876h0M1972 866h0M1972 875h0M1972 865h0M1972 884h0M1973 872h0M1973 886h0M1973 877h0M1973 872h0M1973 861h0M1973 870h0M1973 874h0M1974 863h0M1974 868h0M1974 883h0M1974 877h0M1974 878h0M1974 862h0M1974 877h0M1974 874h0M1974 871h0M1974 879h0M1974 867h0M1974 880h0M1975 882h0M1975 875h0M1975 858h0M1975 862h0M1975 872h0M1975 871h0M1975 865h0M1975 875h0M1975 872h0M1975 877h0M1975 867h0M1975 880h0M1975 876h0M1976 878h0M1976 873h0M1976 867h0M1976 878h0M1976 867h0M1976 873h0M1976 866h0M1976 871h0M1976 875h0M1977 862h0M1977 880h0M1977 882h0M1977 870h0M1977 870h0M1977 879h0M1977 867h0M1977 885h0M1977 881h0M1978 878h0M1978 873h0M1978 879h0M1978 878h0M1978 868h0M1978 868h0M1978 871h0M1979 874h0M1979 862h0M1979 866h0M1979 876h0M1979 868h0M1979 876h0M1979 864h0M1979 873h0M1979 871h0M1979 877h0M1980 873h0M1980 880h0M1980 870h0M1981 881h0M1981 864h0M1981 877h0M1981 874h0M1981 860h0M1982 885h0M1982 883h0M1982 870h0M1982 875h0M1983 863h0M1983 885h0M1983 880h0M1983 879h0M1983 873h0M1983 878h0M1983 871h0M1983 870h0M1983 874h0M1983 869h0M1984 863h0M1984 875h0M1984 881h0M1984 879h0M1984 887h0M1985 864h0M1985 882h0M1985 879h0M1985 879h0M1985 866h0M1985 870h0M1986 872h0M1986 871h0M1986 871h0M1986 882h0M1986 879h0M1986 871h0M1986 861h0M1986 873h0M1987 879h0M1987 869h0M1987 871h0M1987 872h0M1988 882h0M1988 880h0M1988 871h0M1988 878h0M1988 863h0M1988 887h0M1988 884h0M1988 884h0M1988 878h0M1988 868h0M1989 888h0M1989 873h0M1989 866h0M1989 868h0M1989 864h0M1989 867h0M1989 874h0M1989 877h0M1989 871h0M1989 866h0M1989 869h0M1989 882h0M1990 867h0M1990 863h0M1990 881h0M1990 875h0M1990 880h0M1990 873h0M1990 884h0M1990 880h0M1990 863h0M1990 869h0M1990 874h0M1991 867h0M1991 881h0M1991 882h0M1991 868h0M1991 882h0M1992 865h0M1992 879h0M1992 868h0M1992 874h0M1992 880h0M1992 882h0M1993 883h0M1993 881h0M1993 862h0M1993 865h0M1993 870h0M1993 866h0M1993 880h0M1993 875h0M1993 874h0M1993 868h0M1993 878h0M1993 875h0M1993 884h0M1993 878h0M1994 877h0M1994 872h0M1994 880h0M1994 881h0M1994 868h0M1994 873h0M1994 869h0M1994 882h0M1995 871h0M1995 868h0M1995 883h0M1995 864h0M1995 877h0M1995 875h0M1995 874h0M1996 864h0M1996 883h0M1996 874h0M1996 878h0M1996 873h0M1996 882h0M1996 865h0M1997 867h0M1997 875h0M1997 884h0M1997 876h0M1997 867h0M1997 880h0M1997 881h0M1997 862h0M1997 878h0M1997 878h0M1997 881h0M1997 879h0M1997 880h0M1998 874h0M1998 877h0M1998 872h0M1998 864h0M1998 873h0M1998 866h0M1998 864h0M1998 874h0M1999 875h0M1999 867h0M1999 885h0M2000 862h0M2000 882h0M2000 877h0M2000 882h0M2000 875h0M2000 872h0M2001 882h0M2001 878h0M2001 876h0M2001 874h0M2001 869h0M2001 878h0M2001 876h0M2001 874h0M2002 872h0M2002 877h0M2002 880h0M2002 865h0M2002 869h0M2002 893h0M2002 866h0M2002 866h0M2002 867h0M2002 872h0M2002 869h0M2003 877h0M2003 879h0M2003 860h0M2003 885h0M2003 855h0M2003 867h0M2003 862h0M2004 875h0M2004 885h0M2004 873h0M2004 877h0M2004 876h0M2004 881h0M2005 878h0M2005 886h0M2005 895h0M2005 880h0M2005 868h0M2005 875h0M2005 878h0M2005 882h0M2006 878h0M2006 881h0M2006 885h0M2006 862h0M2006 879h0M2006 874h0M2006 873h0M2007 882h0M2007 882h0M2007 874h0M2007 870h0M2007 876h0M2007 879h0M2007 878h0M2007 867h0M2007 867h0M2008 875h0M2008 870h0M2008 881h0M2008 872h0M2008 885h0M2008 876h0M2008 867h0M2008 871h0M2009 872h0M2009 878h0M2009 871h0M2009 876h0M2010 876h0M2010 870h0M2010 870h0M2010 877h0M2010 867h0M2010 878h0M2011 875h0M2011 866h0M2011 873h0M2011 880h0M2011 867h0M2011 866h0M2011 883h0M2011 884h0M2011 881h0M2011 869h0M2012 876h0M2012 865h0M2012 877h0M2012 880h0M2012 871h0M2012 879h0M2013 865h0M2013 871h0M2013 874h0M2013 880h0M2013 881h0M2013 879h0M2013 867h0M2013 879h0M2014 879h0M2014 881h0M2014 870h0M2014 880h0M2014 877h0M2014 877h0M2015 868h0M2015 872h0M2015 866h0M2015 881h0M2015 875h0M2015 871h0M2015 872h0M2015 872h0M2016 870h0M2016 883h0M2016 866h0M2016 882h0M2016 876h0M2017 878h0M2017 875h0M2017 881h0M2017 880h0M2017 876h0M2017 866h0M2017 868h0M2017 881h0M2017 884h0M2018 876h0M2018 874h0M2018 878h0M2018 878h0M2018 868h0M2018 881h0M2018 872h0M2018 873h0M2019 872h0M2019 874h0M2019 892h0M2019 877h0M2020 884h0M2020 870h0M2020 865h0M2020 878h0M2020 880h0M2020 882h0M2020 875h0M2020 870h0M2020 877h0M2020 872h0M2021 864h0M2021 872h0M2021 877h0M2021 872h0M2021 883h0M2021 884h0M2021 883h0M2022 874h0M2022 879h0M2022 869h0M2022 882h0M2022 872h0M2023 884h0M2023 880h0M2023 881h0M2023 870h0M2023 868h0M2024 877h0M2024 875h0M2024 883h0M2024 872h0M2024 875h0M2024 881h0M2024 873h0M2024 878h0M2025 875h0M2025 875h0M2025 876h0M2026 872h0M2026 877h0M2026 874h0M2026 871h0M2026 870h0M2026 866h0M2027 873h0M2027 885h0M2027 882h0M2027 888h0M2027 876h0M2027 870h0M2027 876h0M2027 865h0M2027 873h0M2028 875h0M2028 869h0M2028 868h0M2028 871h0M2028 869h0M2028 866h0M2028 879h0M2028 892h0M2029 869h0M2029 878h0M2029 880h0M2029 870h0M2029 871h0M2029 880h0M2029 871h0M2029 877h0M2029 876h0M2030 866h0M2030 877h0M2030 868h0M2030 876h0M2030 877h0M2030 875h0M2031 879h0M2031 879h0M2031 877h0M2031 868h0M2031 867h0M2031 873h0M2031 875h0M2031 883h0M2031 867h0M2032 881h0M2032 880h0M2032 877h0M2032 875h0M2032 872h0M2032 882h0M2032 873h0M2032 874h0M2032 875h0M2032 872h0M2032 869h0M2032 876h0M2033 879h0M2033 880h0M2033 881h0M2033 879h0M2033 867h0M2033 875h0M2033 870h0M2034 880h0M2034 871h0M2034 871h0M2034 871h0M2034 880h0M2034 879h0M2034 880h0M2035 873h0M2035 873h0M2035 877h0M2035 875h0M2035 877h0M2035 878h0M2035 882h0M2035 867h0M2035 873h0M2035 878h0M2036 879h0M2036 877h0M2036 868h0M2037 877h0M2037 866h0M2037 881h0M2037 872h0M2037 881h0M2037 876h0M2037 879h0M2038 882h0M2038 872h0M2038 879h0M2038 868h0M2038 880h0M2038 881h0M2038 870h0M2038 873h0M2038 873h0M2038 869h0M2039 875h0M2039 877h0M2039 869h0M2039 873h0M2039 874h0M2039 875h0M2039 879h0M2040 876h0M2040 878h0M2040 872h0M2040 866h0M2040 869h0M2040 867h0M2040 869h0M2041 880h0M2041 873h0M2041 876h0M2041 867h0M2041 869h0M2041 882h0M2041 883h0M2041 869h0M2041 870h0M2042 885h0M2042 868h0M2042 869h0M2042 880h0M2042 866h0M2042 870h0M2043 878h0M2043 876h0M2043 879h0M2043 868h0M2043 869h0M2043 870h0M2043 881h0M2044 878h0M2044 877h0M2044 874h0M2044 869h0M2044 872h0M2044 885h0M2044 881h0M2044 870h0M2044 877h0M2044 877h0M2044 869h0M2045 881h0M2045 868h0M2045 877h0M2045 878h0M2045 880h0M2045 874h0M2045 871h0M2045 875h0M2045 877h0M2046 871h0M2047 869h0M2047 876h0M2047 873h0M2047 871h0M2047 881h0M2047 879h0M2047 872h0M2047 875h0M2048 870h0M2048 872h0M2048 874h0M2048 863h0M2048 874h0M2049 879h0M2049 871h0M2049 873h0M2049 875h0M2049 872h0M2050 872h0M2050 878h0M2050 875h0M2050 877h0M2050 875h0M2050 866h0M2050 871h0M2050 877h0M2050 866h0M2050 878h0M2050 878h0M2051 881h0M2051 870h0M2051 865h0M2052 871h0M2052 879h0M2052 873h0M2052 876h0M2053 870h0M2053 878h0M2053 871h0M1247 849h0M1572 818h0M1425 842h0M1529 863h0M1257 852h0M1528 880h0M1261 902h0M1467 877h0M1485 923h0M1689 854h0M1505 867h0M1630 930h0M1283 886h0M1272 880h0M1525 841h0M1349 835h0M1441 900h0M1505 885h0M1588 888h0M1526 904h0M1346 909h0M1546 908h0M1548 901h0M1327 900h0M1506 866h0M1533 839h0M1556 870h0M1521 859h0M1413 847h0M1658 876h0M1414 870h0M1626 876h0M1670 874h0M1683 851h0M1682 848h0M1221 888h0M1695 879h0M1698 861h0M1247 939h0M1520 858h0M1247 834h0M1325 856h0M1638 846h0M1604 843h0M1427 872h0M1598 887h0M1298 897h0M1701 890h0M1499 884h0M1359 843h0M1667 872h0M1271 888h0M1441 866h0M1612 880h0M1412 844h0M1368 890h0M1586 895h0M1521 850h0M1214 915h0M1647 872h0M1314 870h0M1574 841h0M1307 895h0M1528 857h0M1609 942h0M1507 846h0M1498 892h0M1467 844h0M1581 877h0M1331 910h0M1684 843h0M1561 854h0M1420 863h0M1668 916h0M1433 859h0M1337 880h0M1658 885h0M1304 898h0M1461 919h0M1213 854h0M1304 873h0M1709 855h0M1594 894h0M1386 900h0M1454 885h0M1712 881h0M1276 880h0M1664 826h0M1247 856h0M1631 882h0M1457 896h0M1382 914h0M1439 844h0M1691 904h0M1370 873h0M1311 847h0M1469 892h0M1564 857h0M1580 916h0M1231 867h0M1668 880h0M1219 855h0M1409 899h0M1350 862h0M1687 858h0M1675 888h0M1331 886h0M1519 879h0M1549 886h0M1612 878h0M1374 898h0M1667 876h0M1500 900h0M1508 836h0M1220 842h0M1701 855h0M1719 880h0M1262 882h0M1550 860h0M1220 898h0M1262 870h0M1699 906h0M1252 890h0M1305 859h0M1642 885h0M1597 894h0M1350 877h0M1265 884h0M1721 892h0M1528 855h0M1489 880h0M1376 868h0M1308 874h0M1599 882h0M1294 916h0M1687 876h0M1281 915h0M1405 924h0M1640 863h0M1656 879h0M1529 824h0M1399 883h0M1232 889h0M1456 908h0M1669 831h0M1252 869h0M1244 887h0M1714 897h0M1550 904h0M1551 898h0M1493 872h0M1227 900h0M1671 856h0M1675 879h0M1565 873h0M1291 841h0M1341 851h0M1511 882h0M1307 891h0M1424 891h0M1320 798h0M1507 860h0M1505 887h0M1537 887h0M1454 875h0M1556 882h0M1318 870h0M1301 866h0M1279 865h0M1570 889h0M1705 832h0M1506 889h0M1647 927h0M1269 880h0M1502 851h0M1480 853h0M1579 849h0M1383 871h0M1683 891h0M1227 892h0M1217 865h0M1570 861h0M1399 874h0M1505 874h0M1379 864h0M1691 864h0M1465 857h0M1640 877h0M1600 894h0M1546 906h0M1214 869h0M1657 886h0M1650 902h0M1285 886h0M1618 878h0M1640 890h0M1562 886h0M1424 887h0M1451 877h0M1215 870h0M1635 911h0M1606 897h0M1543 847h0M1680 879h0M1418 887h0M1464 878h0M1341 860h0M1419 870h0M1644 876h0M1689 860h0M1504 863h0M1403 909h0M1441 841h0M1537 886h0M1404 890h0M1621 870h0M1474 868h0M1492 856h0M1242 875h0M1344 904h0M1339 860h0M1494 865h0M1409 884h0M1498 847h0M1323 912h0M1545 877h0M1213 849h0M1550 882h0M1563 838h0M1560 883h0M1659 817h0M1305 853h0M1330 895h0M1546 865h0M1490 873h0M1414 888h0M1500 888h0M1370 887h0M1526 848h0M1570 894h0M1480 856h0M1221 903h0M1505 883h0M1375 877h0M1566 856h0M1551 857h0M1410 892h0M1616 865h0M1267 903h0M1475 868h0M1244 850h0M1458 877h0M1471 896h0M1579 879h0M1364 854h0M1711 883h0M1408 903h0M1391 883h0M1677 888h0M1346 844h0M1690 874h0M1356 830h0M1676 870h0M1317 923h0M1520 875h0M1611 847h0M1624 857h0M1472 859h0M1471 910h0M1341 888h0M1529 898h0M1545 851h0M1255 874h0M1549 853h0M1385 903h0M1356 846h0M1290 916h0M1447 865h0M1549 896h0M1522 858h0M1588 877h0M1577 855h0M1422 860h0M1404 894h0M1650 860h0M1526 818h0M1584 887h0M1298 877h0M1362 879h0M1258 897h0M1256 862h0M1666 871h0M1477 892h0M1717 854h0M1439 836h0M1335 864h0M1280 854h0M1650 850h0M1369 872h0M1353 909h0M1217 895h0M1485 902h0M1445 878h0M1505 877h0M1243 883h0M1324 841h0M1289 889h0M1367 865h0M1598 884h0M1653 861h0M1533 897h0M1232 921h0M1623 857h0M1260 886h0M1408 894h0M1558 916h0M1611 892h0M1291 857h0M1608 836h0M1631 876h0M1654 894h0M1632 866h0M1248 853h0M1559 869h0M1499 827h0M1238 901h0M1542 878h0M1595 846h0M1396 873h0M1421 897h0M1613 864h0M1296 858h0M1684 873h0M1287 884h0M1536 871h0M1595 894h0M1597 917h0M1701 868h0M1235 859h0M1258 878h0M1496 860h0M1685 879h0M1596 929h0M1306 876h0M1427 913h0M1464 885h0M1339 903h0M1257 878h0M1673 859h0M1556 879h0M1341 878h0M1579 878h0M1501 876h0M1427 898h0M1330 857h0M1334 873h0M1679 878h0M1328 846h0M1300 853h0M1548 890h0M1416 812h0M1516 893h0M1287 899h0M1315 865h0M1369 897h0M1414 892h0M1627 886h0M1316 867h0M1494 901h0M1545 884h0M1625 869h0M1277 894h0M1275 875h0M1607 890h0M1622 891h0M1721 881h0M1479 909h0M1512 879h0M1646 878h0M1381 889h0M1672 863h0M1695 867h0M1236 878h0M1512 877h0M1226 910h0M1423 871h0M1444 901h0M1319 887h0M1696 872h0M1478 895h0M1393 880h0M1512 885h0M1681 868h0M1268 832h0M1459 897h0M1503 849h0M1624 859h0M1452 881h0M1416 860h0M1491 867h0M1418 864h0M1463 890h0M1615 875h0M1408 926h0M1347 852h0M1442 870h0M1298 883h0M1711 890h0M1647 897h0M1244 922h0M1268 857h0M1460 892h0M1553 864h0M1602 824h0M1309 884h0M1546 901h0M1474 899h0M1420 884h0M1298 877h0M1473 846h0M1525 871h0M1230 907h0M1464 931h0M1706 853h0M1438 866h0M1362 851h0M1681 843h0M1265 872h0M1498 845h0M1514 874h0M1267 863h0M1424 862h0M1237 899h0M1379 862h0M1616 870h0M1302 862h0M1649 853h0M1221 900h0M1557 834h0M1613 866h0M1561 853h0M1385 871h0M1527 899h0M1375 883h0M1594 889h0M1459 869h0M1465 865h0M1456 868h0M1326 911h0M1341 883h0M1428 889h0M1639 850h0M1251 891h0M1694 872h0M1683 888h0M1551 835h0M1238 901h0M1477 845h0M1402 849h0M1391 877h0M1319 847h0M1278 862h0M1684 877h0M1640 890h0M1551 885h0M1589 858h0M1590 899h0M1463 886h0M1629 938h0M1501 850h0M1587 904h0M1454 938h0M1247 876h0M1244 868h0M1247 855h0M1641 870h0M1719 854h0M1688 859h0M1409 836h0M1460 884h0M1525 891h0M1509 881h0M1416 855h0M1562 870h0M1485 861h0M1323 906h0M1538 859h0M1324 878h0M1384 889h0M1237 886h0M1239 904h0M1678 902h0M1360 851h0M1664 865h0M1223 872h0M1458 881h0M1304 871h0M1448 891h0M1469 886h0M1509 893h0M1451 896h0M1383 899h0M1344 889h0M1604 899h0M1331 899h0M1502 880h0M1420 871h0M1528 923h0M1577 905h0M1669 901h0M1688 893h0M1382 875h0M1714 875h0M1523 907h0M1590 857h0M1634 899h0M1276 883h0M1547 878h0M1545 867h0M1238 884h0M1423 876h0M1564 875h0M1491 859h0M1536 863h0M1618 853h0M1404 877h0M1385 846h0M1326 872h0M1425 854h0M1286 872h0M1360 866h0M1572 890h0M1298 880h0M1351 881h0M1371 896h0M1601 873h0M1303 859h0M1216 839h0M1442 903h0M1526 883h0M1670 890h0M1616 856h0M1642 856h0M1479 880h0M1280 884h0M1347 877h0M1577 874h0M1666 854h0M1284 891h0M1633 876h0M1279 896h0M1706 893h0M1400 863h0M1396 847h0M1495 899h0M1660 833h0M1537 879h0M1346 918h0M1416 864h0M1366 899h0M1644 832h0M1525 904h0M1272 863h0M1612 841h0M1444 869h0M1238 878h0M1403 846h0M1598 821h0M1326 906h0M1617 869h0M1402 860h0M1642 849h0M1659 906h0M1510 886h0M1503 888h0M1428 828h0M1639 884h0M1445 832h0M1591 865h0M1677 873h0M1572 884h0M1366 826h0M1558 823h0M1358 887h0M1236 854h0M1329 877h0M1506 881h0M1572 881h0M1245 842h0M1640 858h0M1580 899h0M1564 894h0M1519 860h0M1366 912h0M1326 845h0M1620 871h0M1289 884h0M1591 866h0M1509 846h0M1385 880h0M1334 895h0M1387 838h0M1274 905h0M1412 893h0M1366 875h0M1501 857h0M1540 911h0M1628 872h0M1540 879h0M1631 866h0M1704 867h0M1504 908h0M1364 905h0M1500 853h0M1606 863h0M1364 883h0M1332 905h0M1406 885h0M1372 894h0M1593 860h0M1603 877h0M1301 904h0M1700 876h0M1337 852h0M1361 843h0M1360 872h0M1505 860h0M1628 851h0M1528 877h0M1510 852h0M1270 881h0M1491 847h0M1355 867h0M1668 870h0M1432 887h0M1370 880h0M1593 905h0M1657 876h0M1508 896h0M1710 843h0M1264 921h0M1666 916h0M1394 860h0M1245 843h0M1628 888h0M1489 883h0M1716 856h0M1673 848h0M1562 872h0M1461 861h0M1279 864h0M1290 901h0M1235 862h0M1682 890h0M1673 867h0M1373 902h0M1662 879h0M1279 894h0M1226 894h0M1712 853h0M1503 866h0M1445 846h0M1225 877h0M1319 883h0M1311 885h0M1542 863h0M1667 849h0M1673 932h0M1563 848h0M1582 815h0M1508 879h0M1707 881h0M1282 848h0M1285 814h0M1625 845h0M1502 846h0M1555 848h0M1269 827h0M1453 867h0M1218 868h0M1433 867h0M1630 884h0M1630 882h0M1481 868h0M1553 863h0M1275 852h0M1407 886h0M1298 880h0M1631 836h0M1390 913h0M1212 900h0M1273 854h0M1437 896h0M1534 875h0M1560 866h0M1662 846h0M1223 872h0M1266 893h0M1470 830h0M1306 888h0M1719 864h0M1423 853h0M1543 874h0M1432 859h0M1645 832h0M1712 852h0M1571 906h0M1433 894h0M1445 876h0M1547 878h0M1359 871h0M1505 874h0M1394 865h0M1411 884h0M1537 849h0M1679 888h0M1694 875h0M1687 861h0M1383 867h0M1477 878h0M1698 856h0M1620 850h0M1498 887h0M1379 870h0M1464 852h0M1562 871h0M1687 833h0M1511 845h0M1273 840h0M1403 869h0M1666 836h0M1275 842h0M1430 865h0M1462 890h0M1524 872h0M1563 857h0M1598 864h0M1672 896h0M1665 896h0M1224 846h0M1361 891h0M1440 900h0M1602 885h0M1682 886h0M1674 891h0M1357 843h0M1612 891h0M1497 909h0M1560 861h0M1341 856h0M1708 908h0M1238 849h0M1486 861h0M1318 890h0M1314 879h0M1373 882h0M1458 900h0M1516 912h0M1552 878h0M1630 861h0M1358 839h0M1669 857h0M1434 881h0M1264 867h0M1330 884h0M1429 874h0M1411 819h0M1227 878h0M1298 895h0M1478 900h0M1562 882h0M1510 889h0M1433 878h0M1564 867h0M1491 896h0M1405 848h0M1671 877h0M1465 902h0M1324 900h0M1356 859h0M1334 864h0M1390 861h0M1509 920h0M1290 888h0M1619 811h0M1359 879h0M1538 876h0M1530 877h0M1451 818h0M1416 893h0M1585 871h0M1424 881h0M1509 848h0M1398 900h0M1355 863h0M1463 820h0M1315 841h0M1688 851h0M1465 900h0M1586 874h0M1329 857h0M1418 914h0M1382 871h0M1323 895h0M1613 874h0M1258 866h0M1315 856h0M1376 888h0M1252 853h0M1532 911h0M1614 871h0M1663 904h0M1709 904h0M1454 868h0M1281 838h0M1606 927h0M1580 839h0M1596 870h0M1304 849h0M1529 817h0M1434 904h0M1314 843h0M1234 883h0M1258 850h0M1223 867h0M1596 864h0M1461 844h0M1567 879h0M1254 871h0M1625 867h0M1641 849h0M1627 901h0M1474 920h0M1563 862h0M1420 862h0M1348 886h0M1303 906h0M1260 841h0M1339 845h0M1398 871h0M1305 877h0M1283 907h0M1552 878h0M1406 879h0M1222 869h0M1211 863h0M1585 897h0M1548 862h0M1484 862h0M1574 876h0M1607 854h0M1304 856h0M1388 882h0M1233 862h0M1625 882h0M1515 868h0M1283 835h0M1653 878h0M1613 863h0M1505 914h0M1580 926h0M1428 880h0M1521 904h0M1697 892h0M1290 922h0M1539 880h0M1274 909h0M1674 877h0M1485 880h0M1665 905h0M1266 864h0M1546 886h0M1553 883h0M1557 865h0M1544 872h0M1318 816h0M1500 887h0M1246 880h0M1711 866h0M1701 929h0M1351 884h0M1550 893h0M1398 842h0M1486 871h0M1698 876h0M1640 882h0M1539 913h0M1403 920h0M1443 882h0M1251 869h0M1714 860h0M1599 854h0M1276 884h0M1678 871h0M1720 823h0M1532 894h0M1595 882h0M1462 903h0M1592 876h0M1663 900h0M1042 754h0M1064 743h0M1223 721h0M1184 729h0M1162 734h0M1307 695h0M1347 713h0M1407 680h0M1395 698h0M1531 678h0M1530 692h0M1581 728h0M1713 744h0M1841 577h0M1841 648h0M1846 674h0M1842 669h0M1850 674h0M1805 691h0M2048 853h0M2048 804h0M2048 763h0M915 937h0M924 917h0M1037 1003h0M1076 995h0M1076 1002h0M1242 1079h0M1234 1053h0M1306 1122h0M1290 1195h0M1289 1203h0M1349 1105h0M1349 1141h0M1349 1153h0M1380 1157h0M1397 1211h0M1443 1093h0M1443 1131h0M1480 1095h0M1480 1122h0M1479 1172h0M1507 1082h0M1695 1029h0M1818 1108h0M1838 1116h0M1818 1146h0M1838 1147h0M1811 1285h0M1846 1287h0M1845 1325h0M1876 1084h0M1863 1082h0" stroke="#d95319" stroke-width="12.3" stroke-linecap="round" fill="none"/><path d="M859.6 874.0H2104.6" stroke="#1c1c1c" stroke-width="2.2"/><path d="M915.3 1368.2V1356.2M1049.6 1368.2V1356.2M1183.9 1368.2V1356.2M1318.1 1368.2V1356.2M1452.4 1368.2V1356.2M1586.7 1368.2V1356.2M1721.0 1368.2V1356.2M1855.3 1368.2V1356.2M1989.5 1368.2V1356.2M859.6 1251.5H871.6M859.6 1062.8H871.6M859.6 874.0H871.6M859.6 685.2H871.6M859.6 496.5H871.6M859.6 378.8V1368.2H2104.6" stroke="#262626" stroke-width="1.5" fill="none"/></svg>
<span class="t" style="left:909.88px;top:1379px;font-size:19.5px;color:#3a3a3a;">0</span>
<span class="t" style="left:1027.89px;top:1379px;font-size:19.5px;color:#3a3a3a;">1000</span>
<span class="t" style="left:1162.17px;top:1379px;font-size:19.5px;color:#3a3a3a;">2000</span>
<span class="t" style="left:1296.45px;top:1379px;font-size:19.5px;color:#3a3a3a;">3000</span>
<span class="t" style="left:1430.73px;top:1379px;font-size:19.5px;color:#3a3a3a;">4000</span>
<span class="t" style="left:1565.01px;top:1379px;font-size:19.5px;color:#3a3a3a;">5000</span>
<span class="t" style="left:1699.29px;top:1379px;font-size:19.5px;color:#3a3a3a;">6000</span>
<span class="t" style="left:1833.57px;top:1379px;font-size:19.5px;color:#3a3a3a;">7000</span>
<span class="t" style="left:1967.85px;top:1379px;font-size:19.5px;color:#3a3a3a;">8000</span>
<span class="t" style="left:822.81px;top:1242px;font-size:19.5px;color:#3a3a3a;">-10</span>
<span class="t" style="left:833.66px;top:1053px;font-size:19.5px;color:#3a3a3a;">-5</span>
<span class="t" style="left:840.15px;top:864px;font-size:19.5px;color:#3a3a3a;">0</span>
<span class="t" style="left:840.15px;top:676px;font-size:19.5px;color:#3a3a3a;">5</span>
<span class="t" style="left:829.31px;top:487px;font-size:19.5px;color:#3a3a3a;">10</span>
<span class="t" style="left:1412.32px;top:1403px;font-size:21.8px;color:#262626;">True response</span>
<span class="t" style="left:1364.87px;top:353px;font-size:21.9px;color:#000;font-weight:bold;">Predictions: model 5.4</span>
<span class="t" style="left:736.6px;top:863.1px;font-size:21.8px;color:#262626;transform-origin:50% 50%;transform:rotate(-90deg);">Residuals (A)</span>
<div class="a" style="left:0px;top:215px;width:648px;height:35px;background:#fff;"></div>
<span class="t" style="left:12.30px;top:225px;font-size:19.5px;color:#1a1a1a;transform:scaleX(0.9879);">Models</span>
<div class="a" style="left:615.3px;top:226.5px;width:2.6px;height:2.6px;background:#444;border-radius:1.3px;"></div>
<div class="a" style="left:615.3px;top:232.5px;width:2.6px;height:2.6px;background:#444;border-radius:1.3px;"></div>
<div class="a" style="left:615.3px;top:238.5px;width:2.6px;height:2.6px;background:#444;border-radius:1.3px;"></div>
<div class="a" style="left:0px;top:250px;width:4px;height:1290px;background:#f0f0f0;"></div>
<div class="a" style="left:0px;top:250px;width:645px;height:1256px;background:#f0f0f0;"></div>
<div class="a" style="left:3px;top:249px;width:642px;height:2px;background:#7f7f7f;"></div>
<div class="a" style="left:3px;top:250px;width:1.4px;height:943px;background:#7f7f7f;"></div>
<div class="a" style="left:643px;top:250px;width:2px;height:1256px;background:#808080;"></div>
<div class="a" style="left:3px;top:291px;width:642px;height:2px;background:#7f7f7f;"></div>
<span class="t" style="left:11.90px;top:262px;font-size:18px;color:#000;">Sort by</span>
<div class="a" style="left:75.5px;top:253.8px;width:173px;height:33px;background:#f2f2f2;border:1.3px solid #8a8a8a;border-radius:6px;"></div>
<span class="t" style="left:83.30px;top:261px;font-size:18px;color:#000;">Model Number</span>
<svg class="a" style="left:224.3px;top:265.3px;" width="12.4" height="10.4" viewBox="0 0 12.4 10.4"><path d="M0 0H12L6 10Z" fill="#444"/></svg>
<div class="a" style="left:252px;top:253.8px;width:33px;height:33px;background:#f2f2f2;border:1.3px solid #8a8a8a;border-radius:6px;"></div>
<div class="a" style="left:288px;top:253.8px;width:33px;height:33px;background:#f2f2f2;border:1.3px solid #8a8a8a;border-radius:6px;"></div>
<svg class="a" style="left:252px;top:253.8px;" width="33" height="33" viewBox="0 0 33 33"><rect x="14.9" y="6.3" width="3.2" height="3.2" fill="#222"/><path d="M16.5 12V24" stroke="#222" stroke-width="3"/><path d="M10.3 19.8L16.5 27L22.7 19.8L16.5 22.2Z" fill="#222" stroke="#222" stroke-width="1.2" stroke-linejoin="round"/></svg>
<svg class="a" style="left:288px;top:253.8px;" width="33" height="33" viewBox="0 0 33 33"><rect x="14.9" y="23.8" width="3.2" height="3.2" fill="#222"/><path d="M16.5 21.5V9" stroke="#222" stroke-width="3"/><path d="M10.3 13.6L16.5 6.4L22.7 13.6L16.5 11.2Z" fill="#222" stroke="#222" stroke-width="1.2" stroke-linejoin="round"/></svg>
<div class="a" style="left:530px;top:253.8px;width:33px;height:33px;background:#f2f2f2;border:1.3px solid #8a8a8a;border-radius:6px;"></div>
<div class="a" style="left:566px;top:253.8px;width:33px;height:33px;background:#f2f2f2;border:1.3px solid #8a8a8a;border-radius:6px;"></div>
<div class="a" style="left:602px;top:253.8px;width:33px;height:33px;background:#f2f2f2;border:1.3px solid #8a8a8a;border-radius:6px;"></div>
<svg class="a" style="left:530px;top:253.8px;" width="33" height="33" viewBox="0 0 33 33"><rect x="6" y="7" width="21.5" height="20" fill="#f4f4f4" stroke="#3c3c3c" stroke-width="1.6"/><rect x="10" y="10.5" width="5" height="5" fill="#2e8ed6"/><rect x="10" y="18.5" width="5" height="5" fill="#e0632a"/><path d="M17.5 13H24.5M17.5 21H24.5" stroke="#555" stroke-width="1.6"/></svg>
<svg class="a" style="left:566px;top:253.8px;" width="33" height="33" viewBox="0 0 33 33"><path d="M8 6.5H16L19 9.5V19H8Z" fill="#f6f6f6" stroke="#9a9a9a" stroke-width="1.3"/><path d="M13.5 13H21.5L25 16.5V27H13.5Z" fill="#f6f6f6" stroke="#9a9a9a" stroke-width="1.3"/><path d="M16 19H22.5M16 21.7H22.5M16 24.3H22.5" stroke="#aaa" stroke-width="1"/></svg>
<svg class="a" style="left:602px;top:253.8px;" width="33" height="33" viewBox="0 0 33 33"><ellipse cx="16.5" cy="9" rx="9.5" ry="3.2" fill="#777" stroke="#444" stroke-width="1.2"/><path d="M7.5 10.5L9.5 27Q16.5 29.5 23.5 27L25.5 10.5Q16.5 14 7.5 10.5Z" fill="#8c8c8c" stroke="#444" stroke-width="1.2"/><path d="M11.5 14V26M14.8 14.5V26.8M18.2 14.5V26.8M21.5 14V26" stroke="#555" stroke-width="1"/></svg>
<div class="a" style="left:3px;top:366px;width:642px;height:2px;background:#7f7f7f;"></div>
<div class="a" style="left:7.4px;top:296.4px;width:32.6px;height:32.6px;background:#f3f3f3;border:1.3px solid #8e8e8e;border-radius:6px;"></div>
<svg class="a" style="left:7.4px;top:296.4px;" width="32.6" height="32.6" viewBox="0 0 32.6 32.6"><path d="M16.6 5.2L19.7 13.3L28.4 13.8L21.6 19.2L23.9 27.6L16.6 22.9L9.3 27.6L11.6 19.2L4.8 13.8L13.5 13.3Z" fill="#f7f7f7" stroke="#c6c6c6" stroke-width="1.5" stroke-linejoin="round"/></svg>
<span class="t" style="left:48.30px;top:304px;font-size:18px;color:#000;font-weight:bold;">1</span>
<span class="t" style="left:68.61px;top:304px;font-size:18px;color:#000;">Tree</span>
<span class="t" style="left:424.00px;top:304px;font-size:18px;color:#000;">RMSE (Validation):</span>
<span class="t" style="left:580.94px;top:304px;font-size:18px;color:#000;">19.643</span>
<span class="t" style="left:7.20px;top:337px;font-size:18px;color:#000;">Last change: Fine Tree</span>
<span class="t" style="left:544.24px;top:337px;font-size:18px;color:#000;">1/1 features</span>
<div class="a" style="left:3px;top:441px;width:642px;height:2px;background:#7f7f7f;"></div>
<div class="a" style="left:7.4px;top:371.4px;width:32.6px;height:32.6px;background:#f3f3f3;border:1.3px solid #8e8e8e;border-radius:6px;"></div>
<svg class="a" style="left:7.4px;top:371.4px;" width="32.6" height="32.6" viewBox="0 0 32.6 32.6"><path d="M16.6 5.2L19.7 13.3L28.4 13.8L21.6 19.2L23.9 27.6L16.6 22.9L9.3 27.6L11.6 19.2L4.8 13.8L13.5 13.3Z" fill="#f7f7f7" stroke="#c6c6c6" stroke-width="1.5" stroke-linejoin="round"/></svg>
<span class="t" style="left:48.30px;top:379px;font-size:18px;color:#000;font-weight:bold;">2.1</span>
<span class="t" style="left:83.62px;top:379px;font-size:18px;color:#000;">Tree</span>
<span class="t" style="left:424.00px;top:379px;font-size:18px;color:#000;">RMSE (Validation):</span>
<span class="t" style="left:580.94px;top:379px;font-size:18px;color:#000;">19.643</span>
<span class="t" style="left:7.20px;top:412px;font-size:18px;color:#000;">Last change: Fine Tree</span>
<span class="t" style="left:544.24px;top:412px;font-size:18px;color:#000;">1/1 features</span>
<div class="a" style="left:3px;top:516px;width:642px;height:2px;background:#7f7f7f;"></div>
<div class="a" style="left:7.4px;top:446.4px;width:32.6px;height:32.6px;background:#f3f3f3;border:1.3px solid #8e8e8e;border-radius:6px;"></div>
<svg class="a" style="left:7.4px;top:446.4px;" width="32.6" height="32.6" viewBox="0 0 32.6 32.6"><path d="M16.6 5.2L19.7 13.3L28.4 13.8L21.6 19.2L23.9 27.6L16.6 22.9L9.3 27.6L11.6 19.2L4.8 13.8L13.5 13.3Z" fill="#f7f7f7" stroke="#c6c6c6" stroke-width="1.5" stroke-linejoin="round"/></svg>
<span class="t" style="left:48.30px;top:454px;font-size:18px;color:#000;font-weight:bold;">2.2</span>
<span class="t" style="left:83.62px;top:454px;font-size:18px;color:#000;">Tree</span>
<span class="t" style="left:424.00px;top:454px;font-size:18px;color:#000;">RMSE (Validation):</span>
<span class="t" style="left:580.94px;top:454px;font-size:18px;color:#000;">19.643</span>
<span class="t" style="left:7.20px;top:487px;font-size:18px;color:#000;">Last change: Medium Tree</span>
<span class="t" style="left:544.24px;top:487px;font-size:18px;color:#000;">1/1 features</span>
<div class="a" style="left:3px;top:591px;width:642px;height:2px;background:#7f7f7f;"></div>
<div class="a" style="left:7.4px;top:521.4px;width:32.6px;height:32.6px;background:#f3f3f3;border:1.3px solid #8e8e8e;border-radius:6px;"></div>
<svg class="a" style="left:7.4px;top:521.4px;" width="32.6" height="32.6" viewBox="0 0 32.6 32.6"><path d="M16.6 5.2L19.7 13.3L28.4 13.8L21.6 19.2L23.9 27.6L16.6 22.9L9.3 27.6L11.6 19.2L4.8 13.8L13.5 13.3Z" fill="#f7f7f7" stroke="#c6c6c6" stroke-width="1.5" stroke-linejoin="round"/></svg>
<span class="t" style="left:48.30px;top:529px;font-size:18px;color:#000;font-weight:bold;">2.3</span>
<span class="t" style="left:83.62px;top:529px;font-size:18px;color:#000;">Tree</span>
<span class="t" style="left:424.00px;top:529px;font-size:18px;color:#000;">RMSE (Validation):</span>
<span class="t" style="left:580.94px;top:529px;font-size:18px;color:#000;">19.643</span>
<span class="t" style="left:7.20px;top:562px;font-size:18px;color:#000;">Last change: Coarse Tree</span>
<span class="t" style="left:544.24px;top:562px;font-size:18px;color:#000;">1/1 features</span>
<div class="a" style="left:3px;top:666px;width:642px;height:2px;background:#7f7f7f;"></div>
<div class="a" style="left:7.4px;top:596.4px;width:32.6px;height:32.6px;background:#f3f3f3;border:1.3px solid #8e8e8e;border-radius:6px;"></div>
<svg class="a" style="left:7.4px;top:596.4px;" width="32.6" height="32.6" viewBox="0 0 32.6 32.6"><path d="M16.6 5.2L19.7 13.3L28.4 13.8L21.6 19.2L23.9 27.6L16.6 22.9L9.3 27.6L11.6 19.2L4.8 13.8L13.5 13.3Z" fill="#f7f7f7" stroke="#c6c6c6" stroke-width="1.5" stroke-linejoin="round"/></svg>
<span class="t" style="left:48.30px;top:604px;font-size:18px;color:#000;font-weight:bold;">3</span>
<span class="t" style="left:68.61px;top:604px;font-size:18px;color:#000;">SVM</span>
<span class="t" style="left:424.00px;top:604px;font-size:18px;color:#000;">RMSE (Validation):</span>
<span class="t" style="left:580.94px;top:604px;font-size:18px;color:#000;">276.00</span>
<span class="t" style="left:7.20px;top:637px;font-size:18px;color:#000;">Last change: Fine Gaussian SVM</span>
<span class="t" style="left:544.24px;top:637px;font-size:18px;color:#000;">1/1 features</span>
<div class="a" style="left:3px;top:741px;width:642px;height:2px;background:#7f7f7f;"></div>
<div class="a" style="left:7.4px;top:671.4px;width:32.6px;height:32.6px;background:#f3f3f3;border:1.3px solid #8e8e8e;border-radius:6px;"></div>
<svg class="a" style="left:7.4px;top:671.4px;" width="32.6" height="32.6" viewBox="0 0 32.6 32.6"><path d="M16.6 5.2L19.7 13.3L28.4 13.8L21.6 19.2L23.9 27.6L16.6 22.9L9.3 27.6L11.6 19.2L4.8 13.8L13.5 13.3Z" fill="#f7f7f7" stroke="#c6c6c6" stroke-width="1.5" stroke-linejoin="round"/></svg>
<span class="t" style="left:48.30px;top:679px;font-size:18px;color:#000;font-weight:bold;">4.1</span>
<span class="t" style="left:83.62px;top:679px;font-size:18px;color:#000;">Tree</span>
<span class="t" style="left:424.00px;top:679px;font-size:18px;color:#000;">RMSE (Validation):</span>
<span class="t" style="left:580.94px;top:679px;font-size:18px;color:#000;">19.641</span>
<span class="t" style="left:7.20px;top:712px;font-size:18px;color:#000;">Last change: Fine Tree</span>
<span class="t" style="left:466.20px;top:712px;font-size:18px;color:#000;">1/1 features (PCA on)</span>
<div class="a" style="left:3px;top:816px;width:642px;height:2px;background:#7f7f7f;"></div>
<div class="a" style="left:7.4px;top:746.4px;width:32.6px;height:32.6px;background:#f3f3f3;border:1.3px solid #8e8e8e;border-radius:6px;"></div>
<svg class="a" style="left:7.4px;top:746.4px;" width="32.6" height="32.6" viewBox="0 0 32.6 32.6"><path d="M16.6 5.2L19.7 13.3L28.4 13.8L21.6 19.2L23.9 27.6L16.6 22.9L9.3 27.6L11.6 19.2L4.8 13.8L13.5 13.3Z" fill="#f7f7f7" stroke="#c6c6c6" stroke-width="1.5" stroke-linejoin="round"/></svg>
<span class="t" style="left:48.30px;top:754px;font-size:18px;color:#000;font-weight:bold;">4.2</span>
<span class="t" style="left:83.62px;top:754px;font-size:18px;color:#000;">Tree</span>
<span class="t" style="left:424.00px;top:754px;font-size:18px;color:#000;">RMSE (Validation):</span>
<span class="t" style="left:580.94px;top:754px;font-size:18px;color:#000;">19.641</span>
<span class="t" style="left:7.20px;top:787px;font-size:18px;color:#000;">Last change: Medium Tree</span>
<span class="t" style="left:466.20px;top:787px;font-size:18px;color:#000;">1/1 features (PCA on)</span>
<div class="a" style="left:3px;top:891px;width:642px;height:2px;background:#7f7f7f;"></div>
<div class="a" style="left:7.4px;top:821.4px;width:32.6px;height:32.6px;background:#f3f3f3;border:1.3px solid #8e8e8e;border-radius:6px;"></div>
<svg class="a" style="left:7.4px;top:821.4px;" width="32.6" height="32.6" viewBox="0 0 32.6 32.6"><path d="M16.6 5.2L19.7 13.3L28.4 13.8L21.6 19.2L23.9 27.6L16.6 22.9L9.3 27.6L11.6 19.2L4.8 13.8L13.5 13.3Z" fill="#f7f7f7" stroke="#c6c6c6" stroke-width="1.5" stroke-linejoin="round"/></svg>
<span class="t" style="left:48.30px;top:829px;font-size:18px;color:#000;font-weight:bold;">4.3</span>
<span class="t" style="left:83.62px;top:829px;font-size:18px;color:#000;">Tree</span>
<span class="t" style="left:424.00px;top:829px;font-size:18px;color:#000;">RMSE (Validation):</span>
<span class="t" style="left:580.94px;top:829px;font-size:18px;color:#000;">19.641</span>
<span class="t" style="left:7.20px;top:862px;font-size:18px;color:#000;">Last change: Coarse Tree</span>
<span class="t" style="left:466.20px;top:862px;font-size:18px;color:#000;">1/1 features (PCA on)</span>
<div class="a" style="left:3px;top:966px;width:642px;height:2px;background:#7f7f7f;"></div>
<div class="a" style="left:7.4px;top:896.4px;width:32.6px;height:32.6px;background:#f3f3f3;border:1.3px solid #8e8e8e;border-radius:6px;"></div>
<svg class="a" style="left:7.4px;top:896.4px;" width="32.6" height="32.6" viewBox="0 0 32.6 32.6"><path d="M16.6 5.2L19.7 13.3L28.4 13.8L21.6 19.2L23.9 27.6L16.6 22.9L9.3 27.6L11.6 19.2L4.8 13.8L13.5 13.3Z" fill="#f7f7f7" stroke="#c6c6c6" stroke-width="1.5" stroke-linejoin="round"/></svg>
<span class="t" style="left:48.30px;top:904px;font-size:18px;color:#000;font-weight:bold;">5.1</span>
<span class="t" style="left:83.62px;top:904px;font-size:18px;color:#000;">Gaussian Process Regression</span>
<span class="t" style="left:424.00px;top:904px;font-size:18px;color:#000;">RMSE (Validation):</span>
<span class="t" style="left:580.94px;top:904px;font-size:18px;color:#000;">3.9273</span>
<span class="t" style="left:7.20px;top:937px;font-size:18px;color:#000;">Last change: Rational Quadratic GPR</span>
<span class="t" style="left:466.20px;top:937px;font-size:18px;color:#000;">1/1 features (PCA on)</span>
<div class="a" style="left:3px;top:1041px;width:642px;height:2px;background:#7f7f7f;"></div>
<div class="a" style="left:7.4px;top:971.4px;width:32.6px;height:32.6px;background:#f3f3f3;border:1.3px solid #8e8e8e;border-radius:6px;"></div>
<svg class="a" style="left:7.4px;top:971.4px;" width="32.6" height="32.6" viewBox="0 0 32.6 32.6"><path d="M16.6 5.2L19.7 13.3L28.4 13.8L21.6 19.2L23.9 27.6L16.6 22.9L9.3 27.6L11.6 19.2L4.8 13.8L13.5 13.3Z" fill="#f7f7f7" stroke="#c6c6c6" stroke-width="1.5" stroke-linejoin="round"/></svg>
<span class="t" style="left:48.30px;top:979px;font-size:18px;color:#000;font-weight:bold;">5.2</span>
<span class="t" style="left:83.62px;top:979px;font-size:18px;color:#000;">Gaussian Process Regression</span>
<span class="t" style="left:424.00px;top:979px;font-size:18px;color:#000;">RMSE (Validation):</span>
<span class="t" style="left:580.94px;top:979px;font-size:18px;color:#000;">5.1950</span>
<span class="t" style="left:7.20px;top:1012px;font-size:18px;color:#000;">Last change: Squared Exponential GPR</span>
<span class="t" style="left:466.20px;top:1012px;font-size:18px;color:#000;">1/1 features (PCA on)</span>
<div class="a" style="left:3px;top:1116px;width:642px;height:2px;background:#7f7f7f;"></div>
<div class="a" style="left:7.4px;top:1046.4px;width:32.6px;height:32.6px;background:#f3f3f3;border:1.3px solid #8e8e8e;border-radius:6px;"></div>
<svg class="a" style="left:7.4px;top:1046.4px;" width="32.6" height="32.6" viewBox="0 0 32.6 32.6"><path d="M16.6 5.2L19.7 13.3L28.4 13.8L21.6 19.2L23.9 27.6L16.6 22.9L9.3 27.6L11.6 19.2L4.8 13.8L13.5 13.3Z" fill="#f7f7f7" stroke="#c6c6c6" stroke-width="1.5" stroke-linejoin="round"/></svg>
<span class="t" style="left:48.30px;top:1054px;font-size:18px;color:#000;font-weight:bold;">5.3</span>
<span class="t" style="left:83.62px;top:1054px;font-size:18px;color:#000;">Gaussian Process Regression</span>
<span class="t" style="left:424.00px;top:1054px;font-size:18px;color:#000;">RMSE (Validation):</span>
<span class="t" style="left:580.94px;top:1054px;font-size:18px;color:#000;">3.2290</span>
<span class="t" style="left:7.20px;top:1087px;font-size:18px;color:#000;">Last change: Matern 5/2 GPR</span>
<span class="t" style="left:466.20px;top:1087px;font-size:18px;color:#000;">1/1 features (PCA on)</span>
<div class="a" style="left:4.4px;top:1118px;width:639.2px;height:73px;background:#c5e0f5;"></div>
<div class="a" style="left:3px;top:1191px;width:642px;height:1.2px;background:#8c8c8c;"></div>
<div class="a" style="left:7.4px;top:1121.4px;width:32.6px;height:32.6px;background:#f3f3f3;border:1.3px solid #8e8e8e;border-radius:6px;"></div>
<svg class="a" style="left:7.4px;top:1121.4px;" width="32.6" height="32.6" viewBox="0 0 32.6 32.6"><path d="M16.6 5.2L19.7 13.3L28.4 13.8L21.6 19.2L23.9 27.6L16.6 22.9L9.3 27.6L11.6 19.2L4.8 13.8L13.5 13.3Z" fill="#f7f7f7" stroke="#c6c6c6" stroke-width="1.5" stroke-linejoin="round"/></svg>
<span class="t" style="left:48.30px;top:1129px;font-size:18px;color:#000;font-weight:bold;">5.4</span>
<span class="t" style="left:83.62px;top:1129px;font-size:18px;color:#000;">Gaussian Process Regression</span>
<div class="a" style="left:415px;top:1121.6px;width:224.5px;height:32px;background:#f7f7f7;border:1px solid #7a7a7a;"></div>
<span class="t" style="left:422.00px;top:1129px;font-size:18px;color:#000;">RMSE (Validation): </span>
<span class="t" style="left:579.24px;top:1129px;font-size:18px;color:#000;font-weight:bold;">1.4175</span>
<span class="t" style="left:7.20px;top:1162px;font-size:18px;color:#000;">Last change: Exponential GPR</span>
<span class="t" style="left:466.20px;top:1162px;font-size:18px;color:#000;">1/1 features (PCA on)</span>
<div class="a" style="left:0px;top:1238px;width:3px;height:46px;background:#2f6fed;"></div>
<div class="a" style="left:0px;top:1506px;width:648px;height:34px;background:#e4e4e4;"></div>
<div class="a" style="left:0px;top:1505.5px;width:648px;height:1.3px;background:#a0a0a0;"></div>
<svg class="a" style="left:12px;top:1514px;" width="16" height="18" viewBox="0 0 16 18"><rect x="0.3" y="0" width="2.6" height="18" fill="#9b9b9b"/><path d="M15.5 0V18L3.5 9Z" fill="#9b9b9b"/></svg>
<div class="a" style="left:2438.2px;top:291px;width:33px;height:31.5px;background:#f3f3f3;border:1.3px solid #8a8a8a;border-radius:6px;"></div>
<div class="a" style="left:2479.3px;top:291px;width:33px;height:31.5px;background:#f3f3f3;border:1.3px solid #8a8a8a;border-radius:6px;"></div>
<div class="a" style="left:2527.4px;top:291px;width:31px;height:31.5px;background:#f3f3f3;border:1.3px solid #8a8a8a;border-radius:6px;"></div>
<svg class="a" style="left:2438.2px;top:291px;" width="33" height="31.5" viewBox="0 0 33 31.5"><path d="M12.7 5.5H20.3V12H27V19.5H20.3V26H12.7V19.5H6V12H12.7Z" fill="#8db4de" stroke="#2f5f9e" stroke-width="1.5" stroke-linejoin="round"/></svg>
<svg class="a" style="left:2479.3px;top:291px;" width="33" height="31.5" viewBox="0 0 33 31.5"><rect x="6" y="12" width="21" height="7.5" rx="1" fill="#8db4de" stroke="#2f5f9e" stroke-width="1.5"/></svg>
<svg class="a" style="left:2527.4px;top:291px;" width="31" height="31.5" viewBox="0 0 31 31.5"><path d="M5 12.5H13V6.5L22 15.7L13 25V19H5Z" fill="#8db4de" stroke="#2f5f9e" stroke-width="1.5" stroke-linejoin="round"/><rect x="23.5" y="6" width="3" height="19.5" fill="#2f5f9e"/></svg>
<div class="a" style="left:2261px;top:325px;width:297px;height:1175px;border:1.3px solid #6e6e6e;border-bottom:none;border-right:none;"></div>
<span class="t" style="left:2277.20px;top:345px;font-size:18px;color:#000;font-weight:bold;">Legend</span>
<div class="a" style="left:2285px;top:374px;width:252px;height:45px;background:#fff;border:1.3px solid #777;"></div>
<div class="a" style="left:2305px;top:389.3px;width:13.4px;height:13.4px;background:#d95319;border-radius:7px;"></div>
<span class="t" style="left:2345.70px;top:387px;font-size:18px;color:#000;">Residuals</span>
<span class="t" style="left:2277.20px;top:453px;font-size:18px;color:#000;font-weight:bold;">Style</span>
<div class="a" style="left:2278.3px;top:489.3px;width:20px;height:20px;background:#fff;border:1.4px solid #333;border-radius:10px;"></div>
<div class="a" style="left:2283.3px;top:494.3px;width:10px;height:10px;background:#111;border-radius:5px;"></div>
<span class="t" style="left:2303.40px;top:490px;font-size:18px;color:#000;">Markers</span>
<div class="a" style="left:2278.3px;top:521.9px;width:20px;height:20px;background:#fff;border:1.4px solid #333;border-radius:10px;"></div>
<span class="t" style="left:2303.40px;top:523px;font-size:18px;color:#000;">Lines</span>
<div class="a" style="left:2278.3px;top:554.5px;width:20px;height:20px;background:#f2f2f2;border:1.4px solid #b8b8b8;border-radius:10px;"></div>
<span class="t" style="left:2303.40px;top:555px;font-size:18px;color:#a8a8a8;">Box plot</span>
<span class="t" style="left:2277.20px;top:614px;font-size:18px;color:#000;font-weight:bold;">X-axis</span>
<div class="a" style="left:2278.3px;top:649.3px;width:20px;height:20px;background:#fff;border:1.4px solid #333;border-radius:10px;"></div>
<div class="a" style="left:2283.3px;top:654.3px;width:10px;height:10px;background:#111;border-radius:5px;"></div>
<span class="t" style="left:2303.40px;top:650px;font-size:18px;color:#000;">True response</span>
<div class="a" style="left:2278.3px;top:681.6px;width:20px;height:20px;background:#fff;border:1.4px solid #333;border-radius:10px;"></div>
<span class="t" style="left:2303.40px;top:682px;font-size:18px;color:#000;">Predicted response</span>
<div class="a" style="left:2278.3px;top:714.5px;width:20px;height:20px;background:#fff;border:1.4px solid #333;border-radius:10px;"></div>
<span class="t" style="left:2303.40px;top:715px;font-size:18px;color:#000;">Record number</span>
<div class="a" style="left:2278.3px;top:747.6px;width:20px;height:20px;background:#fff;border:1.4px solid #333;border-radius:10px;"></div>
<span class="t" style="left:2303.40px;top:748px;font-size:18px;color:#000;">Predictor:</span>
<div class="a" style="left:2277.2px;top:776.5px;width:266.2px;height:34px;background:#f2f2f2;border:1.3px solid #c2c2c2;border-radius:5px;"></div>
<div class="a" style="left:2509px;top:777px;width:1.3px;height:33px;background:#c2c2c2;"></div>
<span class="t" style="left:2284.10px;top:784px;font-size:18px;color:#a6a6a6;">column_1</span>
<svg class="a" style="left:2520px;top:788.5px;" width="12" height="10" viewBox="0 0 12 10"><path d="M0 0H12L6 10Z" fill="#b0b0b0"/></svg>
<span class="t" style="left:2277.20px;top:844px;font-size:18px;color:#0b62c4;font-weight:bold;text-decoration:underline;">How to use the residuals plot</span>
<span class="t" style="left:2110.00px;top:1403px;font-size:30px;color:#bdbdbd;transform:scaleX(0.9892);">Activate Windows</span>
<span class="t" style="left:2110.00px;top:1442px;font-size:22px;color:#bcbcbc;transform:scaleX(0.9831);">Go to Settings to activate Windows.</span>
<div class="a" style="left:2527px;top:1236.6px;width:49px;height:49px;background:linear-gradient(90deg,#7aaafb 0%,#2f7df6 70%);border-radius:25px;"></div>
<svg class="a" style="left:2543px;top:1253px;" width="12" height="19" viewBox="0 0 12 19"><path d="M9.5 1.5L2.5 9.5L9.5 17.5" fill="none" stroke="#fff" stroke-width="3" stroke-linecap="round" stroke-linejoin="round"/></svg>
<div class="a" style="left:645px;top:1506px;width:1915px;height:34px;background:#e4e4e4;"></div>
<div class="a" style="left:645px;top:1505.7px;width:1915px;height:1.3px;background:#9a9a9a;"></div>
<div class="a" style="left:644.3px;top:1506px;width:1.3px;height:34px;background:#9a9a9a;"></div>
<span class="t" style="left:655.40px;top:1515px;font-size:18px;color:#2a2a2a;">Data set: voltage</span>
<span class="t" style="left:818.30px;top:1515px;font-size:18px;color:#2a2a2a;">Observations: 8439</span>
<span class="t" style="left:1003.10px;top:1515px;font-size:18px;color:#2a2a2a;">Size: 133 kB</span>
<span class="t" style="left:1132.10px;top:1515px;font-size:18px;color:#2a2a2a;">Predictors: 1</span>
<span class="t" style="left:1260.70px;top:1515px;font-size:18px;color:#2a2a2a;">Response: A</span>
<span class="t" style="left:1449.00px;top:1515px;font-size:18px;color:#2a2a2a;">Validation: 5-fold cross-validation</span>
<div class="a" style="left:1763.8px;top:1507px;width:96.7px;height:33.5px;background:#fdfdfd;"></div>
<div class="a" style="left:1768.5px;top:1510px;width:1.3px;height:1.3px;background:#999;"></div>
<div class="a" style="left:1768.5px;top:1513.3px;width:1.3px;height:1.3px;background:#999;"></div>
<div class="a" style="left:1768.5px;top:1516.6px;width:1.3px;height:1.3px;background:#999;"></div>
<div class="a" style="left:1768.5px;top:1519.9px;width:1.3px;height:1.3px;background:#999;"></div>
<div class="a" style="left:1768.5px;top:1523.2px;width:1.3px;height:1.3px;background:#999;"></div>
<div class="a" style="left:1768.5px;top:1526.5px;width:1.3px;height:1.3px;background:#999;"></div>
<div class="a" style="left:1768.5px;top:1529.8px;width:1.3px;height:1.3px;background:#999;"></div>
<div class="a" style="left:1768.5px;top:1533.1px;width:1.3px;height:1.3px;background:#999;"></div>
<div class="a" style="left:1768.5px;top:1536.4px;width:1.3px;height:1.3px;background:#999;"></div>
<span class="t" style="left:1780px;top:1514.5px;font-size:19px;font-family:'Liberation Mono',monospace;color:#222;transform:scaleX(0.86)">CH</span>
<svg class="a" style="left:1805px;top:1511px;" width="28" height="26" viewBox="0 0 28 26"><path d="M6 3L24 1.5Q26.5 1.5 26 4L24.5 21Q24.3 23.5 22 23.7L5.5 25Q3 25 3.3 22.5L4.5 5.5Q4.7 3.2 6 3Z" fill="#f4622a"/><path d="M20.5 7Q13 5 9.5 8Q7 11 11 12.8L17 15Q20 16.5 17.5 18.8Q14 21 8 19" fill="none" stroke="#fff" stroke-width="2.8" stroke-linecap="round"/></svg>
<div class="a" style="left:1841.5px;top:1516.5px;width:8px;height:3px;background:#222;"></div>
<svg class="a" style="left:1841.5px;top:1526px;" width="8" height="6" viewBox="0 0 8 6"><path d="M0 0H8L4 5.5Z" fill="#222"/></svg>
<div class="a" style="left:0px;top:1540px;width:2560px;height:60px;background:linear-gradient(90deg,#21383f 0%,#21363f 40%,#1e2f41 65%,#1b2744 100%);"></div>
<div class="a" style="left:0px;top:1540px;width:3px;height:60px;background:#0e1230;"></div>
<svg class="a" style="left:26.5px;top:1558px;" width="25" height="25" viewBox="0 0 25 25"><path d="M0 3.6L10.2 2.2V11.8H0ZM11.6 2L25 0V11.8H11.6ZM0 13.2H10.2V22.8L0 21.4ZM11.6 13.2H25V25L11.6 23Z" fill="#fff"/></svg>
<div class="a" style="left:76.4px;top:1540px;width:429.5px;height:60px;background:#f2f2f2;border:1.6px solid #c4c4c4;border-bottom:none;"></div>
<svg class="a" style="left:90px;top:1555px;" width="30" height="30" viewBox="0 0 30 30"><circle cx="18.3" cy="11.7" r="7.6" fill="none" stroke="#1c1c1c" stroke-width="1.8"/><path d="M12.8 17.2L3.5 26" stroke="#1c1c1c" stroke-width="1.9"/></svg>
<span class="t" style="left:136.10px;top:1562px;font-size:22.5px;color:#262626;transform:scaleX(0.9881);">Type here to search</span>
<svg class="a" style="left:391px;top:1541px;overflow:hidden" width="114.5" height="59" viewBox="0 0 114.5 59"><ellipse cx="58" cy="62" rx="62" ry="10" fill="#c9b6c9"/><ellipse cx="40" cy="62" rx="30" ry="7" fill="#a9d8c6"/><ellipse cx="80" cy="63" rx="26" ry="7" fill="#d7b6d6"/><rect x="7" y="36" width="7.5" height="22" fill="#8aa9b6"/><rect x="100" y="38" width="8.5" height="22" fill="#5f9db5"/><rect x="93" y="46" width="6" height="14" fill="#b6a08e"/><path d="M24.5 10L26.5 10L27.5 22L31 44L34.5 56H30L28 47H23L21 56H16.5L20 44L23.5 22Z" fill="#8b5d55"/><rect x="23" y="14" width="5" height="2.5" fill="#a57468"/><path d="M25.5 4V10" stroke="#8b5d55" stroke-width="1.2"/><ellipse cx="61" cy="40" rx="31" ry="8.5" fill="#a48fd0"/><path d="M35 42H87V58H35Z" fill="#4a3fa0"/><ellipse cx="61" cy="41" rx="26" ry="6" fill="#2fb4cf"/><path d="M37 47H85V51H37Z" fill="#6c63c4"/><path d="M37 54H85V57H37Z" fill="#6c63c4"/><path d="M42 42V58M50 42V58M58 42V58M66 42V58M74 42V58M81 42V58" stroke="#d9d3f0" stroke-width="0.9"/><path d="M35.0 9.0L41.0 9.0M34.8 9.9L40.2 12.5M34.2 10.6L38.0 15.3M33.4 10.9L34.8 16.8M32.6 10.9L31.2 16.8M31.8 10.6L28.0 15.3M31.2 9.9L25.8 12.5M31.0 9.0L25.0 9.0M31.2 8.1L25.8 5.5M31.8 7.4L28.0 2.7M32.6 7.1L31.2 1.2M33.4 7.1L34.8 1.2M34.2 7.4L38.0 2.7M34.8 8.1L40.2 5.5" stroke="#4a9be0" stroke-width="0.9" fill="none"/><path d="M48.5 22.0L54.5 22.0M48.3 22.9L53.7 25.5M47.7 23.6L51.5 28.3M46.9 23.9L48.3 29.8M46.1 23.9L44.7 29.8M45.3 23.6L41.5 28.3M44.7 22.9L39.3 25.5M44.5 22.0L38.5 22.0M44.7 21.1L39.3 18.5M45.3 20.4L41.5 15.7M46.1 20.1L44.7 14.2M46.9 20.1L48.3 14.2M47.7 20.4L51.5 15.7M48.3 21.1L53.7 18.5" stroke="#f1ab3c" stroke-width="0.9" fill="none"/><path d="M75.1 14.0L84.5 14.0M74.9 15.2L83.5 18.8M74.2 16.2L80.8 22.8M73.2 16.9L76.8 25.5M72.0 17.1L72.0 26.5M70.8 16.9L67.2 25.5M69.8 16.2L63.2 22.8M69.1 15.2L60.5 18.8M68.9 14.0L59.5 14.0M69.1 12.8L60.5 9.2M69.8 11.8L63.2 5.2M70.8 11.1L67.2 2.5M72.0 10.9L72.0 1.5M73.2 11.1L76.8 2.5M74.2 11.8L80.8 5.2M74.9 12.8L83.5 9.2" stroke="#18a862" stroke-width="0.9" fill="none"/><path d="M99.0 20.0L105.0 20.0M98.8 20.9L104.2 23.5M98.2 21.6L102.0 26.3M97.4 21.9L98.8 27.8M96.6 21.9L95.2 27.8M95.8 21.6L92.0 26.3M95.2 20.9L89.8 23.5M95.0 20.0L89.0 20.0M95.2 19.1L89.8 16.5M95.8 18.4L92.0 13.7M96.6 18.1L95.2 12.2M97.4 18.1L98.8 12.2M98.2 18.4L102.0 13.7M98.8 19.1L104.2 16.5" stroke="#ea4d62" stroke-width="0.9" fill="none"/></svg>
<svg class="a" style="left:531px;top:1558px;" width="25" height="24" viewBox="0 0 25 24"><path d="M1 0.8V4H17V0.8M1 23.2V20H17V23.2" fill="none" stroke="#fff" stroke-width="1.5"/><rect x="2.5" y="6.8" width="13" height="10.4" fill="none" stroke="#fff" stroke-width="1.5"/><path d="M22.7 0.5V6.5M22.7 10V23.5" stroke="#fff" stroke-width="1.5"/><rect x="21.2" y="6.5" width="3" height="3.5" fill="#fff"/></svg>
<svg class="a" style="left:601.5px;top:1551.5px;" width="37.5" height="36.5" viewBox="0 0 37.5 36.5"><defs><linearGradient id="eg1" x1="0" y1="0" x2="1" y2="1"><stop offset="0" stop-color="#35c1f1"/><stop offset="1" stop-color="#1e63b8"/></linearGradient><linearGradient id="eg2" x1="0" y1="0" x2="1" y2="0.6"><stop offset="0" stop-color="#2aa9e0"/><stop offset="0.6" stop-color="#54d15c"/><stop offset="1" stop-color="#8ce04a"/></linearGradient></defs>
<circle cx="18.5" cy="18.3" r="18" fill="url(#eg1)"/><path d="M1 15C3 4 13 -1 22 1C32 3.5 38 11 36.5 20C35.5 25 30 27 25 25.5C21 24 22 20 23.5 18C25 15 22 10.5 16 10.5C9 10.5 3 14 1 15Z" fill="url(#eg2)"/>
<path d="M8.5 22C8 29 13 35.5 21 36.2C27 36.5 32 33 34 29C29 32 22 31.5 18.5 27C16 23.5 17 19 19.5 17C14 16 9 18 8.5 22Z" fill="#15539e"/></svg>
<svg class="a" style="left:676px;top:1555px;" width="38" height="30" viewBox="0 0 38 30"><path d="M0.5 14.5L7 8L20 21L13.5 27.5Z" fill="#195abd"/><path d="M13.5 27.5L7 21L28.5 0.5L37.5 7.5Z" fill="#41a5ee"/></svg>
<svg class="a" style="left:753.5px;top:1556px;" width="34" height="28.5" viewBox="0 0 34 28.5"><path d="M1 3.5Q1 1.5 3 1.5H12L15 4.5H30Q32 4.5 32 6.5V9H1Z" fill="#e9a825"/><rect x="1" y="6.8" width="32" height="19.5" rx="1.5" fill="#fcd462"/><path d="M8 27V17Q8 15.5 9.5 15.5H24.5Q26 15.5 26 17V27H21.5V20H12.5V27Z" fill="#3f8fd6"/><rect x="1" y="24.8" width="32" height="1.8" fill="#e4b83f"/></svg>
<svg class="a" style="left:826px;top:1552px;" width="38" height="36" viewBox="0 0 38 36"><path d="M23.5 23.5L33.5 33" stroke="#2038e0" stroke-width="4.5" stroke-linecap="round"/><circle cx="15.3" cy="15" r="11.3" fill="none" stroke="#1f6cf6" stroke-width="4"/><path d="M8.8 14.5A6.5 6.5 0 0 1 14.8 8.6" fill="none" stroke="#53a0ff" stroke-width="2" stroke-linecap="round"/></svg>
<div class="a" style="left:884px;top:1540px;width:67px;height:60px;background:#4b5f67;"></div>
<div class="a" style="left:951px;top:1540px;width:6px;height:60px;background:#33464e;"></div>
<svg class="a" style="left:902.3px;top:1553.6px;" width="35.6" height="33" viewBox="0 0 35.6 33"><defs><linearGradient id="mlg2" x1="0" y1="0" x2="1" y2="0"><stop offset="0" stop-color="#8e2216"/><stop offset="0.4" stop-color="#d8501c"/><stop offset="0.58" stop-color="#f6b23c"/><stop offset="0.78" stop-color="#e0581c"/><stop offset="1" stop-color="#b8301a"/></linearGradient></defs>
<g transform="scale(1.45)"><path d="M0.3 13.2L8 8.8C9.6 8 10.6 7 11.8 5.6C10.6 9 9 13 7 16.5L4.4 15.4Z" fill="#4d95d6"/>
<path d="M16.5 0.7C18.6 4 21 12 24.3 18C22 16 20 14.5 18.5 14.3C16 16 13.5 21.5 11 22.4C9.5 21 8 18.6 7 16.5C10 13 13.6 6 16.5 0.7Z" fill="url(#mlg2)"/></g></svg>
<div class="a" style="left:977.2px;top:1552px;width:36px;height:36.3px;background:#1677ff;border-radius:5px;"></div>
<svg class="a" style="left:977.2px;top:1552px;" width="36" height="36.3" viewBox="0 0 36 36.3"><path d="M18.5 7C25.5 7 30 11.5 30 17.5C30 23.5 25.5 28 18.5 28C17 28 15.5 27.8 14.2 27.4L8.5 30.5L9.5 24.5C7.5 22.7 6.5 20.3 6.5 17.5C6.5 11.5 11.5 7 18.5 7Z" fill="#fff"/><path d="M18.5 7C25.5 7 30 11.5 30 17.5C30 23.5 25.5 28 18.5 28Z" fill="#cfe2ff"/><circle cx="14" cy="16.5" r="2.3" fill="#1677ff"/><circle cx="22" cy="16.5" r="2.3" fill="#1677ff"/><path d="M14 16.5H22" stroke="#1677ff" stroke-width="1.4"/></svg>
<svg class="a" style="left:1055.3px;top:1552px;" width="30" height="36" viewBox="0 0 30 36"><rect x="0.5" y="0.5" width="28.5" height="35" rx="2.5" fill="#7c8794"/><rect x="3.5" y="3.5" width="22.5" height="6.5" fill="#4fd1f2"/><rect x="3.5" y="13" width="6" height="5.5" rx="0.8" fill="#dfe3e8"/><rect x="11.5" y="13" width="6" height="5.5" rx="0.8" fill="#dfe3e8"/><rect x="19.5" y="13" width="6" height="5.5" rx="0.8" fill="#dfe3e8"/><rect x="3.5" y="20.2" width="6" height="5.5" rx="0.8" fill="#dfe3e8"/><rect x="11.5" y="20.2" width="6" height="5.5" rx="0.8" fill="#dfe3e8"/><rect x="3.5" y="27.4" width="6" height="5.5" rx="0.8" fill="#dfe3e8"/><rect x="11.5" y="27.4" width="6" height="5.5" rx="0.8" fill="#dfe3e8"/><rect x="19.5" y="20.2" width="6.5" height="12.8" rx="0.8" fill="#1d4e9e"/></svg>
<svg class="a" style="left:1126px;top:1555px;" width="38.5" height="31" viewBox="0 0 38.5 31"><path d="M13.5 0.5C21 0.5 26.5 5 26.5 11C26.5 17 21 21.5 13.5 21.5C12 21.5 10.5 21.3 9.2 20.9L4.5 23.5L5.5 19C2.3 17 0.5 14.2 0.5 11C0.5 5 6 0.5 13.5 0.5Z" fill="#2dc84d"/><circle cx="9" cy="8" r="1.5" fill="#1a8f34"/><circle cx="17.5" cy="8" r="1.5" fill="#1a8f34"/><path d="M26.5 10C33 10 38 14 38 19.2C38 22 36.5 24.5 34 26.2L34.8 30L30.8 27.8C29.5 28.2 28 28.4 26.5 28.4C20 28.4 15 24.3 15 19.2C15 14 20 10 26.5 10Z" fill="#e9e9e9"/><circle cx="22.8" cy="17" r="1.3" fill="#8c8c8c"/><circle cx="30.2" cy="17" r="1.3" fill="#8c8c8c"/></svg>
<div class="a" style="left:590px;top:1597px;width:60.7px;height:3px;background:#76b9ed;"></div>
<div class="a" style="left:665px;top:1597px;width:61px;height:3px;background:#76b9ed;"></div>
<div class="a" style="left:740px;top:1597px;width:48px;height:3px;background:#76b9ed;"></div>
<div class="a" style="left:884px;top:1597px;width:67px;height:3px;background:#76b9ed;"></div>
<div class="a" style="left:965.3px;top:1597px;width:60.7px;height:3px;background:#76b9ed;"></div>
<div class="a" style="left:1040px;top:1597px;width:61px;height:3px;background:#76b9ed;"></div>
<div class="a" style="left:1114.8px;top:1597px;width:61.2px;height:3px;background:#76b9ed;"></div>
<div class="a" style="left:788px;top:1597px;width:12.7px;height:3px;background:#5b93c4;"></div>
<div class="a" style="left:951px;top:1597px;width:6px;height:3px;background:#5b93c4;"></div>
<svg class="a" style="left:2095px;top:1555px;" width="38" height="34" viewBox="0 0 38 34"><defs><linearGradient id="wc" x1="0" y1="0" x2="0" y2="1"><stop offset="0" stop-color="#cfe0fb"/><stop offset="1" stop-color="#7ea6ee"/></linearGradient><linearGradient id="wd" x1="0" y1="0" x2="0" y2="1"><stop offset="0" stop-color="#3a8bff"/><stop offset="1" stop-color="#0a3fe0"/></linearGradient></defs>
<path d="M8.5 22C3.5 22 0.8 18.8 0.8 15.3C0.8 11.5 4 9 7.5 9.2C8.5 4 12.5 0.8 17.5 0.8C22.5 0.8 26.5 4 27.5 8.5C32.5 8 37 11.3 37 16C37 19.5 34 22 30.5 22Z" fill="url(#wc)"/>
<path d="M19 9L22.3 15.5A3.6 3.6 0 1 1 15.7 15.5Z" fill="url(#wd)"/><path d="M12 17L15.8 24.5A4.2 4.2 0 1 1 8.2 24.5Z" fill="url(#wd)"/><path d="M27 19.5L30.6 26.5A4 4 0 1 1 23.4 26.5Z" fill="url(#wd)"/></svg>
<span class="t" style="left:2144.60px;top:1563px;font-size:19px;color:#fff;">29°C</span>
<svg class="a" style="left:2200.5px;top:1560.5px;" width="41" height="21" viewBox="0 0 41 21"><g fill="none" stroke="#fff" stroke-width="1.7" stroke-linecap="round" stroke-linejoin="round">
<path d="M0.8 7.2H17.6"/><path d="M9.2 0.8V7.2C9 12.5 6 17 0.8 19.6"/><path d="M9.4 8C10.5 13 13.5 17.2 18 19.6"/>
<path d="M22.3 1.6H40.2"/><path d="M23.6 19.8V5.6H39V17.8Q39 19.6 36.8 19.4"/><path d="M31.3 1.6V19.8"/>
<path d="M26.5 9.3L28.6 11M26.5 13.6L28.6 15.3M33.9 9.3L36 11M33.9 13.6L36 15.3"/></g></svg>
<svg class="a" style="left:2279.5px;top:1564px;" width="19" height="11" viewBox="0 0 19 11"><path d="M1 10L9.5 1.2L18 10" fill="none" stroke="#fff" stroke-width="1.6"/></svg>
<svg class="a" style="left:2313px;top:1562px;" width="24" height="17" viewBox="0 0 24 17"><path d="M5.5 16C2.5 16 0.5 14 0.5 11.5C0.5 9.2 2.3 7.5 4.5 7.3C5 3.5 8 0.8 11.8 0.8C15 0.8 17.6 2.8 18.6 5.8C21.5 5.8 23.6 8 23.6 10.8C23.6 13.8 21.3 16 18.5 16Z" fill="#f2f2f2"/><path d="M4.5 7.3C8 6 12 7.5 14.5 10.5L23.5 11.5C23.3 14 21.2 16 18.5 16H5.5C2.5 16 0.5 14 0.5 11.5C0.5 9.2 2.3 7.5 4.5 7.3Z" fill="#c9c9c9"/></svg>
<svg class="a" style="left:2348.5px;top:1560.5px;" width="25.5" height="18" viewBox="0 0 25.5 18"><rect x="6.5" y="4" width="17" height="11" fill="#e6e6e6" stroke="#fff" stroke-width="1.4"/><rect x="23.8" y="7" width="1.6" height="5" fill="#fff"/><path d="M1.5 0.5V3.5M5 0.5V3.5M0.6 3.6H5.9V6.5Q5.9 8.5 3.3 8.5Q0.6 8.5 0.6 6.5ZM3.3 8.5V12Q3.3 14 6 14" fill="none" stroke="#fff" stroke-width="1.2"/></svg>
<span class="t" style="left:2397.10px;top:1549px;font-size:17.5px;color:#fff;transform:scaleX(1.0279);">7:43 AM</span>
<span class="t" style="left:2389.50px;top:1576px;font-size:17.5px;color:#fff;transform:scaleX(1.0610);">8/12/2024</span>
<svg class="a" style="left:2501px;top:1557.5px;" width="37" height="37" viewBox="0 0 37 37"><path d="M0.5 0.5H24V17.5H7.5L7.5 23.5L1.5 17.5H0.5Z" fill="#fff"/><path d="M4.5 5H20M4.5 8.5H20M4.5 12H20" stroke="#1d2a44" stroke-width="1.2"/><circle cx="23.6" cy="23.6" r="12" fill="#16161c" stroke="#5a5a62" stroke-width="1"/></svg>
<span class="t" style="left:2519.69px;top:1573px;font-size:18px;color:#fff;font-weight:bold;">1</span>
<div class="a" style="left:2555.5px;top:1540px;width:1.2px;height:60px;background:#6b7383;"></div>
</body></html>
